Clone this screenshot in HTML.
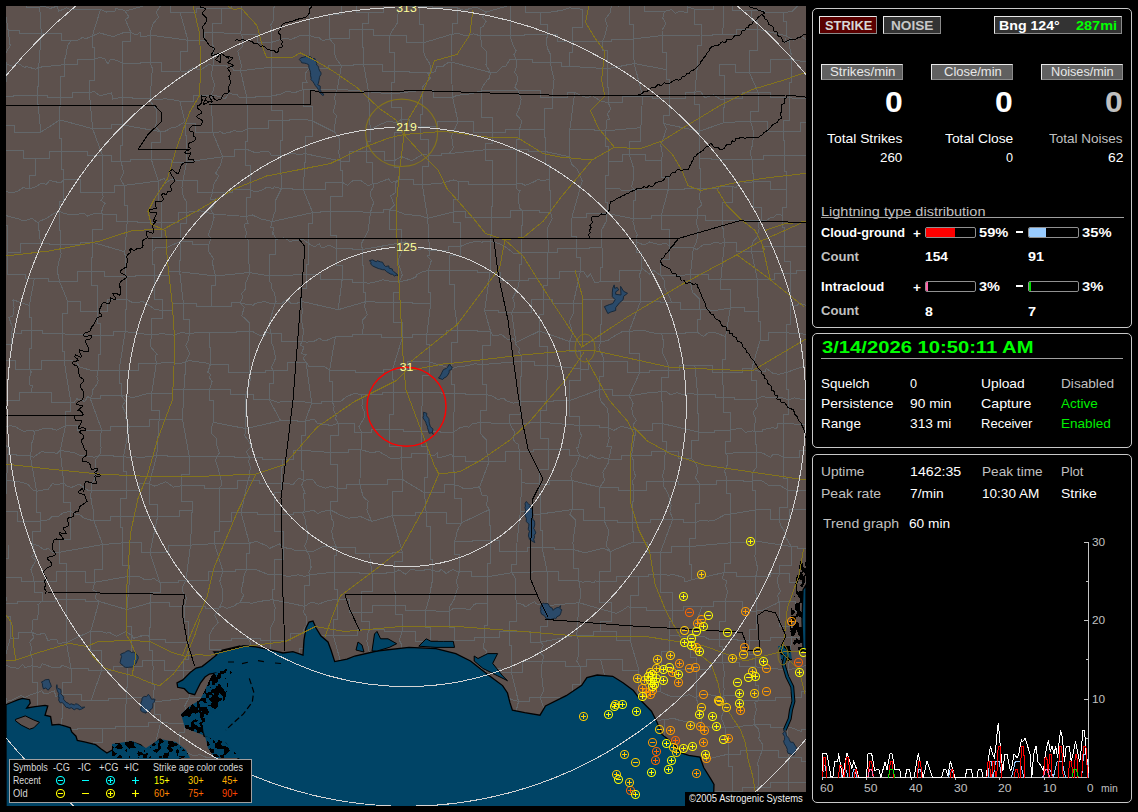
<!DOCTYPE html>
<html><head><meta charset="utf-8"><style>
html,body{margin:0;padding:0;background:#000;width:1138px;height:812px;overflow:hidden;position:relative;font-family:"Liberation Sans", sans-serif;}
.t{position:absolute;white-space:nowrap;font-family:"Liberation Sans", sans-serif;}
svg{position:absolute;}
</style></head><body>
<svg width="1138" height="812" viewBox="0 0 1138 812" style="left:0;top:0">
<defs><clipPath id="mc"><rect x="6" y="6" width="800" height="800"/></clipPath></defs>
<g clip-path="url(#mc)">
<rect x="6" y="6" width="800" height="800" fill="#5d514d"/>
<path d="M3.5,1.1 L26.7,1.1 L26.7,7.0 L39.7,7.0 M3.5,1.1 L8.1,30.0 M8.1,30.0 L19.2,30.0 L19.2,33.4 L41.3,33.4 M8.1,30.0 L9.4,39.9 L10.2,45.9 L4.3,55.0 L6.5,64.1 M6.5,64.1 L13.4,66.4 L17.0,62.7 L24.5,67.4 L26.4,66.7 L35.7,69.1 L38.7,67.3 M6.5,64.1 L6.5,81.3 L-0.2,81.3 L-0.2,96.1 M-0.2,96.1 L13.7,96.1 L13.7,95.4 L37.1,95.4 M-0.2,96.1 L-0.2,111.3 L-0.5,111.3 L-0.5,125.1 M-0.5,125.1 L14.4,125.1 L14.4,132.2 L40.8,132.2 M-0.5,125.1 L1.8,129.3 L-0.5,132.6 L-1.3,137.4 L-1.4,145.9 L-0.0,150.3 M-0.0,150.3 L23.1,150.3 L23.1,158.3 L35.6,158.3 M-0.0,150.3 L4.9,190.6 M4.9,190.6 L9.5,192.9 L16.5,191.8 L22.7,188.0 L22.1,187.4 L29.8,188.8 M4.9,190.6 L4.9,197.5 L0.7,197.5 L0.7,212.1 M0.7,212.1 L8.1,216.4 L18.0,218.6 L24.0,221.1 L31.8,218.3 L38.1,222.9 M0.7,212.1 L0.7,225.6 L7.8,225.6 L7.8,252.3 M7.8,252.3 L20.0,252.3 L20.0,243.0 L40.5,243.0 M7.8,252.3 L7.8,261.0 L7.1,261.0 L7.1,274.6 M7.1,274.6 L25.6,274.6 L25.6,278.4 L34.4,278.4 M12.7,299.7 L29.3,305.5 M12.7,299.7 L14.1,307.6 L12.9,315.9 L9.0,317.6 L12.9,329.0 L11.0,333.1 M11.0,333.1 L21.9,333.1 L21.9,330.6 L31.4,330.6 M11.0,333.1 L11.0,344.9 L1.0,344.9 L1.0,360.6 M1.0,360.6 L15.2,360.6 L15.2,369.8 L29.8,369.8 M1.0,360.6 L1.0,374.9 L3.3,374.9 L3.3,400.4 M3.3,400.4 L19.5,400.4 L19.5,392.5 L30.8,392.5 M3.3,400.4 L3.3,418.4 L1.5,418.4 L1.5,427.1 M1.5,427.1 L10.5,425.8 L14.4,426.3 L23.9,431.6 L28.7,430.1 L34.5,431.2 M1.5,427.1 L0.5,431.8 L3.1,439.4 L3.5,443.1 L9.0,448.4 L7.9,454.2 M7.9,454.2 L16.8,454.2 L16.8,455.3 L30.1,455.3 M7.9,454.2 L6.7,479.9 M6.7,479.9 L12.6,481.1 L21.1,482.2 L27.6,484.1 L33.1,490.1 L36.7,491.4 M6.7,479.9 L6.7,493.1 L-0.2,493.1 L-0.2,511.9 M-0.2,511.9 L17.9,511.9 L17.9,521.1 L40.5,521.1 M8.5,545.0 L8.5,558.4 L3.4,558.4 L3.4,577.2 M3.4,577.2 L21.5,577.2 L21.5,581.4 L34.0,581.4 M3.4,577.2 L3.5,583.7 L4.4,589.9 L6.6,599.4 L5.3,603.2 M5.3,603.2 L17.1,603.2 L17.1,601.1 L42.4,601.1 M5.3,603.2 L5.3,616.4 L10.1,616.4 L10.1,638.8 M10.1,638.8 L18.5,638.8 L18.5,632.2 L31.5,632.2 M10.1,638.8 L2.4,667.0 M2.4,667.0 L7.4,665.5 L10.6,667.3 L18.6,668.3 L22.8,664.4 L24.7,667.4 L32.3,665.8 M2.4,667.0 L6.4,701.3 M6.4,701.3 L11.2,700.4 L21.4,695.4 L24.3,697.7 L28.9,695.4 L37.2,692.7 M6.4,701.3 L9.2,723.0 M9.2,723.0 L12.7,750.7 M12.7,750.7 L17.1,751.6 L21.4,750.9 L26.9,756.3 L32.1,754.6 L34.2,756.9 M12.7,750.7 L12.7,774.0 L4.9,774.0 L4.9,789.6 M4.9,789.6 L11.1,789.5 L17.5,789.5 L20.7,791.9 L28.2,787.1 L33.7,787.3 L42.3,788.7 M4.9,789.6 L4.9,798.5 L1.1,798.5 L1.1,815.8 M1.1,815.8 L11.9,815.8 L11.9,817.6 L36.2,817.6 M1.1,815.8 L-0.5,848.4 M-0.5,848.4 L38.5,839.8 M39.7,7.0 L43.1,6.1 L50.1,8.5 L57.2,6.1 L58.7,11.3 L66.5,7.8 L71.6,9.9 M39.7,7.0 L41.3,33.4 M41.3,33.4 L61.6,33.4 L61.6,40.2 L71.2,40.2 M41.3,33.4 L38.7,67.3 M38.7,67.3 L64.5,64.6 M38.7,67.3 L38.7,86.6 L37.1,86.6 L37.1,95.4 M37.1,95.4 L47.9,95.4 L47.9,97.9 L60.4,97.9 M37.1,95.4 L40.8,132.2 M40.8,132.2 L59.9,119.9 M35.6,158.3 L49.4,158.3 L49.4,151.3 L61.9,151.3 M35.6,158.3 L35.6,175.8 L29.8,175.8 L29.8,188.8 M29.8,188.8 L36.3,186.5 L41.3,183.2 L46.4,184.3 L49.6,180.6 L60.9,182.9 L63.8,179.7 M38.1,222.9 L40.5,220.8 L47.1,218.1 L52.4,214.3 L59.0,211.1 M38.1,222.9 L40.5,243.0 M40.5,243.0 L49.9,243.0 L49.9,244.1 L60.4,244.1 M34.4,278.4 L48.4,278.4 L48.4,281.2 L59.4,281.2 M34.4,278.4 L29.3,305.5 M29.3,305.5 L29.3,317.7 L31.4,317.7 L31.4,330.6 M31.4,330.6 L42.3,330.6 L42.3,333.9 L62.5,333.9 M31.4,330.6 L31.4,348.7 L29.8,348.7 L29.8,369.8 M29.8,369.8 L41.3,369.8 L41.3,360.7 L64.1,360.7 M29.8,369.8 L31.2,371.9 L29.5,377.6 L29.5,383.5 L29.3,384.8 L32.6,385.9 L30.8,392.5 M30.8,392.5 L51.6,392.5 L51.6,402.9 L70.9,402.9 M34.5,431.2 L44.4,428.3 L50.3,428.4 L56.5,430.1 L65.5,425.8 M34.5,431.2 L33.7,437.9 L31.4,444.2 L31.3,451.3 L30.1,455.3 M30.1,455.3 L33.5,457.2 L41.6,451.6 L44.2,452.0 L51.2,452.7 L57.3,453.2 L60.2,450.4 M30.1,455.3 L36.7,491.4 M36.7,491.4 L40.7,490.4 L48.3,489.1 L52.4,483.8 L57.8,484.7 L63.8,482.7 M36.7,491.4 L36.7,512.1 L40.5,512.1 L40.5,521.1 M40.5,521.1 L48.7,519.8 L51.8,516.9 L58.3,516.5 L63.3,512.6 L70.6,511.3 M40.5,521.1 L40.5,531.3 L32.9,531.3 L32.9,544.8 M32.9,544.8 L37.5,545.1 L43.7,549.6 L48.4,548.6 L52.4,552.7 L59.3,552.3 M32.9,544.8 L35.1,553.7 L31.5,556.6 L35.9,560.2 L30.9,569.6 L33.8,577.8 L34.0,581.4 M34.0,581.4 L56.7,581.4 L56.7,571.1 L66.4,571.1 M34.0,581.4 L34.0,592.7 L42.4,592.7 L42.4,601.1 M42.4,601.1 L55.4,601.1 L55.4,599.4 L66.6,599.4 M42.4,601.1 L38.0,604.7 L38.2,611.5 L37.8,619.3 L33.0,620.0 L32.8,626.5 L31.5,632.2 M31.5,632.2 L36.3,634.2 L45.0,633.8 L47.8,640.3 L56.7,639.3 L58.2,643.3 L66.4,642.7 M31.5,632.2 L33.9,637.4 L29.7,642.2 L31.9,649.0 L30.1,652.7 L32.9,660.8 L32.3,665.8 M32.3,665.8 L40.1,667.4 L42.3,663.8 L52.9,667.6 L60.6,667.1 L62.2,665.3 L71.1,668.7 M32.3,665.8 L32.3,682.1 L37.2,682.1 L37.2,692.7 M37.2,692.7 L41.6,690.8 L43.9,693.8 L47.8,693.5 L54.2,690.8 L55.9,696.6 L62.7,694.1 M37.2,692.7 L37.2,707.9 L29.1,707.9 L29.1,724.9 M29.1,724.9 L61.3,729.8 M29.1,724.9 L34.2,756.9 M34.2,756.9 L47.4,756.9 L47.4,759.9 L66.5,759.9 M34.2,756.9 L42.3,788.7 M42.3,788.7 L46.8,786.7 L52.3,782.7 L60.6,784.3 L63.6,782.1 M36.2,817.6 L70.4,822.8 M36.2,817.6 L36.2,832.5 L38.5,832.5 L38.5,839.8 M38.5,839.8 L59.9,839.8 L59.9,850.3 L70.9,850.3 M71.6,9.9 L87.2,9.9 L87.2,9.4 L100.5,9.4 M71.2,40.2 L77.5,40.2 L82.2,37.7 L86.3,38.5 L92.2,36.2 M71.2,40.2 L67.6,45.4 L66.0,55.2 L64.9,58.9 L64.5,64.6 M64.5,64.6 L77.9,64.6 L77.9,59.4 L94.0,59.4 M64.5,64.6 L64.5,76.2 L60.4,76.2 L60.4,97.9 M60.4,97.9 L72.0,97.9 L72.0,92.9 L89.4,92.9 M60.4,97.9 L60.4,106.6 L59.9,106.6 L59.9,119.9 M59.9,119.9 L92.6,128.7 M59.9,119.9 L59.9,138.2 L61.9,138.2 L61.9,151.3 M61.9,151.3 L87.6,151.3 L87.6,155.3 L102.4,155.3 M61.9,151.3 L61.9,169.3 L63.8,169.3 L63.8,179.7 M63.8,179.7 L80.7,179.7 L80.7,192.8 L102.1,192.8 M63.8,179.7 L63.8,201.2 L59.0,201.2 L59.0,211.1 M59.0,211.1 L64.5,213.8 L74.5,214.8 L83.7,213.2 L87.6,216.0 L95.4,213.0 L102.4,214.1 M59.0,211.1 L59.0,230.9 L60.4,230.9 L60.4,244.1 M60.4,244.1 L80.7,244.1 L80.7,242.2 L92.1,242.2 M60.4,244.1 L61.1,253.8 L58.8,262.0 L57.1,270.0 L59.4,281.2 M59.4,281.2 L77.7,281.2 L77.7,271.9 L91.8,271.9 M59.4,281.2 L67.6,301.1 M67.6,301.1 L80.2,301.1 L80.2,311.6 L97.7,311.6 M67.6,301.1 L67.6,313.9 L62.5,313.9 L62.5,333.9 M62.5,333.9 L100.8,335.7 M62.5,333.9 L62.5,351.7 L64.1,351.7 L64.1,360.7 M64.1,360.7 L75.2,361.1 L80.3,367.3 L90.8,370.2 L98.1,370.2 M64.1,360.7 L70.9,402.9 M70.9,402.9 L73.9,402.7 L76.7,398.7 L84.9,401.5 L87.6,396.4 L90.2,398.2 M70.9,402.9 L70.9,411.6 L65.5,411.6 L65.5,425.8 M65.5,425.8 L77.0,425.8 L77.0,430.0 L101.7,430.0 M65.5,425.8 L60.2,450.4 M60.2,450.4 L66.7,451.4 L75.9,453.2 L80.3,455.7 L84.1,455.5 L93.9,457.2 L99.5,455.7 M60.2,450.4 L63.8,482.7 M63.8,482.7 L66.1,485.7 L71.3,487.6 L79.1,483.9 L83.4,487.0 L88.4,490.8 L91.5,490.0 M63.8,482.7 L63.8,502.1 L70.6,502.1 L70.6,511.3 M70.6,511.3 L74.5,513.9 L80.3,515.0 L82.2,516.8 L84.2,518.3 L91.9,520.4 L93.7,520.2 M70.6,511.3 L70.6,539.2 L59.3,539.2 L59.3,552.3 M59.3,552.3 L102.6,544.5 M59.3,552.3 L59.3,563.8 L66.4,563.8 L66.4,571.1 M66.4,571.1 L85.7,571.1 L85.7,582.3 L94.6,582.3 M66.4,571.1 L66.4,580.6 L66.6,580.6 L66.6,599.4 M66.6,599.4 L85.3,599.4 L85.3,601.4 L99.1,601.4 M66.6,599.4 L66.6,624.6 L66.4,624.6 L66.4,642.7 M66.4,642.7 L90.8,631.1 M66.4,642.7 L71.1,668.7 M71.1,668.7 L88.9,668.7 L88.9,670.3 L101.7,670.3 M71.1,668.7 L71.1,682.8 L62.7,682.8 L62.7,694.1 M62.7,694.1 L81.9,694.1 L81.9,700.6 L91.0,700.6 M62.7,694.1 L62.7,718.8 L61.3,718.8 L61.3,729.8 M61.3,729.8 L77.2,729.8 L77.2,728.2 L102.7,728.2 M61.3,729.8 L61.3,744.7 L66.5,744.7 L66.5,759.9 M66.5,759.9 L70.1,760.5 L77.1,756.3 L81.9,757.8 L87.6,755.3 L93.9,756.7 M66.5,759.9 L66.5,775.4 L63.6,775.4 L63.6,782.1 M63.6,782.1 L79.6,782.1 L79.6,779.2 L90.8,779.2 M70.4,822.8 L86.3,822.8 L86.3,818.1 L102.6,818.1 M70.4,822.8 L70.4,837.0 L70.9,837.0 L70.9,850.3 M70.9,850.3 L73.9,851.3 L80.8,852.1 L84.6,848.6 L89.4,848.6 L91.5,849.6 L96.4,852.1 M100.5,9.4 L106.6,12.2 L106.7,11.7 L114.7,11.7 L115.8,8.7 L122.9,9.8 L125.1,11.2 M100.5,9.4 L92.2,36.2 M92.2,36.2 L99.1,32.8 L113.2,36.6 L124.0,32.4 L130.6,32.0 M92.2,36.2 L92.2,47.1 L94.0,47.1 L94.0,59.4 M94.0,59.4 L99.2,57.5 L104.6,58.6 L107.9,64.1 L110.5,59.1 L117.4,60.6 L122.5,63.1 M94.0,59.4 L94.0,80.7 L89.4,80.7 L89.4,92.9 M89.4,92.9 L93.8,91.2 L99.9,95.9 L111.5,92.9 L112.8,99.1 L122.4,97.2 M89.4,92.9 L92.6,128.7 M92.6,128.7 L111.3,128.7 L111.3,124.9 L122.6,124.9 M92.6,128.7 L102.4,155.3 M102.4,155.3 L111.7,155.3 L111.7,161.7 L120.8,161.7 M102.4,155.3 L102.4,175.9 L102.1,175.9 L102.1,192.8 M102.1,192.8 L114.0,192.8 L114.0,185.4 L124.0,185.4 M102.1,192.8 L103.2,197.0 L101.0,200.4 L105.0,203.4 L103.2,205.8 L101.4,212.9 L102.4,214.1 M102.4,214.1 L116.5,214.1 L116.5,221.7 L127.2,221.7 M102.4,214.1 L102.4,229.9 L92.1,229.9 L92.1,242.2 M92.1,242.2 L124.9,251.8 M92.1,242.2 L92.1,257.8 L91.8,257.8 L91.8,271.9 M91.8,271.9 L104.5,271.9 L104.5,276.4 L126.0,276.4 M91.8,271.9 L91.8,285.6 L97.7,285.6 L97.7,311.6 M97.7,311.6 L107.4,311.6 L107.4,299.3 L126.3,299.3 M97.7,311.6 L97.7,323.6 L100.8,323.6 L100.8,335.7 M100.8,335.7 L113.7,335.7 L113.7,331.6 L125.2,331.6 M100.8,335.7 L100.8,354.2 L98.1,354.2 L98.1,370.2 M98.1,370.2 L105.0,370.2 L105.0,370.2 L119.1,370.2 M98.1,370.2 L96.9,376.9 L98.2,380.3 L96.9,384.3 L92.6,390.0 L91.8,396.4 L90.2,398.2 M90.2,398.2 L100.7,398.2 L100.7,395.6 L121.4,395.6 M90.2,398.2 L101.7,430.0 M101.7,430.0 L110.4,430.0 L110.4,426.8 L129.2,426.8 M101.7,430.0 L100.1,436.3 L100.4,442.6 L101.1,447.6 L100.3,453.0 L99.5,455.7 M99.5,455.7 L113.9,455.7 L113.9,456.3 L123.6,456.3 M99.5,455.7 L95.2,460.0 L95.3,467.2 L95.6,472.0 L94.1,480.5 L92.0,483.5 L91.5,490.0 M91.5,490.0 L126.8,490.0 M91.5,490.0 L90.6,495.7 L92.3,507.2 L93.6,510.4 L93.7,520.2 M93.7,520.2 L110.3,520.2 L110.3,516.8 L120.5,516.8 M93.7,520.2 L102.6,544.5 M102.6,544.5 L122.5,542.9 M102.6,544.5 L102.6,569.1 L94.6,569.1 L94.6,582.3 M94.6,582.3 L129.8,576.1 M94.6,582.3 L92.9,590.0 L96.8,591.7 L95.2,598.6 L99.1,601.4 M99.1,601.4 L126.9,609.6 M99.1,601.4 L90.8,631.1 M90.8,631.1 L99.7,631.2 L106.7,633.1 L108.7,632.1 L116.4,636.2 L125.5,631.8 L131.8,635.2 M90.8,631.1 L90.8,650.2 L101.7,650.2 L101.7,670.3 M101.7,670.3 L113.1,670.3 L113.1,666.1 L127.6,666.1 M101.7,670.3 L91.0,700.6 M91.0,700.6 L108.0,700.6 L108.0,698.7 L126.2,698.7 M102.7,728.2 L115.6,728.2 L115.6,726.5 L125.3,726.5 M102.7,728.2 L102.7,742.4 L93.9,742.4 L93.9,756.7 M93.9,756.7 L125.7,762.2 M93.9,756.7 L90.6,760.8 L94.5,766.4 L94.0,768.7 L92.7,770.9 L90.0,777.2 L90.8,779.2 M90.8,779.2 L94.6,784.0 L102.5,782.4 L111.9,783.7 L118.4,788.5 L121.5,790.5 L128.8,791.3 M90.8,779.2 L93.2,789.3 L97.4,797.7 L95.8,800.8 L102.6,811.3 L102.6,818.1 M102.6,818.1 L120.6,818.1 L120.6,812.6 L132.2,812.6 M102.6,818.1 L96.4,852.1 M96.4,852.1 L126.8,852.2 M125.1,11.2 L160.8,0.9 M125.1,11.2 L129.0,16.9 L125.3,19.7 L129.7,29.7 L130.6,32.0 M130.6,32.0 L135.9,35.1 L140.7,32.2 L140.7,36.3 L147.0,36.1 L150.7,35.2 M130.6,32.0 L130.6,41.5 L122.5,41.5 L122.5,63.1 M122.5,63.1 L140.6,63.1 L140.6,62.4 L150.0,62.4 M122.5,63.1 L122.5,74.7 L122.4,74.7 L122.4,97.2 M122.4,97.2 L132.1,97.2 L132.1,98.4 L150.0,98.4 M122.4,97.2 L122.4,114.5 L122.6,114.5 L122.6,124.9 M122.6,124.9 L160.0,131.6 M122.6,124.9 L122.6,145.4 L120.8,145.4 L120.8,161.7 M120.8,161.7 L130.3,161.7 L130.3,159.0 L151.2,159.0 M120.8,161.7 L122.5,167.1 L123.5,172.6 L120.5,179.0 L124.0,185.4 M124.0,185.4 L158.2,181.0 M124.0,185.4 L124.0,205.0 L127.2,205.0 L127.2,221.7 M127.2,221.7 L137.6,221.7 L137.6,222.5 L161.4,222.5 M127.2,221.7 L124.9,251.8 M124.9,251.8 L126.0,276.4 M126.0,276.4 L135.7,276.4 L135.7,275.8 L154.6,275.8 M126.0,276.4 L126.0,290.3 L126.3,290.3 L126.3,299.3 M126.3,299.3 L132.7,302.6 L143.1,301.7 L151.1,306.5 L153.9,309.1 L162.9,310.7 M126.3,299.3 L126.3,309.4 L125.2,309.4 L125.2,331.6 M125.2,331.6 L151.3,335.0 M125.2,331.6 L119.1,370.2 M119.1,370.2 L138.1,370.2 L138.1,363.7 L156.2,363.7 M119.1,370.2 L119.1,383.5 L121.4,383.5 L121.4,395.6 M121.4,395.6 L125.4,396.0 L132.9,397.6 L142.2,395.1 L143.4,394.2 L151.7,393.5 M121.4,395.6 L125.6,401.1 L122.4,406.2 L127.5,416.9 L125.6,417.7 L129.2,426.8 M129.2,426.8 L149.9,426.8 L149.9,419.3 L159.1,419.3 M129.2,426.8 L123.6,456.3 M123.6,456.3 L128.5,457.8 L134.0,456.8 L140.6,457.4 L152.6,456.4 L156.8,455.2 M123.6,456.3 L123.6,471.4 L126.8,471.4 L126.8,490.0 M126.8,490.0 L139.4,490.0 L139.4,483.6 L149.3,483.6 M126.8,490.0 L126.8,498.3 L120.5,498.3 L120.5,516.8 M120.5,516.8 L136.9,516.8 L136.9,516.2 L157.7,516.2 M120.5,516.8 L120.5,527.6 L122.5,527.6 L122.5,542.9 M122.5,542.9 L141.5,542.9 L141.5,552.8 L149.9,552.8 M122.5,542.9 L122.5,565.3 L129.8,565.3 L129.8,576.1 M129.8,576.1 L139.3,576.4 L143.9,579.3 L154.8,578.9 L160.0,582.6 M129.8,576.1 L126.9,609.6 M126.9,609.6 L150.5,602.7 M126.9,609.6 L126.9,626.3 L131.8,626.3 L131.8,635.2 M131.8,635.2 L133.4,638.3 L141.9,635.9 L139.6,635.7 L148.8,636.0 L149.6,639.9 M131.8,635.2 L131.8,653.6 L127.6,653.6 L127.6,666.1 M127.6,666.1 L142.0,666.1 L142.0,660.8 L152.8,660.8 M127.6,666.1 L127.6,687.8 L126.2,687.8 L126.2,698.7 M126.2,698.7 L133.9,697.7 L141.3,697.3 L145.5,701.6 L154.9,701.8 M126.2,698.7 L125.3,726.5 M125.3,726.5 L148.4,726.5 L148.4,722.6 L160.5,722.6 M125.3,726.5 L125.3,750.9 L125.7,750.9 L125.7,762.2 M125.7,762.2 L125.7,773.5 L128.8,773.5 L128.8,791.3 M128.8,791.3 L157.0,788.8 M128.8,791.3 L128.5,794.8 L132.4,797.5 L128.8,804.8 L133.4,806.9 L130.3,807.1 L132.2,812.6 M132.2,812.6 L137.9,812.6 L137.9,809.8 L150.3,809.8 M132.2,812.6 L132.2,833.3 L126.8,833.3 L126.8,852.2 M126.8,852.2 L145.1,852.2 L145.1,845.0 L158.6,845.0 M160.8,0.9 L170.8,0.9 L170.8,12.1 L180.0,12.1 M160.8,0.9 L160.4,6.0 L156.3,11.9 L158.6,17.4 L153.4,23.2 L150.2,32.5 L150.7,35.2 M150.7,35.2 L187.9,40.2 M150.7,35.2 L150.7,50.0 L150.0,50.0 L150.0,62.4 M150.0,62.4 L161.5,62.4 L161.5,71.0 L180.2,71.0 M150.0,62.4 L152.5,68.7 L151.2,79.3 L150.9,89.7 L150.0,98.4 M150.0,98.4 L157.3,99.9 L164.8,98.8 L172.7,99.7 L179.9,101.1 M150.0,98.4 L151.1,102.4 L156.9,110.2 L157.0,120.2 L155.4,126.7 L160.0,131.6 M160.0,131.6 L163.6,132.0 L172.3,127.5 L175.7,127.3 L183.3,122.7 L185.4,123.7 M160.0,131.6 L160.0,142.0 L151.2,142.0 L151.2,159.0 M151.2,159.0 L171.4,159.0 L171.4,162.0 L186.7,162.0 M151.2,159.0 L158.2,181.0 M158.2,181.0 L164.5,178.2 L165.7,182.9 L172.4,178.6 L172.5,179.4 L176.3,180.0 L182.8,180.8 M158.2,181.0 L158.2,201.0 L161.4,201.0 L161.4,222.5 M161.4,222.5 L178.8,222.5 L178.8,212.3 L186.4,212.3 M161.4,222.5 L161.4,237.2 L152.1,237.2 L152.1,252.3 M152.1,252.3 L156.2,247.3 L166.2,247.8 L174.2,244.2 L180.5,241.3 M152.1,252.3 L152.1,264.6 L154.6,264.6 L154.6,275.8 M154.6,275.8 L168.1,275.8 L168.1,271.8 L179.7,271.8 M154.6,275.8 L154.6,299.0 L162.9,299.0 L162.9,310.7 M162.9,310.7 L172.6,310.7 L172.6,303.3 L183.4,303.3 M162.9,310.7 L162.9,318.8 L151.3,318.8 L151.3,335.0 M151.3,335.0 L159.6,333.9 L163.9,333.9 L173.5,335.1 L180.7,332.9 L189.6,333.1 M151.3,335.0 L150.7,342.9 L151.0,347.2 L157.1,354.4 L155.7,355.4 L156.2,363.7 M156.2,363.7 L165.2,362.5 L171.3,362.6 L181.0,363.6 L186.0,361.5 M156.2,363.7 L151.7,393.5 M151.7,393.5 L172.2,393.5 L172.2,389.3 L183.9,389.3 M151.7,393.5 L151.7,410.4 L159.1,410.4 L159.1,419.3 M159.1,419.3 L170.9,419.3 L170.9,419.2 L182.5,419.2 M159.1,419.3 L156.8,455.2 M156.8,455.2 L167.0,455.2 L167.0,456.7 L189.3,456.7 M156.8,455.2 L149.3,483.6 M149.3,483.6 L154.9,486.2 L165.9,481.7 L173.5,487.2 L181.7,485.6 M149.3,483.6 L149.3,504.1 L157.7,504.1 L157.7,516.2 M157.7,516.2 L179.9,516.2 L179.9,510.5 L192.1,510.5 M157.7,516.2 L149.9,552.8 M149.9,552.8 L168.7,552.8 L168.7,545.1 L190.5,545.1 M149.9,552.8 L160.0,582.6 M160.0,582.6 L178.0,582.6 L178.0,580.7 L185.9,580.7 M160.0,582.6 L160.0,592.8 L150.5,592.8 L150.5,602.7 M150.5,602.7 L169.7,602.7 L169.7,606.1 L184.5,606.1 M150.5,602.7 L150.5,627.1 L149.6,627.1 L149.6,639.9 M149.6,639.9 L165.2,639.9 L165.2,642.8 L188.6,642.8 M149.6,639.9 L149.6,650.7 L152.8,650.7 L152.8,660.8 M152.8,660.8 L164.7,660.8 L164.7,670.7 L183.8,670.7 M152.8,660.8 L153.1,668.1 L152.7,676.3 L152.1,683.8 L154.5,685.4 L153.4,695.1 L154.9,701.8 M154.9,701.8 L188.9,697.9 M154.9,701.8 L154.9,714.7 L160.5,714.7 L160.5,722.6 M160.5,722.6 L184.7,723.9 M160.5,722.6 L151.1,761.9 M151.1,761.9 L155.0,757.9 L160.6,759.6 L166.0,753.1 L176.3,754.9 L179.8,750.8 M151.1,761.9 L151.1,777.7 L157.0,777.7 L157.0,788.8 M157.0,788.8 L165.9,788.8 L165.9,789.4 L180.0,789.4 M157.0,788.8 L150.3,809.8 M150.3,809.8 L162.0,809.8 L162.0,811.3 L182.6,811.3 M150.3,809.8 L158.6,845.0 M158.6,845.0 L166.8,845.0 L166.8,850.8 L180.2,850.8 M180.0,12.1 L196.1,12.1 L196.1,8.4 L221.2,8.4 M180.0,12.1 L187.9,40.2 M187.9,40.2 L204.1,40.2 L204.1,32.4 L212.9,32.4 M187.9,40.2 L187.9,51.4 L180.2,51.4 L180.2,71.0 M180.2,71.0 L187.4,71.3 L192.5,68.0 L195.2,68.5 L200.4,70.0 L208.6,64.7 L213.1,65.4 M179.9,101.1 L193.0,101.1 L193.0,95.2 L211.2,95.2 M179.9,101.1 L185.4,123.7 M185.4,123.7 L195.6,123.7 L195.6,132.5 L212.7,132.5 M185.4,123.7 L185.4,135.8 L186.7,135.8 L186.7,162.0 M186.7,162.0 L222.6,156.7 M186.7,162.0 L182.8,180.8 M182.8,180.8 L197.5,180.8 L197.5,192.5 L212.4,192.5 M182.8,180.8 L181.9,187.4 L183.4,197.1 L187.0,202.7 L186.4,212.3 M186.4,212.3 L193.6,211.6 L200.3,210.8 L203.6,211.7 L213.3,214.0 M186.4,212.3 L186.4,223.0 L180.5,223.0 L180.5,241.3 M180.5,241.3 L192.8,241.3 L192.8,244.3 L209.0,244.3 M180.5,241.3 L180.5,260.6 L179.7,260.6 L179.7,271.8 M179.7,271.8 L215.6,276.0 M179.7,271.8 L183.4,303.3 M183.4,303.3 L196.4,303.3 L196.4,306.1 L211.8,306.1 M183.4,303.3 L183.4,319.1 L189.6,319.1 L189.6,333.1 M189.6,333.1 L209.1,332.7 M189.6,333.1 L188.0,341.1 L185.8,345.3 L189.6,353.4 L186.0,361.5 M186.0,361.5 L189.7,360.7 L193.3,361.2 L198.5,362.0 L205.7,362.9 L210.3,364.6 M186.0,361.5 L183.9,389.3 M183.9,389.3 L201.3,389.3 L201.3,389.3 L209.6,389.3 M183.9,389.3 L182.5,419.2 M182.5,419.2 L189.3,456.7 M189.3,456.7 L198.7,456.7 L198.7,456.4 L217.2,456.4 M189.3,456.7 L189.3,474.6 L181.7,474.6 L181.7,485.6 M181.7,485.6 L204.3,485.6 L204.3,488.2 L219.5,488.2 M181.7,485.6 L181.7,501.5 L192.1,501.5 L192.1,510.5 M192.1,510.5 L190.5,545.1 M190.5,545.1 L214.5,543.6 M190.5,545.1 L185.9,580.7 M185.9,580.7 L208.4,580.7 L208.4,571.1 L222.8,571.1 M185.9,580.7 L183.0,586.1 L182.8,591.7 L186.5,597.8 L184.5,606.1 M184.5,606.1 L205.4,606.1 L205.4,608.0 L219.1,608.0 M184.5,606.1 L184.5,621.7 L188.6,621.7 L188.6,642.8 M188.6,642.8 L188.6,659.9 L183.8,659.9 L183.8,670.7 M183.8,670.7 L197.6,670.7 L197.6,667.8 L221.5,667.8 M183.8,670.7 L183.3,675.8 L185.3,687.1 L190.6,692.8 L188.9,697.9 M188.9,697.9 L207.5,697.9 L207.5,700.4 L219.3,700.4 M188.9,697.9 L185.6,704.4 L184.8,705.8 L186.2,711.8 L188.9,715.7 L187.2,719.5 L184.7,723.9 M184.7,723.9 L195.3,723.9 L195.3,726.3 L211.0,726.3 M184.7,723.9 L184.7,732.5 L179.8,732.5 L179.8,750.8 M179.8,750.8 L186.4,752.1 L193.8,755.8 L200.1,754.5 L206.7,757.6 L212.7,756.7 L216.1,760.7 M180.0,789.4 L205.6,789.4 L205.6,790.6 L220.3,790.6 M180.0,789.4 L180.0,800.0 L182.6,800.0 L182.6,811.3 M182.6,811.3 L205.5,811.3 L205.5,821.5 L217.2,821.5 M182.6,811.3 L180.2,850.8 M180.2,850.8 L187.7,853.1 L194.9,849.5 L196.9,850.7 L207.8,848.4 L212.7,851.1 L218.6,848.7 M221.2,8.4 L231.6,8.4 L231.6,-0.6 L242.2,-0.6 M221.2,8.4 L221.2,23.4 L212.9,23.4 L212.9,32.4 M212.9,32.4 L240.9,34.0 M212.9,32.4 L212.9,45.1 L213.1,45.1 L213.1,65.4 M213.1,65.4 L214.9,65.3 L225.2,65.3 L229.1,67.5 L231.6,67.4 L234.2,70.6 L240.5,70.7 M213.1,65.4 L211.4,74.1 L211.5,75.7 L214.3,84.0 L213.9,88.6 L211.2,95.2 M211.2,95.2 L218.9,96.3 L225.2,98.9 L228.4,93.6 L237.1,94.6 L239.4,97.8 L246.8,97.8 M211.2,95.2 L212.7,132.5 M212.7,132.5 L220.7,131.9 L223.6,133.7 L232.6,131.5 L233.5,130.6 L241.6,131.9 L247.8,128.5 M212.7,132.5 L222.6,156.7 M222.6,156.7 L234.4,156.7 L234.4,149.0 L245.9,149.0 M222.6,156.7 L220.5,165.0 L215.6,173.3 L218.8,175.9 L213.7,184.2 L212.4,192.5 M212.4,192.5 L232.9,192.5 L232.9,189.5 L250.2,189.5 M212.4,192.5 L210.4,199.5 L215.1,199.0 L213.5,205.9 L210.4,209.1 L213.3,214.0 M213.3,214.0 L246.0,216.5 M213.3,214.0 L214.1,217.2 L211.9,225.6 L208.2,234.9 L210.7,238.2 L209.0,244.3 M209.0,244.3 L208.3,251.1 L213.6,258.8 L212.1,261.2 L214.4,272.0 L215.6,276.0 M215.6,276.0 L249.3,272.5 M215.6,276.0 L215.6,285.7 L211.8,285.7 L211.8,306.1 M211.8,306.1 L231.2,306.1 L231.2,302.7 L240.0,302.7 M209.1,332.7 L236.3,332.7 L236.3,331.9 L249.2,331.9 M209.1,332.7 L209.1,347.9 L210.3,347.9 L210.3,364.6 M210.3,364.6 L228.1,364.6 L228.1,372.7 L249.4,372.7 M210.3,364.6 L207.8,372.1 L210.7,374.5 L209.3,377.4 L212.1,381.6 L209.6,389.3 M209.6,389.3 L230.1,389.3 L230.1,394.4 L245.9,394.4 M209.6,389.3 L209.6,400.2 L213.3,400.2 L213.3,422.3 M213.3,422.3 L245.7,428.6 M213.3,422.3 L211.6,427.6 L211.6,433.8 L216.4,438.2 L216.5,444.2 L219.4,453.0 L217.2,456.4 M217.2,456.4 L234.8,456.4 L234.8,457.6 L249.7,457.6 M217.2,456.4 L215.3,460.5 L218.8,469.8 L219.2,473.5 L220.4,477.0 L221.8,484.4 L219.5,488.2 M219.5,488.2 L237.2,488.2 L237.2,480.1 L248.0,480.1 M219.5,488.2 L219.5,509.7 L219.0,509.7 L219.0,521.3 M219.0,521.3 L231.5,521.3 L231.5,512.6 L241.1,512.6 M219.0,521.3 L219.0,531.0 L214.5,531.0 L214.5,543.6 M214.5,543.6 L232.0,543.6 L232.0,543.3 L249.4,543.3 M214.5,543.6 L222.8,571.1 M222.8,571.1 L235.6,571.1 L235.6,569.2 L246.9,569.2 M222.8,571.1 L219.8,581.3 L222.5,589.6 L222.4,601.2 L219.1,608.0 M219.1,608.0 L221.9,605.9 L226.9,608.5 L228.8,607.8 L234.2,606.1 L237.0,603.7 L239.8,602.8 M219.1,608.0 L214.8,615.6 L218.2,622.9 L212.6,628.8 L209.0,636.2 L209.6,640.7 M209.6,640.7 L231.0,640.7 L231.0,638.7 L248.4,638.7 M209.6,640.7 L209.6,649.5 L221.5,649.5 L221.5,667.8 M221.5,667.8 L248.5,663.1 M221.5,667.8 L221.5,688.3 L219.3,688.3 L219.3,700.4 M219.3,700.4 L234.1,700.4 L234.1,695.5 L246.2,695.5 M219.3,700.4 L219.3,714.1 L211.0,714.1 L211.0,726.3 M211.0,726.3 L218.3,727.8 L228.7,724.8 L235.2,720.1 L245.5,720.7 M211.0,726.3 L211.0,741.8 L216.1,741.8 L216.1,760.7 M216.1,760.7 L216.1,771.0 L220.3,771.0 L220.3,790.6 M220.3,790.6 L225.1,793.1 L236.2,793.0 L242.5,790.5 L249.1,789.2 L252.7,792.1 M220.3,790.6 L220.3,805.5 L217.2,805.5 L217.2,821.5 M217.2,821.5 L239.2,815.4 M217.2,821.5 L217.2,831.7 L218.6,831.7 L218.6,848.7 M218.6,848.7 L230.6,848.7 L230.6,852.6 L250.5,852.6 M242.2,-0.6 L257.9,-0.6 L257.9,2.8 L275.3,2.8 M242.2,-0.6 L240.9,34.0 M240.9,34.0 L257.1,34.0 L257.1,42.2 L271.9,42.2 M240.9,34.0 L242.5,37.3 L242.2,46.9 L237.8,51.5 L240.1,60.5 L241.4,66.1 L240.5,70.7 M240.5,70.7 L271.9,67.1 M240.5,70.7 L246.8,97.8 M246.8,97.8 L255.1,97.8 L255.1,96.3 L271.0,96.3 M246.8,97.8 L247.8,128.5 M247.8,128.5 L268.0,128.5 L268.0,120.9 L282.3,120.9 M247.8,128.5 L247.8,141.7 L245.9,141.7 L245.9,149.0 M245.9,149.0 L255.7,152.9 L261.5,151.7 L268.6,151.1 L271.2,155.1 L280.5,156.1 M245.9,149.0 L245.9,165.2 L250.2,165.2 L250.2,189.5 M250.2,189.5 L254.0,191.3 L260.7,190.9 L267.1,187.1 L273.4,188.7 L274.0,186.6 L281.4,188.8 M250.2,189.5 L250.2,197.9 L246.0,197.9 L246.0,216.5 M246.0,216.5 L252.4,215.0 L261.5,219.2 L263.1,219.2 L272.2,221.6 M246.0,216.5 L248.1,223.6 L244.0,224.1 L246.5,232.8 L245.4,237.5 L248.2,239.9 M248.2,239.9 L249.3,272.5 M249.3,272.5 L269.1,275.9 M249.3,272.5 L249.1,274.9 L246.0,282.0 L245.7,288.9 L241.6,293.6 L242.7,297.5 L240.0,302.7 M240.0,302.7 L245.2,304.0 L253.6,305.2 L254.7,303.4 L265.0,301.4 L270.9,304.0 L275.3,303.2 M240.0,302.7 L244.2,307.2 L241.9,315.7 L249.5,322.9 L249.2,331.9 M249.2,331.9 L253.3,331.7 L253.7,332.3 L260.0,335.6 L265.3,335.5 L264.9,331.4 L271.0,333.8 M249.2,331.9 L249.4,372.7 M249.4,372.7 L265.8,372.7 L265.8,370.8 L273.4,370.8 M249.4,372.7 L250.6,378.4 L249.6,383.5 L247.5,389.5 L245.9,394.4 M245.9,394.4 L253.3,394.4 L253.3,399.5 L269.0,399.5 M245.9,394.4 L245.9,410.1 L245.7,410.1 L245.7,428.6 M245.7,428.6 L280.7,420.7 M245.7,428.6 L244.8,435.6 L248.7,441.2 L251.0,446.7 L246.4,451.9 L249.7,457.6 M249.7,457.6 L262.5,457.6 L262.5,459.0 L282.0,459.0 M249.7,457.6 L248.5,462.1 L250.4,466.7 L249.1,477.3 L248.0,480.1 M248.0,480.1 L259.1,480.1 L259.1,483.1 L281.6,483.1 M248.0,480.1 L241.1,512.6 M241.1,512.6 L257.0,512.6 L257.0,514.5 L274.2,514.5 M241.1,512.6 L249.4,543.3 M249.4,543.3 L256.5,541.4 L257.7,541.9 L267.6,546.3 L269.6,548.4 L279.2,543.9 L283.0,547.2 M249.4,543.3 L249.4,553.7 L246.9,553.7 L246.9,569.2 M246.9,569.2 L249.5,569.6 L255.8,569.5 L265.9,573.6 L268.5,574.6 L274.0,575.0 M246.9,569.2 L244.2,574.4 L243.6,579.7 L241.1,591.6 L243.8,595.0 L239.8,602.8 M239.8,602.8 L248.2,602.3 L250.7,603.5 L258.5,601.7 L265.5,600.5 L272.9,599.7 M248.4,638.7 L260.7,638.7 L260.7,640.7 L270.4,640.7 M248.4,638.7 L251.0,643.7 L250.1,649.2 L249.3,651.6 L250.0,660.5 L248.5,663.1 M248.5,663.1 L257.0,663.1 L257.0,672.1 L273.0,672.1 M246.2,695.5 L272.5,692.7 M246.2,695.5 L247.6,699.0 L244.5,702.7 L247.0,708.9 L244.2,718.4 L245.5,720.7 M245.5,720.7 L276.2,721.7 M245.5,720.7 L251.5,751.8 M251.5,751.8 L258.9,751.8 L258.9,762.4 L274.2,762.4 M251.5,751.8 L251.5,769.7 L252.7,769.7 L252.7,792.1 M252.7,792.1 L267.0,792.1 L267.0,790.4 L281.4,790.4 M239.2,815.4 L262.7,815.4 L262.7,821.8 L277.8,821.8 M239.2,815.4 L239.2,831.1 L250.5,831.1 L250.5,852.6 M250.5,852.6 L282.2,846.7 M275.3,2.8 L309.1,-0.3 M275.3,2.8 L273.6,8.9 L273.3,20.3 L270.9,24.7 L271.7,33.4 L271.9,42.2 M271.9,42.2 L283.7,38.5 L291.6,39.3 L300.9,35.1 L309.3,35.3 M271.9,42.2 L271.9,59.5 L271.9,59.5 L271.9,67.1 M271.9,67.1 L309.5,68.0 M271.9,67.1 L271.9,76.7 L271.0,76.7 L271.0,96.3 M271.0,96.3 L281.6,93.8 L287.2,91.1 L294.2,92.8 L303.0,89.7 M271.0,96.3 L271.0,110.2 L282.3,110.2 L282.3,120.9 M282.3,120.9 L288.5,120.1 L298.7,119.2 L302.7,119.1 L312.0,120.8 M282.3,120.9 L282.3,140.5 L280.5,140.5 L280.5,156.1 M280.5,156.1 L284.4,154.8 L292.3,153.7 L299.2,154.3 L305.6,153.8 M280.5,156.1 L281.4,188.8 M281.4,188.8 L292.2,188.8 L292.2,189.3 L303.2,189.3 M281.4,188.8 L279.2,193.1 L275.2,201.1 L275.7,211.1 L274.4,212.5 L272.2,221.6 M272.2,221.6 L312.7,212.6 M272.2,221.6 L270.6,227.8 L273.8,227.1 L272.4,234.4 L273.4,233.3 L275.8,239.3 M275.8,239.3 L284.0,237.9 L290.6,241.7 L292.8,240.3 L303.4,239.8 L308.2,243.2 M275.8,239.3 L275.8,254.1 L269.1,254.1 L269.1,275.9 M269.1,275.9 L306.8,274.5 M269.1,275.9 L269.9,281.9 L271.4,283.4 L272.2,290.2 L274.1,292.0 L276.1,301.3 L275.3,303.2 M275.3,303.2 L281.5,303.7 L286.9,299.5 L290.7,303.4 L295.8,303.8 L301.3,301.3 M275.3,303.2 L273.1,309.8 L271.3,315.9 L269.2,324.2 L271.0,333.8 M271.0,333.8 L281.1,333.8 L281.1,341.7 L301.9,341.7 M271.0,333.8 L271.3,342.9 L272.5,344.4 L274.2,350.5 L275.6,358.2 L271.4,367.4 L273.4,370.8 M273.4,370.8 L287.7,370.8 L287.7,362.1 L306.0,362.1 M273.4,370.8 L273.4,383.7 L269.0,383.7 L269.0,399.5 M269.0,399.5 L277.6,402.2 L291.0,401.1 L301.3,401.4 L311.7,403.0 M269.0,399.5 L280.7,420.7 M280.7,420.7 L297.1,420.7 L297.1,421.0 L305.3,421.0 M282.0,459.0 L293.8,459.0 L293.8,450.3 L301.7,450.3 M282.0,459.0 L282.0,467.0 L281.6,467.0 L281.6,483.1 M281.6,483.1 L288.4,483.5 L292.6,484.7 L293.5,484.0 L298.8,478.1 L303.8,480.3 M281.6,483.1 L281.6,492.7 L274.2,492.7 L274.2,514.5 M274.2,514.5 L293.5,514.5 L293.5,512.6 L302.3,512.6 M274.2,514.5 L274.2,531.3 L283.0,531.3 L283.0,547.2 M283.0,547.2 L288.2,548.4 L290.7,548.6 L295.2,550.4 L298.2,550.2 L303.3,550.3 L307.0,551.4 M283.0,547.2 L283.0,559.8 L274.0,559.8 L274.0,575.0 M274.0,575.0 L278.4,574.2 L286.0,576.0 L289.2,576.3 L298.4,574.7 L304.6,576.6 L309.5,574.8 M274.0,575.0 L274.0,589.1 L272.9,589.1 L272.9,599.7 M272.9,599.7 L304.8,606.3 M272.9,599.7 L275.1,607.5 L274.5,620.4 L270.4,628.2 L270.4,640.7 M270.4,640.7 L290.2,640.7 L290.2,633.7 L304.3,633.7 M270.4,640.7 L270.4,654.7 L273.0,654.7 L273.0,672.1 M273.0,672.1 L270.1,675.1 L272.2,681.9 L270.1,688.1 L272.5,692.7 M272.5,692.7 L272.5,709.6 L276.2,709.6 L276.2,721.7 M276.2,721.7 L290.9,721.7 L290.9,727.8 L306.0,727.8 M276.2,721.7 L274.2,762.4 M274.2,762.4 L299.5,762.4 L299.5,752.0 L311.1,752.0 M274.2,762.4 L273.6,765.5 L277.2,773.3 L277.0,778.5 L279.9,779.0 L277.6,785.4 L281.4,790.4 M281.4,790.4 L284.9,785.5 L292.3,787.8 L296.1,781.9 L302.8,782.5 M281.4,790.4 L281.4,808.5 L277.8,808.5 L277.8,821.8 M277.8,821.8 L288.7,821.8 L288.7,815.2 L304.6,815.2 M277.8,821.8 L276.1,825.5 L277.5,832.4 L280.9,837.9 L282.2,846.7 M282.2,846.7 L300.3,846.7 L300.3,850.9 L312.4,850.9 M309.1,-0.3 L330.6,-0.3 L330.6,-0.7 L341.2,-0.7 M309.1,-0.3 L309.1,11.3 L309.3,11.3 L309.3,35.3 M309.3,35.3 L316.1,37.6 L318.4,37.1 L322.5,40.6 L329.5,38.9 M309.3,35.3 L309.3,47.1 L309.5,47.1 L309.5,68.0 M309.5,68.0 L328.3,68.0 L328.3,65.6 L341.5,65.6 M309.5,68.0 L305.8,72.9 L305.1,77.9 L307.4,82.8 L302.7,82.9 L303.0,89.7 M303.0,89.7 L337.2,89.0 M303.0,89.7 L303.0,106.3 L312.0,106.3 L312.0,120.8 M312.0,120.8 L334.5,132.0 M312.0,120.8 L312.0,136.3 L305.6,136.3 L305.6,153.8 M305.6,153.8 L340.6,161.0 M305.6,153.8 L303.2,189.3 M303.2,189.3 L325.1,189.3 L325.1,182.5 L342.6,182.5 M303.2,189.3 L312.7,212.6 M312.7,212.6 L320.2,212.6 L320.2,211.2 L330.5,211.2 M312.7,212.6 L312.7,223.7 L308.2,223.7 L308.2,243.2 M308.2,243.2 L314.2,246.9 L319.3,243.8 L321.1,247.2 L324.3,247.4 L329.2,245.0 L336.3,248.5 M308.2,243.2 L308.2,264.3 L306.8,264.3 L306.8,274.5 M306.8,274.5 L320.2,274.5 L320.2,279.1 L342.2,279.1 M306.8,274.5 L306.8,288.1 L301.3,288.1 L301.3,301.3 M301.3,301.3 L338.1,309.7 M301.3,301.3 L302.4,312.1 L301.3,318.9 L303.6,331.7 L301.9,341.7 M301.9,341.7 L307.0,342.1 L313.3,341.7 L320.0,338.1 L321.5,340.0 L327.3,340.1 L335.4,336.7 M301.9,341.7 L300.4,344.9 L304.0,347.3 L301.3,353.4 L306.2,354.9 L302.8,358.0 L306.0,362.1 M306.0,362.1 L309.0,366.5 L318.8,366.2 L324.9,366.9 L329.6,370.0 M306.0,362.1 L311.7,403.0 M311.7,403.0 L321.0,403.0 L321.0,401.9 L332.3,401.9 M311.7,403.0 L305.3,421.0 M305.3,421.0 L314.7,419.1 L317.0,423.3 L327.3,424.8 L331.3,425.5 L338.0,423.3 M305.3,421.0 L305.3,435.2 L301.7,435.2 L301.7,450.3 M301.7,450.3 L330.8,452.5 M301.7,450.3 L301.7,470.8 L303.8,470.8 L303.8,480.3 M303.8,480.3 L312.4,479.1 L317.5,485.6 L325.4,488.2 L331.8,486.0 L337.9,488.8 M303.8,480.3 L301.7,485.2 L305.2,493.2 L303.5,493.5 L304.4,502.5 L305.0,509.9 L302.3,512.6 M302.3,512.6 L310.7,510.9 L314.3,510.9 L318.0,513.7 L322.0,511.6 L330.6,510.0 M302.3,512.6 L304.7,517.6 L306.4,527.4 L307.6,533.4 L307.0,540.4 L304.7,545.9 L307.0,551.4 M307.0,551.4 L312.8,551.6 L322.7,546.6 L331.4,546.3 L336.3,547.2 M307.0,551.4 L309.6,555.6 L310.3,561.0 L310.3,566.0 L311.3,566.8 L308.8,572.4 L309.5,574.8 M309.5,574.8 L334.4,572.1 M309.5,574.8 L309.5,585.7 L304.8,585.7 L304.8,606.3 M304.8,606.3 L311.3,602.0 L318.5,604.2 L327.5,600.7 L337.4,599.1 M304.8,606.3 L303.6,612.6 L307.0,617.1 L306.9,624.2 L303.2,630.5 L304.3,633.7 M304.3,633.7 L319.8,633.7 L319.8,635.4 L333.2,635.4 M304.3,633.7 L304.3,648.1 L299.9,648.1 L299.9,662.9 M299.9,662.9 L305.3,662.0 L314.3,667.2 L322.1,667.6 L329.2,666.7 L335.1,667.6 L342.4,668.0 M299.9,662.9 L299.9,682.4 L312.5,682.4 L312.5,690.8 M312.5,690.8 L327.1,690.8 L327.1,695.7 L341.4,695.7 M312.5,690.8 L312.5,713.6 L306.0,713.6 L306.0,727.8 M306.0,727.8 L317.8,727.8 L317.8,722.5 L332.3,722.5 M311.1,752.0 L328.5,752.0 L328.5,758.9 L342.4,758.9 M311.1,752.0 L311.1,765.1 L302.8,765.1 L302.8,782.5 M302.8,782.5 L303.4,789.0 L304.5,793.4 L306.6,805.1 L304.6,810.5 L304.6,815.2 M304.6,815.2 L312.1,813.5 L315.5,813.6 L317.6,816.9 L327.9,819.5 L332.0,819.2 L336.0,818.4 M304.6,815.2 L304.6,828.1 L312.4,828.1 L312.4,850.9 M312.4,850.9 L323.1,850.9 L323.1,842.6 L334.9,842.6 M341.2,-0.7 L356.8,-0.7 L356.8,12.0 L368.3,12.0 M341.2,-0.7 L341.2,14.6 L329.5,14.6 L329.5,38.9 M329.5,38.9 L349.4,38.9 L349.4,29.5 L362.2,29.5 M329.5,38.9 L334.0,44.0 L334.0,52.4 L336.6,59.6 L341.5,65.6 M341.5,65.6 L353.4,65.6 L353.4,64.9 L363.7,64.9 M341.5,65.6 L337.2,89.0 M337.2,89.0 L368.6,91.8 M337.2,89.0 L334.1,98.8 L336.0,100.8 L333.3,112.3 L336.5,115.5 L334.7,125.6 L334.5,132.0 M334.5,132.0 L339.0,137.6 L339.7,145.6 L338.7,152.6 L340.6,161.0 M340.6,161.0 L349.7,161.0 L349.7,151.9 L366.1,151.9 M340.6,161.0 L340.6,170.0 L342.6,170.0 L342.6,182.5 M342.6,182.5 L347.5,185.3 L352.4,181.0 L358.1,180.8 L360.6,180.5 L368.8,186.0 L372.6,183.4 M342.6,182.5 L342.6,196.0 L330.5,196.0 L330.5,211.2 M330.5,211.2 L370.5,212.2 M330.5,211.2 L330.5,235.3 L336.3,235.3 L336.3,248.5 M336.3,248.5 L352.8,248.5 L352.8,249.6 L362.1,249.6 M336.3,248.5 L336.3,265.4 L342.2,265.4 L342.2,279.1 M342.2,279.1 L352.1,279.1 L352.1,282.3 L363.1,282.3 M342.2,279.1 L338.1,309.7 M338.1,309.7 L365.9,301.6 M335.4,336.7 L352.5,336.7 L352.5,334.8 L362.1,334.8 M335.4,336.7 L329.6,370.0 M329.6,370.0 L355.8,370.0 L355.8,372.3 L368.3,372.3 M329.6,370.0 L329.6,381.9 L332.3,381.9 L332.3,401.9 M332.3,401.9 L340.2,401.9 L346.3,396.8 L354.0,393.5 L361.0,394.5 M332.3,401.9 L334.2,406.0 L333.6,409.8 L336.4,416.4 L335.4,418.2 L338.0,423.3 M338.0,423.3 L354.0,423.3 L354.0,432.6 L362.0,432.6 M338.0,423.3 L338.0,435.9 L330.8,435.9 L330.8,452.5 M330.8,452.5 L348.2,452.5 L348.2,449.7 L361.0,449.7 M330.8,452.5 L330.8,464.3 L337.9,464.3 L337.9,488.8 M337.9,488.8 L346.5,488.8 L346.5,484.5 L359.8,484.5 M337.9,488.8 L337.9,501.4 L330.6,501.4 L330.6,510.0 M330.6,510.0 L341.1,515.4 L348.6,518.2 L360.9,516.7 L371.6,521.4 M330.6,510.0 L331.3,518.2 L334.1,522.9 L331.8,531.1 L332.7,537.7 L336.3,547.2 M336.3,547.2 L355.4,547.2 L355.4,553.0 L369.3,553.0 M336.3,547.2 L336.3,555.7 L334.4,555.7 L334.4,572.1 M334.4,572.1 L359.9,572.1 L359.9,573.6 L372.0,573.6 M334.4,572.1 L334.4,589.5 L337.4,589.5 L337.4,599.1 M337.4,599.1 L349.0,599.1 L349.0,612.1 L361.6,612.1 M337.4,599.1 L337.4,619.8 L333.2,619.8 L333.2,635.4 M333.2,635.4 L357.0,635.4 L357.0,629.4 L369.4,629.4 M333.2,635.4 L342.4,668.0 M342.4,668.0 L356.6,668.0 L356.6,664.3 L368.3,664.3 M342.4,668.0 L344.0,673.1 L341.8,679.5 L342.5,680.9 L341.1,689.1 L343.7,693.5 L341.4,695.7 M341.4,695.7 L349.8,695.7 L349.8,693.6 L364.2,693.6 M341.4,695.7 L332.3,722.5 M332.3,722.5 L337.2,718.9 L343.8,720.8 L347.8,721.2 L353.0,719.6 L359.3,722.3 L361.4,719.0 M332.3,722.5 L342.4,758.9 M342.4,758.9 L350.8,758.9 L350.8,753.9 L362.9,753.9 M342.4,758.9 L342.9,765.2 L340.5,764.6 L339.4,767.7 L337.0,770.4 L337.0,775.8 L333.3,779.3 M333.3,779.3 L343.0,781.6 L350.1,779.6 L360.1,779.9 L372.4,780.7 M333.3,779.3 L333.3,802.1 L336.0,802.1 L336.0,818.4 M336.0,818.4 L372.5,811.9 M336.0,818.4 L336.0,834.2 L334.9,834.2 L334.9,842.6 M334.9,842.6 L353.9,842.6 L353.9,850.5 L364.0,850.5 M368.3,12.0 L383.8,12.0 L383.8,5.1 L400.5,5.1 M368.3,12.0 L368.3,23.1 L362.2,23.1 L362.2,29.5 M362.2,29.5 L373.3,29.5 L373.3,35.6 L389.7,35.6 M362.2,29.5 L362.2,47.3 L363.7,47.3 L363.7,64.9 M363.7,64.9 L382.3,64.9 L382.3,71.9 L394.2,71.9 M363.7,64.9 L368.6,91.8 M368.6,91.8 L391.7,94.1 M368.6,91.8 L370.2,129.3 M370.2,129.3 L379.5,124.7 L386.9,121.7 L396.6,122.2 L401.6,119.4 M370.2,129.3 L370.2,141.8 L366.1,141.8 L366.1,151.9 M366.1,151.9 L384.0,151.9 L384.0,160.4 L394.8,160.4 M366.1,151.9 L366.1,162.4 L372.6,162.4 L372.6,183.4 M372.6,183.4 L377.7,183.0 L388.4,178.9 L391.7,182.6 L399.7,179.6 M372.6,183.4 L374.1,185.9 L370.0,193.0 L370.5,195.8 L373.8,202.5 L372.5,205.9 L370.5,212.2 M370.5,212.2 L383.1,212.2 L383.1,209.9 L389.5,209.9 M370.5,212.2 L369.2,221.8 L368.4,230.6 L361.8,242.8 L362.1,249.6 M362.1,249.6 L401.9,242.6 M362.1,249.6 L362.1,265.5 L363.1,265.5 L363.1,282.3 M363.1,282.3 L368.4,283.3 L378.0,281.5 L382.9,279.7 L392.0,281.7 L399.5,281.6 M363.1,282.3 L363.1,292.4 L365.9,292.4 L365.9,301.6 M365.9,301.6 L393.7,302.8 M365.9,301.6 L364.5,305.9 L367.2,314.9 L362.3,320.5 L363.4,326.3 L362.1,334.8 M362.1,334.8 L381.6,334.8 L381.6,337.6 L402.4,337.6 M368.3,372.3 L383.2,372.3 L383.2,369.0 L392.7,369.0 M361.0,394.5 L382.8,394.5 L382.8,392.9 L393.4,392.9 M361.0,394.5 L362.2,400.0 L362.0,406.0 L364.3,412.0 L364.5,417.3 L358.9,426.6 L362.0,432.6 M362.0,432.6 L371.4,432.6 L371.4,429.6 L389.1,429.6 M362.0,432.6 L361.0,449.7 M361.0,449.7 L372.3,453.0 L378.4,451.1 L391.2,458.7 L401.8,457.9 M361.0,449.7 L359.8,484.5 M359.8,484.5 L387.8,484.5 L387.8,479.3 L402.2,479.3 M359.8,484.5 L363.2,496.7 L368.1,501.3 L366.9,509.9 L371.6,521.4 M371.6,521.4 L392.3,515.7 M369.3,553.0 L392.4,553.0 L392.4,552.4 L402.4,552.4 M369.3,553.0 L372.0,573.6 M372.0,573.6 L386.2,573.6 L386.2,572.5 L394.4,572.5 M372.0,573.6 L372.0,591.7 L361.6,591.7 L361.6,612.1 M361.6,612.1 L372.0,612.1 L372.0,605.9 L395.0,605.9 M361.6,612.1 L361.6,621.0 L369.4,621.0 L369.4,629.4 M369.4,629.4 L384.0,629.4 L384.0,631.6 L402.0,631.6 M369.4,629.4 L367.7,634.3 L366.9,641.3 L369.3,652.2 L366.5,657.3 L368.3,664.3 M368.3,664.3 L400.2,669.3 M368.3,664.3 L368.3,673.3 L364.2,673.3 L364.2,693.6 M364.2,693.6 L378.6,693.6 L378.6,699.8 L400.5,699.8 M364.2,693.6 L364.2,709.6 L361.4,709.6 L361.4,719.0 M361.4,719.0 L379.1,719.0 L379.1,723.6 L397.5,723.6 M361.4,719.0 L361.4,740.2 L362.9,740.2 L362.9,753.9 M362.9,753.9 L393.5,754.1 M362.9,753.9 L362.9,767.4 L372.4,767.4 L372.4,780.7 M372.4,780.7 L400.0,780.1 M372.4,780.7 L372.4,791.1 L372.5,791.1 L372.5,811.9 M372.5,811.9 L383.3,811.9 L383.3,819.5 L391.8,819.5 M372.5,811.9 L372.5,831.4 L364.0,831.4 L364.0,850.5 M400.5,5.1 L408.5,5.1 L408.5,6.7 L419.5,6.7 M400.5,5.1 L398.8,12.7 L397.4,15.2 L398.0,21.8 L394.7,27.3 L393.2,29.2 L389.7,35.6 M389.7,35.6 L406.9,35.6 L406.9,42.7 L423.6,42.7 M389.7,35.6 L389.7,52.4 L394.2,52.4 L394.2,71.9 M394.2,71.9 L409.2,71.9 L409.2,72.8 L431.4,72.8 M394.2,71.9 L394.2,82.7 L391.7,82.7 L391.7,94.1 M391.7,94.1 L422.7,90.2 M391.7,94.1 L391.7,107.1 L401.6,107.1 L401.6,119.4 M401.6,119.4 L409.1,119.4 L409.1,126.0 L420.3,126.0 M401.6,119.4 L401.6,132.3 L394.8,132.3 L394.8,160.4 M394.8,160.4 L401.2,156.5 L412.1,160.8 L422.9,154.1 L428.9,155.3 M394.8,160.4 L394.8,167.6 L399.7,167.6 L399.7,179.6 M399.7,179.6 L413.8,179.6 L413.8,184.8 L422.3,184.8 M399.7,179.6 L395.4,183.0 L395.3,192.7 L390.7,195.9 L394.4,205.1 L389.5,209.9 M389.5,209.9 L396.7,210.9 L405.9,214.7 L419.5,215.4 L427.7,218.4 M389.5,209.9 L389.5,229.0 L401.9,229.0 L401.9,242.6 M401.9,242.6 L405.5,242.0 L413.2,245.5 L416.8,250.0 L424.9,247.8 L429.5,250.9 M401.9,242.6 L402.3,249.4 L397.9,261.2 L402.3,274.8 L399.5,281.6 M399.5,281.6 L406.5,280.3 L411.9,278.8 L416.6,276.5 L416.9,274.4 L423.4,271.5 L428.3,270.7 M399.5,281.6 L399.5,292.9 L393.7,292.9 L393.7,302.8 M393.7,302.8 L412.3,302.8 L412.3,303.1 L430.8,303.1 M393.7,302.8 L393.7,322.5 L402.4,322.5 L402.4,337.6 M402.4,337.6 L412.5,337.6 L412.5,334.2 L426.9,334.2 M402.4,337.6 L392.7,369.0 M392.7,369.0 L407.3,369.0 L407.3,361.8 L429.3,361.8 M392.7,369.0 L392.7,379.8 L393.4,379.8 L393.4,392.9 M393.4,392.9 L410.4,392.9 L410.4,392.4 L422.5,392.4 M393.4,392.9 L393.4,414.6 L389.1,414.6 L389.1,429.6 M389.1,429.6 L403.3,429.6 L403.3,431.4 L421.1,431.4 M389.1,429.6 L389.1,446.6 L401.8,446.6 L401.8,457.9 M401.8,457.9 L411.8,457.9 L411.8,453.6 L427.1,453.6 M401.8,457.9 L402.2,479.3 M402.2,479.3 L424.5,492.9 M402.2,479.3 L402.2,491.1 L392.3,491.1 L392.3,515.7 M392.3,515.7 L415.4,515.7 L415.4,512.2 L426.1,512.2 M392.3,515.7 L402.4,552.4 M402.4,552.4 L402.4,561.1 L394.4,561.1 L394.4,572.5 M394.4,572.5 L398.9,569.8 L405.4,574.2 L410.9,569.3 L419.1,570.6 L429.2,569.5 L432.9,570.4 M394.4,572.5 L394.4,591.1 L395.0,591.1 L395.0,605.9 M395.0,605.9 L405.0,605.9 L405.0,610.5 L425.6,610.5 M395.0,605.9 L395.0,614.0 L402.0,614.0 L402.0,631.6 M402.0,631.6 L415.5,631.6 L415.5,641.8 L430.8,641.8 M402.0,631.6 L399.4,640.3 L401.0,643.5 L401.7,649.0 L397.9,656.1 L399.8,660.1 L400.2,669.3 M400.2,669.3 L401.9,665.3 L409.3,665.1 L412.3,666.0 L414.1,661.9 L419.6,663.1 M400.2,669.3 L398.7,677.5 L400.8,683.5 L397.7,691.2 L400.5,699.8 M400.5,699.8 L420.7,691.7 M400.5,699.8 L400.5,709.0 L397.5,709.0 L397.5,723.6 M397.5,723.6 L413.1,723.6 L413.1,727.2 L432.6,727.2 M397.5,723.6 L397.5,744.8 L393.5,744.8 L393.5,754.1 M393.5,754.1 L402.1,752.5 L413.6,754.3 L422.7,753.0 L432.0,754.2 M393.5,754.1 L400.0,780.1 M400.0,780.1 L417.6,780.1 L417.6,785.3 L431.1,785.3 M400.0,780.1 L391.8,819.5 M391.8,819.5 L422.6,819.9 M391.8,819.5 L393.7,822.3 L390.7,831.2 L391.9,837.8 L392.5,839.9 M392.5,839.9 L407.8,839.9 L407.8,840.5 L432.2,840.5 M419.5,6.7 L432.2,6.7 L432.2,7.7 L457.3,7.7 M419.5,6.7 L419.5,24.8 L423.6,24.8 L423.6,42.7 M423.6,42.7 L452.0,34.2 M423.6,42.7 L423.1,50.4 L425.1,56.5 L429.7,63.6 L431.4,72.8 M431.4,72.8 L435.3,71.4 L436.6,66.7 L443.9,66.6 L442.1,66.5 L447.9,62.7 L451.0,61.9 M431.4,72.8 L427.6,73.4 L430.3,78.1 L423.2,86.2 L422.6,86.9 L422.7,90.2 M422.7,90.2 L433.7,90.2 L433.7,97.4 L452.6,97.4 M422.7,90.2 L422.7,114.0 L420.3,114.0 L420.3,126.0 M420.3,126.0 L437.4,126.0 L437.4,121.8 L458.1,121.8 M420.3,126.0 L420.3,139.5 L428.9,139.5 L428.9,155.3 M428.9,155.3 L441.5,155.3 L441.5,153.6 L449.2,153.6 M428.9,155.3 L428.9,166.2 L422.3,166.2 L422.3,184.8 M422.3,184.8 L426.1,185.0 L432.4,183.8 L439.3,183.5 L444.2,182.6 L453.2,179.9 L458.5,181.6 M422.3,184.8 L427.7,218.4 M427.7,218.4 L453.4,211.8 M427.7,218.4 L429.5,250.9 M429.5,250.9 L448.9,250.9 L448.9,246.7 L460.1,246.7 M429.5,250.9 L429.2,255.1 L427.0,256.1 L431.4,260.2 L429.3,267.3 L428.3,270.7 M428.3,270.7 L436.1,270.7 L436.1,270.4 L449.9,270.4 M428.3,270.7 L428.3,292.2 L430.8,292.2 L430.8,303.1 M430.8,303.1 L426.9,334.2 M426.9,334.2 L446.5,334.2 L446.5,330.3 L457.9,330.3 M426.9,334.2 L426.9,344.5 L429.3,344.5 L429.3,361.8 M429.3,361.8 L451.3,368.7 M429.3,361.8 L429.3,375.6 L422.5,375.6 L422.5,392.4 M422.5,392.4 L441.4,392.4 L441.4,393.0 L454.7,393.0 M422.5,392.4 L421.1,431.4 M421.1,431.4 L440.2,431.4 L440.2,432.3 L453.3,432.3 M421.1,431.4 L421.1,446.6 L427.1,446.6 L427.1,453.6 M427.1,453.6 L434.0,456.0 L437.2,453.1 L437.8,457.8 L444.9,456.5 L451.2,454.2 L453.4,456.9 M427.1,453.6 L427.1,477.7 L424.5,477.7 L424.5,492.9 M424.5,492.9 L444.6,492.9 L444.6,484.8 L454.0,484.8 M424.5,492.9 L426.1,512.2 M426.1,512.2 L446.3,512.2 L446.3,523.0 L461.1,523.0 M426.1,512.2 L426.1,526.1 L430.3,526.1 L430.3,548.1 M430.3,548.1 L430.3,559.3 L432.9,559.3 L432.9,570.4 M432.9,570.4 L439.0,571.9 L441.1,568.9 L446.0,573.6 L453.0,569.3 L456.4,571.2 L459.2,571.9 M432.9,570.4 L432.8,578.6 L430.6,589.6 L429.3,598.0 L425.6,610.5 M425.6,610.5 L449.1,611.6 M425.6,610.5 L425.6,627.1 L430.8,627.1 L430.8,641.8 M430.8,641.8 L438.0,641.8 L438.0,640.5 L454.9,640.5 M430.8,641.8 L430.8,655.3 L419.6,655.3 L419.6,663.1 M419.6,663.1 L454.7,671.4 M419.6,663.1 L419.6,680.5 L420.7,680.5 L420.7,691.7 M420.7,691.7 L426.1,691.4 L434.3,692.8 L437.7,693.6 L441.8,689.4 L452.0,690.2 L455.5,691.3 M420.7,691.7 L420.7,706.3 L432.6,706.3 L432.6,727.2 M432.6,727.2 L449.2,726.7 M432.6,727.2 L432.6,741.6 L432.0,741.6 L432.0,754.2 M432.0,754.2 L458.0,761.7 M432.0,754.2 L432.0,775.7 L431.1,775.7 L431.1,785.3 M431.1,785.3 L443.7,785.3 L443.7,787.7 L450.2,787.7 M431.1,785.3 L431.1,801.7 L422.6,801.7 L422.6,819.9 M422.6,819.9 L429.3,817.6 L433.6,819.5 L437.6,817.9 L441.1,818.2 L450.1,814.6 L454.2,816.1 M422.6,819.9 L432.2,840.5 M432.2,840.5 L435.1,839.3 L440.2,843.7 L444.9,840.4 L451.0,843.0 M457.3,7.7 L463.8,10.5 L473.2,7.5 L477.4,7.9 L486.3,12.0 M457.3,7.7 L457.3,23.0 L452.0,23.0 L452.0,34.2 M452.0,34.2 L458.3,33.5 L465.6,35.9 L473.6,33.8 L480.5,35.9 M452.0,34.2 L451.0,61.9 M451.0,61.9 L490.3,72.5 M451.0,61.9 L452.6,97.4 M452.6,97.4 L456.5,95.5 L466.6,94.2 L471.1,93.8 L475.7,92.5 L481.8,90.8 M452.6,97.4 L458.1,121.8 M458.1,121.8 L473.4,121.8 L473.4,132.7 L492.2,132.7 M458.1,121.8 L454.4,129.7 L451.6,135.9 L453.3,147.9 L449.2,153.6 M449.2,153.6 L485.8,149.7 M458.5,181.6 L468.6,181.6 L468.6,184.4 L492.0,184.4 M458.5,181.6 L458.5,199.4 L453.4,199.4 L453.4,211.8 M453.4,211.8 L465.9,211.8 L465.9,217.7 L491.7,217.7 M453.4,211.8 L453.4,222.9 L460.1,222.9 L460.1,246.7 M460.1,246.7 L467.1,243.5 L471.7,242.3 L478.0,241.1 L481.8,242.3 L483.6,241.5 L490.5,241.2 M460.1,246.7 L460.1,255.0 L449.9,255.0 L449.9,270.4 M449.9,270.4 L477.4,270.4 L477.4,272.1 L490.0,272.1 M449.9,270.4 L449.9,284.6 L454.5,284.6 L454.5,306.7 M454.5,306.7 L457.9,330.3 M457.9,330.3 L477.6,330.3 L477.6,331.6 L490.6,331.6 M457.9,330.3 L457.9,342.5 L451.3,342.5 L451.3,368.7 M451.3,368.7 L456.9,367.0 L467.3,365.8 L475.0,363.7 L482.1,364.6 M451.3,368.7 L451.3,384.1 L454.7,384.1 L454.7,393.0 M454.7,393.0 L465.2,393.0 L465.2,394.4 L486.3,394.4 M454.7,393.0 L453.3,432.3 M453.3,432.3 L460.1,427.7 L466.8,426.0 L468.6,427.7 L472.4,423.7 L480.7,422.5 M453.3,432.3 L453.3,439.9 L453.4,439.9 L453.4,456.9 M453.4,456.9 L465.3,456.9 L465.3,461.6 L489.1,461.6 M453.4,456.9 L453.4,471.1 L454.0,471.1 L454.0,484.8 M454.0,484.8 L458.8,485.8 L463.1,488.4 L469.7,488.9 L474.7,487.4 L479.6,486.9 M454.0,484.8 L454.0,498.0 L461.1,498.0 L461.1,523.0 M461.1,523.0 L489.6,509.5 M461.1,523.0 L460.8,525.5 L458.7,527.6 L456.6,533.2 L455.8,538.8 L454.1,541.8 M454.1,541.8 L472.7,541.8 L472.7,540.6 L490.7,540.6 M454.1,541.8 L454.1,554.6 L459.2,554.6 L459.2,571.9 M459.2,571.9 L471.1,571.9 L471.1,576.7 L487.4,576.7 M459.2,571.9 L456.2,581.4 L458.2,588.0 L456.8,590.3 L454.3,599.0 L449.0,608.0 L449.1,611.6 M449.1,611.6 L452.6,608.8 L463.2,608.0 L469.6,610.0 L474.3,604.1 L482.2,603.5 L487.8,603.3 M449.1,611.6 L449.1,627.7 L454.9,627.7 L454.9,640.5 M454.9,640.5 L474.7,640.5 L474.7,637.2 L484.9,637.2 M454.7,671.4 L485.0,668.2 M454.7,671.4 L455.5,691.3 M455.5,691.3 L460.8,692.5 L467.5,690.9 L476.0,696.4 L481.0,697.3 L485.3,695.1 M455.5,691.3 L455.0,697.6 L452.7,707.0 L449.9,719.5 L449.2,726.7 M449.2,726.7 L462.2,726.7 L462.2,727.7 L479.3,727.7 M449.2,726.7 L453.5,736.5 L451.6,742.2 L456.2,751.3 L458.0,761.7 M458.0,761.7 L468.1,761.7 L468.1,752.3 L485.9,752.3 M458.0,761.7 L458.0,778.3 L450.2,778.3 L450.2,787.7 M450.2,787.7 L455.6,786.4 L468.5,791.3 L472.2,788.8 L481.4,790.3 L489.7,789.9 M450.2,787.7 L450.2,806.9 L454.2,806.9 L454.2,816.1 M454.2,816.1 L471.0,816.1 L471.0,811.5 L485.4,811.5 M454.2,816.1 L454.2,831.3 L451.0,831.3 L451.0,843.0 M451.0,843.0 L464.4,843.0 L464.4,840.5 L485.6,840.5 M486.3,12.0 L510.8,5.0 M486.3,12.0 L482.5,17.2 L486.2,21.1 L483.7,25.8 L480.4,28.1 L480.1,31.3 L480.5,35.9 M480.5,35.9 L510.3,35.2 M480.5,35.9 L481.2,41.6 L481.9,46.8 L486.5,51.5 L487.0,60.4 L485.9,64.9 L490.3,72.5 M490.3,72.5 L496.4,72.6 L502.3,67.0 L505.6,66.3 L509.9,59.8 L516.1,59.6 M490.3,72.5 L489.6,78.2 L487.3,79.9 L482.1,87.2 L481.8,90.8 M481.8,90.8 L503.1,90.8 L503.1,90.2 L517.9,90.2 M481.8,90.8 L481.8,117.4 L492.2,117.4 L492.2,132.7 M492.2,132.7 L505.2,132.7 L505.2,129.9 L519.3,129.9 M492.2,132.7 L492.2,143.8 L485.8,143.8 L485.8,149.7 M485.8,149.7 L495.9,149.7 L495.9,149.8 L516.2,149.8 M485.8,149.7 L485.8,160.8 L492.0,160.8 L492.0,184.4 M492.0,184.4 L505.3,184.4 L505.3,184.3 L516.1,184.3 M492.0,184.4 L492.0,206.1 L491.7,206.1 L491.7,217.7 M491.7,217.7 L510.5,217.7 L510.5,210.9 L522.3,210.9 M491.7,217.7 L491.7,234.1 L490.5,234.1 L490.5,241.2 M490.5,241.2 L498.8,243.5 L502.7,245.2 L506.4,247.5 L513.8,253.4 L521.0,252.9 M490.5,241.2 L490.5,262.3 L490.0,262.3 L490.0,272.1 M490.0,272.1 L500.0,272.1 L500.0,280.4 L519.2,280.4 M490.0,272.1 L484.7,310.8 M484.7,310.8 L498.2,310.8 L498.2,312.7 L511.7,312.7 M484.7,310.8 L490.6,331.6 M490.6,331.6 L492.9,336.0 L501.7,334.6 L508.3,340.0 L513.2,338.7 L515.9,342.4 M490.6,331.6 L490.6,345.4 L482.1,345.4 L482.1,364.6 M482.1,364.6 L521.8,361.3 M482.1,364.6 L482.1,384.6 L486.3,384.6 L486.3,394.4 M486.3,394.4 L493.7,396.6 L497.1,399.2 L504.0,398.7 L506.7,400.9 L513.2,403.2 L520.0,402.0 M486.3,394.4 L486.3,410.3 L480.7,410.3 L480.7,422.5 M480.7,422.5 L509.9,423.9 M480.7,422.5 L480.0,433.1 L486.7,440.4 L486.3,450.1 L489.1,461.6 M489.1,461.6 L505.7,461.6 L505.7,451.2 L519.6,451.2 M489.1,461.6 L479.6,486.9 M479.6,486.9 L481.7,494.9 L487.3,496.1 L486.8,505.9 L489.6,509.5 M489.6,509.5 L489.6,525.4 L490.7,525.4 L490.7,540.6 M490.7,540.6 L499.6,540.6 L499.6,551.9 L516.0,551.9 M490.7,540.6 L490.7,563.5 L487.4,563.5 L487.4,576.7 M487.4,576.7 L511.9,572.7 M487.4,576.7 L487.4,588.7 L487.8,588.7 L487.8,603.3 M487.8,603.3 L487.8,625.3 L484.9,625.3 L484.9,637.2 M484.9,637.2 L499.7,637.2 L499.7,631.5 L509.5,631.5 M484.9,637.2 L483.2,647.6 L486.8,651.1 L481.9,662.7 L485.0,668.2 M485.0,668.2 L500.9,668.2 L500.9,672.1 L511.3,672.1 M485.0,668.2 L485.3,695.1 M485.3,695.1 L494.8,694.2 L496.7,698.9 L504.6,696.8 L512.9,699.9 L518.5,701.5 M485.3,695.1 L479.3,727.7 M479.3,727.7 L511.4,730.0 M479.3,727.7 L479.3,741.9 L485.9,741.9 L485.9,752.3 M485.9,752.3 L493.7,754.9 L497.1,752.0 L503.1,757.0 L510.6,756.4 M485.9,752.3 L486.5,759.3 L487.2,769.2 L487.0,783.1 L489.7,789.9 M489.7,789.9 L492.8,787.2 L502.0,789.8 L506.1,786.1 L509.5,784.3 L517.9,784.0 M489.7,789.9 L488.1,793.2 L487.4,799.2 L489.8,798.1 L486.4,803.1 L483.8,807.5 L485.4,811.5 M485.4,811.5 L508.7,811.5 L508.7,816.8 L521.2,816.8 M485.4,811.5 L485.4,827.4 L485.6,827.4 L485.6,840.5 M485.6,840.5 L495.9,840.5 L495.9,851.4 L517.1,851.4 M510.8,5.0 L525.6,5.0 L525.6,12.9 L540.5,12.9 M510.8,5.0 L510.8,22.5 L510.3,22.5 L510.3,35.2 M510.3,35.2 L524.4,35.2 L524.4,34.5 L547.8,34.5 M510.3,35.2 L510.7,37.8 L513.4,46.4 L516.3,50.8 L513.8,54.8 L516.1,59.6 M516.1,59.6 L532.7,59.6 L532.7,62.7 L550.2,62.7 M516.1,59.6 L516.3,67.5 L514.6,72.3 L517.9,77.1 L516.8,82.9 L514.8,87.1 L517.9,90.2 M517.9,90.2 L540.0,90.2 L540.0,97.1 L552.9,97.1 M517.9,90.2 L521.2,99.5 L519.6,107.1 L516.3,114.8 L522.0,120.8 L519.3,129.9 M519.3,129.9 L533.3,129.9 L533.3,129.7 L544.0,129.7 M519.3,129.9 L519.3,139.3 L516.2,139.3 L516.2,149.8 M516.2,149.8 L528.5,149.8 L528.5,151.5 L545.2,151.5 M516.2,149.8 L516.1,184.3 M516.1,184.3 L520.7,183.0 L525.2,185.4 L533.3,182.2 L537.8,179.7 L542.7,180.4 L549.4,179.7 M516.1,184.3 L517.2,189.7 L520.0,190.5 L518.0,195.1 L518.5,202.0 L520.1,208.9 L522.3,210.9 M522.3,210.9 L539.0,210.9 L539.0,212.6 L550.5,212.6 M522.3,210.9 L522.3,225.1 L521.0,225.1 L521.0,252.9 M521.0,252.9 L537.1,252.9 L537.1,252.8 L547.9,252.8 M521.0,252.9 L521.0,264.8 L519.2,264.8 L519.2,280.4 M519.2,280.4 L528.5,280.4 L528.5,278.3 L547.2,278.3 M519.2,280.4 L518.5,285.6 L515.9,291.7 L512.8,297.9 L515.1,306.0 L511.7,312.7 M511.7,312.7 L531.4,312.7 L531.4,299.0 L543.4,299.0 M511.7,312.7 L515.9,342.4 M515.9,342.4 L539.5,331.1 M515.9,342.4 L515.5,344.0 L519.7,349.0 L518.2,352.6 L518.8,352.1 L522.0,357.7 L521.8,361.3 M521.8,361.3 L534.7,361.3 L534.7,365.1 L547.6,365.1 M521.8,361.3 L521.8,376.9 L520.0,376.9 L520.0,402.0 M520.0,402.0 L546.2,401.5 M520.0,402.0 L520.0,414.7 L509.9,414.7 L509.9,423.9 M509.9,423.9 L529.9,423.9 L529.9,422.2 L540.8,422.2 M509.9,423.9 L511.8,427.8 L514.8,431.9 L513.0,439.3 L516.7,443.7 L517.9,443.9 L519.6,451.2 M519.6,451.2 L533.5,451.2 L533.5,449.3 L548.1,449.3 M519.6,451.2 L519.6,469.1 L521.6,469.1 L521.6,482.8 M521.6,482.8 L539.0,484.0 M521.6,482.8 L520.4,511.0 M520.4,511.0 L530.7,511.0 L530.7,514.0 L540.5,514.0 M520.4,511.0 L516.0,551.9 M516.0,551.9 L527.4,551.9 L527.4,547.2 L542.1,547.2 M516.0,551.9 L516.0,564.2 L511.9,564.2 L511.9,572.7 M511.9,572.7 L532.9,572.7 L532.9,571.9 L547.2,571.9 M511.9,572.7 L515.7,579.2 L515.6,587.6 L515.9,595.5 L516.1,603.5 M516.1,603.5 L522.5,604.2 L525.2,606.9 L534.6,601.6 L536.2,603.8 L540.7,604.9 L547.7,605.6 M516.1,603.5 L516.1,621.3 L509.5,621.3 L509.5,631.5 M509.5,631.5 L530.2,631.5 L530.2,642.1 L540.9,642.1 M509.5,631.5 L509.5,645.6 L511.3,645.6 L511.3,672.1 M511.3,672.1 L522.8,672.1 L522.8,661.1 L542.4,661.1 M511.3,672.1 L518.5,701.5 M518.5,701.5 L529.7,701.5 L529.7,697.9 L540.3,697.9 M518.5,701.5 L511.4,730.0 M511.4,730.0 L519.7,729.8 L526.3,727.8 L537.6,730.6 L540.8,732.5 L551.2,730.0 M511.4,730.0 L511.4,745.3 L510.6,745.3 L510.6,756.4 M510.6,756.4 L532.2,756.4 L532.2,752.7 L544.6,752.7 M510.6,756.4 L510.6,772.1 L517.9,772.1 L517.9,784.0 M517.9,784.0 L539.2,788.0 M517.9,784.0 L516.0,791.3 L517.1,799.5 L520.3,808.7 L521.2,816.8 M521.2,816.8 L523.1,817.0 L531.9,813.6 L532.4,816.9 L538.1,817.5 L541.6,813.8 L546.9,813.9 M517.1,851.4 L521.5,850.4 L532.1,846.6 L537.8,849.3 L543.4,847.0 L548.0,845.2 M540.5,12.9 L549.0,12.3 L562.1,10.3 L569.2,7.8 L582.1,9.3 M540.5,12.9 L540.5,24.8 L547.8,24.8 L547.8,34.5 M547.8,34.5 L557.9,34.5 L557.9,41.6 L572.5,41.6 M547.8,34.5 L546.5,39.6 L547.2,47.7 L550.1,53.8 L550.2,62.7 M550.2,62.7 L561.2,62.7 L561.2,66.4 L569.6,66.4 M550.2,62.7 L551.5,68.4 L554.1,79.5 L552.8,90.4 L552.9,97.1 M552.9,97.1 L567.5,97.1 L567.5,92.3 L574.7,92.3 M552.9,97.1 L552.9,108.7 L544.0,108.7 L544.0,129.7 M544.0,129.7 L544.0,137.5 L545.2,137.5 L545.2,151.5 M545.2,151.5 L569.2,156.7 M545.2,151.5 L545.2,164.6 L549.4,164.6 L549.4,179.7 M549.4,179.7 L549.4,190.3 L550.5,190.3 L550.5,212.6 M550.5,212.6 L552.3,218.7 L547.5,227.6 L547.3,234.3 L548.2,241.6 L548.4,248.7 L547.9,252.8 M547.9,252.8 L557.7,252.8 L557.7,248.0 L576.1,248.0 M547.9,252.8 L547.9,261.4 L547.2,261.4 L547.2,278.3 M547.2,278.3 L559.6,278.3 L559.6,271.4 L580.4,271.4 M547.2,278.3 L547.2,285.3 L543.4,285.3 L543.4,299.0 M543.4,299.0 L552.9,299.0 L552.9,303.2 L573.3,303.2 M543.4,299.0 L543.4,314.8 L539.5,314.8 L539.5,331.1 M539.5,331.1 L569.7,341.5 M539.5,331.1 L539.5,346.8 L547.6,346.8 L547.6,365.1 M547.6,365.1 L580.0,369.0 M547.6,365.1 L546.2,401.5 M546.2,401.5 L553.4,401.5 L553.4,400.8 L569.1,400.8 M546.2,401.5 L546.2,410.5 L540.8,410.5 L540.8,422.2 M540.8,422.2 L579.4,425.5 M540.8,422.2 L540.8,438.4 L548.1,438.4 L548.1,449.3 M548.1,449.3 L569.3,449.3 L569.3,455.3 L579.4,455.3 M548.1,449.3 L548.1,469.2 L539.0,469.2 L539.0,484.0 M539.0,484.0 L549.1,484.0 L549.1,480.5 L572.2,480.5 M539.0,484.0 L539.0,493.6 L540.5,493.6 L540.5,514.0 M540.5,514.0 L572.3,509.5 M540.5,514.0 L540.5,530.8 L542.1,530.8 L542.1,547.2 M542.1,547.2 L554.9,547.2 L554.9,549.5 L573.7,549.5 M542.1,547.2 L547.2,571.9 M547.2,571.9 L558.1,571.9 L558.1,580.8 L578.7,580.8 M547.2,571.9 L547.2,583.6 L547.7,583.6 L547.7,605.6 M547.7,605.6 L579.0,602.7 M547.7,605.6 L547.7,626.9 L540.9,626.9 L540.9,642.1 M540.9,642.1 L576.8,635.1 M540.9,642.1 L543.3,645.3 L540.2,652.8 L543.8,656.2 L542.4,661.1 M542.4,661.1 L565.7,661.1 L565.7,666.3 L580.0,666.3 M542.4,661.1 L541.0,672.2 L542.6,681.2 L543.3,691.5 L540.3,697.9 M540.3,697.9 L559.4,697.9 L559.4,698.0 L572.7,698.0 M540.3,697.9 L551.2,730.0 M551.2,730.0 L554.2,729.8 L558.7,726.8 L566.9,727.3 L575.1,725.2 L576.9,721.7 L582.5,722.0 M551.2,730.0 L551.2,742.3 L544.6,742.3 L544.6,752.7 M544.6,752.7 L581.3,749.2 M544.6,752.7 L546.4,757.6 L543.4,762.1 L541.4,771.1 L541.8,775.3 L537.3,779.9 L539.2,788.0 M539.2,788.0 L553.3,788.0 L553.3,782.3 L572.6,782.3 M539.2,788.0 L539.1,794.8 L542.8,796.3 L544.4,799.7 L545.5,803.6 L546.2,810.1 L546.9,813.9 M546.9,813.9 L551.3,814.7 L559.3,816.1 L563.0,817.4 L570.2,821.9 L573.5,823.4 L579.4,822.2 M546.9,813.9 L546.1,817.4 L550.1,826.3 L545.2,832.0 L550.6,836.7 L547.9,840.6 L548.0,845.2 M548.0,845.2 L579.4,843.6 M582.1,9.3 L582.1,27.7 L572.5,27.7 L572.5,41.6 M572.5,41.6 L592.9,41.6 L592.9,41.7 L602.3,41.7 M572.5,41.6 L572.5,52.0 L569.6,52.0 L569.6,66.4 M569.6,66.4 L607.8,68.7 M574.7,92.3 L582.0,95.8 L587.1,98.1 L592.4,95.2 L594.4,97.2 L601.3,101.1 L608.3,102.7 M574.7,92.3 L569.8,129.9 M569.8,129.9 L594.6,129.9 L594.6,130.8 L605.6,130.8 M569.8,129.9 L569.8,138.4 L569.2,138.4 L569.2,156.7 M569.2,156.7 L571.8,164.5 L577.4,169.2 L580.2,176.4 L582.2,181.0 M582.2,181.0 L571.8,217.5 M571.8,217.5 L586.2,217.5 L586.2,213.3 L607.0,213.3 M571.8,217.5 L571.8,236.1 L576.1,236.1 L576.1,248.0 M576.1,248.0 L589.8,248.0 L589.8,247.7 L602.0,247.7 M576.1,248.0 L576.1,257.5 L580.4,257.5 L580.4,271.4 M580.4,271.4 L583.8,271.9 L587.4,277.3 L590.6,273.8 L592.7,278.4 L594.6,282.7 L600.1,281.8 M580.4,271.4 L573.3,303.2 M573.3,303.2 L582.6,303.2 L582.6,299.4 L601.0,299.4 M573.3,303.2 L573.0,314.5 L569.3,321.1 L572.7,333.0 L569.7,341.5 M569.7,341.5 L600.5,342.0 M569.7,341.5 L569.7,351.4 L580.0,351.4 L580.0,369.0 M580.0,369.0 L588.4,369.0 L588.4,361.0 L603.8,361.0 M580.0,369.0 L580.0,380.2 L569.1,380.2 L569.1,400.8 M569.1,400.8 L599.4,389.6 M569.1,400.8 L569.1,416.1 L579.4,416.1 L579.4,425.5 M579.4,425.5 L599.1,425.5 L599.1,427.9 L608.7,427.9 M579.4,425.5 L579.7,431.3 L581.6,435.9 L580.1,438.3 L578.4,447.6 L576.5,448.0 L579.4,455.3 M579.4,455.3 L587.0,458.4 L590.0,454.8 L598.6,458.9 L602.1,457.6 L608.8,459.3 M579.4,455.3 L578.9,457.6 L575.3,466.6 L572.7,469.3 L570.9,476.7 L572.2,480.5 M572.2,480.5 L599.9,487.3 M572.2,480.5 L572.3,509.5 M572.3,509.5 L583.6,509.5 L583.6,520.4 L604.1,520.4 M572.3,509.5 L570.0,514.4 L575.5,520.1 L574.8,529.7 L573.5,536.4 L572.9,543.2 L573.7,549.5 M573.7,549.5 L584.0,552.7 L591.7,551.2 L603.3,548.0 L610.5,551.5 M573.7,549.5 L573.7,568.0 L578.7,568.0 L578.7,580.8 M578.7,580.8 L583.2,582.5 L585.1,581.1 L593.9,582.5 L595.1,581.0 L599.9,581.1 M578.7,580.8 L579.9,585.1 L580.2,591.7 L580.7,596.4 L579.0,602.7 M579.0,602.7 L611.8,612.2 M579.0,602.7 L576.8,635.1 M576.8,635.1 L593.0,635.1 L593.0,631.9 L600.5,631.9 M576.8,635.1 L578.5,640.6 L578.1,642.6 L578.3,652.7 L578.3,656.3 L576.7,661.1 L580.0,666.3 M580.0,666.3 L586.9,666.3 L586.9,659.5 L600.6,659.5 M580.0,666.3 L580.0,684.1 L572.7,684.1 L572.7,698.0 M572.7,698.0 L592.4,698.0 L592.4,700.4 L610.9,700.4 M572.7,698.0 L573.2,702.6 L575.1,708.9 L580.3,711.4 L581.2,711.5 L578.6,717.1 L582.5,722.0 M582.5,722.0 L600.1,722.0 L600.1,730.6 L607.9,730.6 M582.5,722.0 L580.7,727.9 L581.3,734.3 L578.7,741.9 L581.3,749.2 M581.3,749.2 L587.2,748.8 L593.3,751.9 L598.5,751.3 L602.3,751.0 L607.8,753.0 M581.3,749.2 L581.3,767.3 L572.6,767.3 L572.6,782.3 M572.6,782.3 L581.7,783.7 L586.5,779.4 L592.1,782.3 L600.4,780.4 M579.4,822.2 L592.7,822.2 L592.7,811.9 L609.6,811.9 M579.4,822.2 L579.4,843.6 M579.4,843.6 L583.2,845.2 L591.0,842.0 L595.6,841.5 L600.7,846.8 L603.5,844.9 M611.3,3.6 L617.8,6.0 L616.1,2.4 L625.1,3.2 L628.4,1.3 L629.3,2.6 M611.3,3.6 L610.7,12.1 L605.2,19.2 L607.2,25.8 L604.6,36.5 L602.3,41.7 M602.3,41.7 L611.8,41.7 L611.8,39.0 L633.0,39.0 M602.3,41.7 L602.3,50.3 L607.8,50.3 L607.8,68.7 M607.8,68.7 L634.2,63.5 M607.8,68.7 L607.8,87.0 L608.3,87.0 L608.3,102.7 M608.3,102.7 L622.1,102.7 L622.1,96.1 L642.5,96.1 M608.3,102.7 L610.8,109.2 L607.2,113.8 L609.8,119.3 L606.7,120.1 L606.1,129.0 L605.6,130.8 M605.6,130.8 L640.9,127.7 M605.6,130.8 L605.6,146.6 L608.8,146.6 L608.8,161.0 M608.8,161.0 L622.1,161.0 L622.1,154.8 L629.4,154.8 M608.8,161.0 L608.8,175.9 L605.1,175.9 L605.1,189.1 M605.1,189.1 L610.2,188.7 L619.2,188.2 L621.3,190.6 L631.1,190.0 L635.1,189.8 M605.1,189.1 L605.1,202.1 L607.0,202.1 L607.0,213.3 M607.0,213.3 L633.9,218.9 M607.0,213.3 L606.3,221.1 L601.6,230.1 L601.6,239.6 L602.0,247.7 M602.0,247.7 L602.0,267.4 L600.1,267.4 L600.1,281.8 M600.1,281.8 L619.6,281.8 L619.6,270.3 L641.1,270.3 M601.0,299.4 L620.4,299.4 L620.4,301.4 L640.5,301.4 M601.0,299.4 L601.0,324.1 L600.5,324.1 L600.5,342.0 M600.5,342.0 L607.8,340.5 L612.3,337.3 L621.9,331.8 L629.0,331.8 M600.5,342.0 L598.8,347.8 L601.6,354.4 L602.3,354.1 L603.8,361.0 M603.8,361.0 L627.9,361.0 L627.9,372.7 L639.7,372.7 M603.8,361.0 L603.8,376.4 L599.4,376.4 L599.4,389.6 M599.4,389.6 L612.7,389.6 L612.7,395.9 L629.1,395.9 M599.4,389.6 L600.2,400.3 L607.0,408.1 L609.0,417.9 L608.7,427.9 M608.7,427.9 L613.9,430.4 L621.3,426.4 L626.8,427.7 L635.9,430.2 M608.7,427.9 L608.5,432.5 L609.2,438.5 L606.9,446.5 L611.4,446.6 L610.3,453.1 L608.8,459.3 M608.8,459.3 L621.5,459.3 L621.5,455.9 L631.6,455.9 M608.8,459.3 L608.2,463.3 L602.8,472.2 L604.4,480.3 L599.9,487.3 M599.9,487.3 L618.4,487.3 L618.4,490.6 L633.9,490.6 M599.9,487.3 L599.9,507.6 L604.1,507.6 L604.1,520.4 M604.1,520.4 L617.5,520.4 L617.5,522.2 L632.6,522.2 M604.1,520.4 L608.2,529.6 L608.5,533.8 L606.1,545.7 L610.5,551.5 M610.5,551.5 L633.0,542.0 M610.5,551.5 L610.5,571.3 L599.9,571.3 L599.9,581.1 M599.9,581.1 L616.9,581.1 L616.9,576.0 L638.8,576.0 M599.9,581.1 L599.9,602.6 L611.8,602.6 L611.8,612.2 M611.8,612.2 L616.6,613.3 L622.9,609.9 L627.9,606.5 L630.5,607.9 M611.8,612.2 L611.8,621.2 L600.5,621.2 L600.5,631.9 M600.5,631.9 L616.8,631.9 L616.8,640.0 L630.1,640.0 M600.6,659.5 L622.5,659.5 L622.5,670.0 L638.8,670.0 M600.6,659.5 L610.9,700.4 M610.9,700.4 L637.8,694.0 M607.9,730.6 L621.6,730.6 L621.6,724.5 L634.6,724.5 M607.9,730.6 L607.8,753.0 M607.8,753.0 L621.1,753.0 L621.1,750.2 L641.5,750.2 M607.8,753.0 L609.3,755.9 L604.5,761.7 L606.4,769.4 L603.1,775.0 L600.4,780.4 M600.4,780.4 L619.5,780.4 L619.5,779.4 L641.4,779.4 M600.4,780.4 L609.6,811.9 M609.6,811.9 L623.8,811.9 L623.8,812.7 L631.9,812.7 M609.6,811.9 L603.5,844.9 M603.5,844.9 L641.6,846.0 M629.3,2.6 L644.2,2.6 L644.2,11.4 L664.3,11.4 M629.3,2.6 L629.3,24.0 L633.0,24.0 L633.0,39.0 M633.0,39.0 L662.3,35.5 M633.0,39.0 L634.2,63.5 M634.2,63.5 L666.4,69.6 M634.2,63.5 L642.5,96.1 M642.5,96.1 L652.2,96.1 L652.2,98.0 L669.5,98.0 M642.5,96.1 L640.9,127.7 M640.9,127.7 L640.9,141.3 L629.4,141.3 L629.4,154.8 M629.4,154.8 L645.8,154.8 L645.8,160.8 L661.2,160.8 M629.4,154.8 L631.4,161.1 L633.1,166.8 L633.2,173.7 L633.5,179.5 L631.6,186.9 L635.1,189.8 M635.1,189.8 L668.3,189.4 M635.1,189.8 L635.1,200.4 L633.9,200.4 L633.9,218.9 M633.9,218.9 L651.1,218.9 L651.1,215.1 L661.4,215.1 M633.9,218.9 L632.8,221.7 L634.2,225.7 L634.1,227.6 L637.7,235.7 L636.0,235.2 L636.5,242.0 M636.5,242.0 L644.1,245.0 L649.8,241.9 L659.2,244.8 L666.1,243.1 L669.8,247.1 M636.5,242.0 L636.5,252.6 L641.1,252.6 L641.1,270.3 M641.1,270.3 L641.8,268.2 L649.7,274.2 L653.3,270.3 L655.8,271.8 L656.6,272.8 L660.8,275.5 M641.1,270.3 L639.6,274.7 L640.3,280.4 L640.2,287.5 L640.1,294.7 L640.5,301.4 M640.5,301.4 L660.4,301.4 L660.4,302.3 L671.4,302.3 M640.5,301.4 L629.0,331.8 M629.0,331.8 L636.0,330.3 L640.1,330.3 L643.8,330.4 L648.3,331.9 L658.6,333.9 L661.7,333.2 M629.0,331.8 L629.0,353.8 L639.7,353.8 L639.7,372.7 M639.7,372.7 L649.5,372.7 L649.5,370.8 L668.8,370.8 M639.7,372.7 L629.1,395.9 M629.1,395.9 L639.7,394.2 L647.9,392.8 L654.5,392.7 L661.2,391.2 M629.1,395.9 L633.1,403.2 L631.6,408.6 L633.3,415.8 L636.4,420.3 L633.0,424.9 L635.9,430.2 M635.9,430.2 L652.2,430.2 L652.2,423.6 L662.5,423.6 M635.9,430.2 L631.6,455.9 M631.6,455.9 L651.8,455.9 L651.8,451.3 L666.3,451.3 M631.6,455.9 L633.8,461.5 L633.5,469.8 L635.6,476.4 L632.5,480.9 L633.9,490.6 M633.9,490.6 L646.4,490.6 L646.4,481.6 L663.6,481.6 M633.9,490.6 L633.9,501.0 L632.6,501.0 L632.6,522.2 M632.6,522.2 L650.2,522.2 L650.2,519.2 L672.7,519.2 M632.6,522.2 L632.6,531.2 L633.0,531.2 L633.0,542.0 M633.0,542.0 L647.4,542.0 L647.4,552.5 L660.4,552.5 M638.8,576.0 L648.0,576.0 L648.0,574.4 L660.4,574.4 M638.8,576.0 L638.8,595.7 L630.5,595.7 L630.5,607.9 M630.5,607.9 L646.7,607.9 L646.7,610.1 L672.8,610.1 M630.5,607.9 L630.5,622.5 L630.1,622.5 L630.1,640.0 M630.1,640.0 L638.8,670.0 M638.8,670.0 L637.8,694.0 M637.8,694.0 L644.9,694.0 L644.9,691.9 L660.5,691.9 M634.6,724.5 L664.4,719.5 M634.6,724.5 L641.5,750.2 M641.5,750.2 L664.6,760.1 M641.5,750.2 L639.7,756.1 L639.9,761.8 L639.5,769.2 L641.7,776.2 L641.4,779.4 M641.4,779.4 L646.9,781.8 L650.9,779.4 L659.4,780.9 L663.2,783.0 L668.7,786.0 M641.4,779.4 L638.1,783.9 L637.6,790.0 L633.7,801.6 L634.2,808.2 L631.9,812.7 M631.9,812.7 L649.4,812.7 L649.4,815.5 L667.9,815.5 M631.9,812.7 L631.9,835.0 L641.6,835.0 L641.6,846.0 M641.6,846.0 L652.1,846.0 L652.1,847.5 L661.0,847.5 M664.3,11.4 L671.5,9.5 L675.2,13.2 L680.4,11.1 L687.0,12.8 L687.4,6.8 L694.7,9.4 M664.3,11.4 L662.8,18.2 L666.1,23.5 L666.0,23.2 L662.0,30.3 L662.3,35.5 M662.3,35.5 L701.7,35.0 M662.3,35.5 L662.3,52.6 L666.4,52.6 L666.4,69.6 M666.4,69.6 L666.4,79.3 L669.5,79.3 L669.5,98.0 M669.5,98.0 L685.1,98.0 L685.1,92.2 L694.9,92.2 M669.5,98.0 L669.5,115.8 L663.9,115.8 L663.9,123.6 M663.9,123.6 L699.1,131.3 M663.9,123.6 L666.3,129.0 L664.2,136.1 L660.7,144.9 L662.6,155.0 L661.2,160.8 M661.2,160.8 L661.2,177.4 L668.3,177.4 L668.3,189.4 M668.3,189.4 L684.7,189.4 L684.7,188.5 L700.9,188.5 M668.3,189.4 L661.4,215.1 M661.4,215.1 L677.2,215.1 L677.2,215.4 L698.0,215.4 M661.4,215.1 L661.4,229.0 L669.8,229.0 L669.8,247.1 M669.8,247.1 L693.4,247.8 M669.8,247.1 L669.8,259.4 L660.8,259.4 L660.8,275.5 M660.8,275.5 L690.4,274.9 M660.8,275.5 L664.0,279.9 L664.4,286.7 L669.4,296.4 L671.4,302.3 M671.4,302.3 L680.1,302.3 L680.1,309.0 L700.0,309.0 M661.7,333.2 L685.0,333.2 L685.0,332.5 L697.8,332.5 M661.7,333.2 L663.8,343.3 L662.3,352.7 L667.7,363.0 L668.8,370.8 M668.8,370.8 L679.0,370.8 L679.0,365.4 L694.9,365.4 M668.8,370.8 L668.8,377.8 L661.2,377.8 L661.2,391.2 M661.2,391.2 L666.6,391.6 L670.5,394.8 L676.9,392.7 L682.9,394.6 L691.4,393.4 L697.7,394.7 M661.2,391.2 L661.2,401.6 L662.5,401.6 L662.5,423.6 M662.5,423.6 L698.5,432.0 M662.5,423.6 L662.5,441.5 L666.3,441.5 L666.3,451.3 M666.3,451.3 L678.9,451.3 L678.9,458.2 L691.6,458.2 M666.3,451.3 L664.4,457.4 L665.0,466.6 L662.6,475.6 L663.6,481.6 M663.6,481.6 L678.2,481.6 L678.2,484.4 L699.9,484.4 M663.6,481.6 L663.9,486.6 L668.0,493.8 L671.2,505.3 L669.9,511.3 L672.7,519.2 M672.7,519.2 L683.0,519.2 L683.0,522.6 L695.9,522.6 M672.7,519.2 L660.4,552.5 M660.4,552.5 L671.7,552.5 L671.7,546.6 L689.5,546.6 M660.4,552.5 L660.4,564.7 L660.4,564.7 L660.4,574.4 M660.4,574.4 L666.8,574.8 L667.8,575.3 L673.0,574.5 L683.7,577.4 L685.0,581.8 L691.3,579.9 M660.4,574.4 L660.4,592.9 L672.8,592.9 L672.8,610.1 M672.8,610.1 L683.5,610.1 L683.5,606.3 L702.2,606.3 M672.8,610.1 L672.8,621.4 L669.3,621.4 L669.3,635.1 M669.3,635.1 L690.4,637.0 M669.3,635.1 L669.3,651.8 L661.7,651.8 L661.7,667.9 M661.7,667.9 L677.0,667.9 L677.0,669.0 L696.6,669.0 M661.7,667.9 L661.7,682.6 L660.5,682.6 L660.5,691.9 M660.5,691.9 L669.2,695.7 L671.0,696.7 L677.8,696.0 L682.4,696.4 L689.4,694.7 L696.2,697.9 M664.4,719.5 L673.9,718.5 L679.4,720.3 L685.1,721.5 L693.2,722.2 L700.6,726.3 M664.4,719.5 L664.6,760.1 M664.6,760.1 L673.8,761.1 L678.9,760.3 L690.1,760.6 L694.7,762.3 M664.6,760.1 L666.7,762.3 L666.2,767.3 L665.4,771.4 L667.7,779.9 L666.9,781.9 L668.7,786.0 M668.7,786.0 L679.1,786.0 L679.1,788.6 L691.9,788.6 M668.7,786.0 L671.4,790.5 L670.0,796.6 L665.7,803.6 L670.2,811.3 L667.9,815.5 M667.9,815.5 L694.5,819.7 M667.9,815.5 L667.9,833.6 L661.0,833.6 L661.0,847.5 M661.0,847.5 L678.2,847.5 L678.2,852.8 L690.7,852.8 M694.7,9.4 L713.4,9.4 L713.4,-0.2 L724.0,-0.2 M694.7,9.4 L694.7,24.4 L701.7,24.4 L701.7,35.0 M701.7,35.0 L712.7,35.0 L712.7,34.6 L722.8,34.6 M701.7,35.0 L701.7,45.9 L697.0,45.9 L697.0,69.5 M697.0,69.5 L694.9,92.2 M694.9,92.2 L700.5,91.2 L704.8,97.7 L713.8,94.9 L720.8,99.5 L724.9,98.8 M694.9,92.2 L694.9,104.1 L699.1,104.1 L699.1,131.3 M699.1,131.3 L723.9,122.7 M699.1,131.3 L699.8,158.8 M699.8,158.8 L711.1,158.8 L711.1,159.4 L722.1,159.4 M699.8,158.8 L699.8,168.6 L700.9,168.6 L700.9,188.5 M700.9,188.5 L718.7,188.5 L718.7,186.4 L732.2,186.4 M700.9,188.5 L699.2,197.8 L701.9,204.8 L697.4,208.7 L698.0,215.4 M698.0,215.4 L705.9,215.4 L705.9,220.2 L722.1,220.2 M698.0,215.4 L696.0,222.1 L698.3,228.9 L696.6,241.8 L693.4,247.8 M693.4,247.8 L696.8,249.7 L702.6,245.1 L710.7,244.1 L714.4,242.2 L721.0,243.3 L724.5,242.0 M693.4,247.8 L690.4,274.9 M690.4,274.9 L708.3,274.9 L708.3,279.9 L720.8,279.9 M690.4,274.9 L690.9,284.2 L692.5,292.3 L699.0,298.4 L700.0,309.0 M700.0,309.0 L710.2,310.0 L715.4,310.4 L724.6,308.9 L730.3,307.9 M700.0,309.0 L700.0,319.2 L697.8,319.2 L697.8,332.5 M697.8,332.5 L703.5,336.6 L709.0,332.1 L717.6,333.2 L725.6,336.9 M694.9,365.4 L712.4,365.4 L712.4,372.5 L722.2,372.5 M694.9,365.4 L697.7,394.7 M697.7,394.7 L715.6,394.7 L715.6,397.9 L723.9,397.9 M697.7,394.7 L697.7,413.1 L698.5,413.1 L698.5,432.0 M698.5,432.0 L714.5,432.0 L714.5,430.4 L730.5,430.4 M698.5,432.0 L698.5,440.5 L691.6,440.5 L691.6,458.2 M691.6,458.2 L696.5,465.0 L697.9,471.3 L695.5,477.7 L699.9,484.4 M699.9,484.4 L716.5,484.4 L716.5,480.8 L726.7,480.8 M699.9,484.4 L699.9,503.8 L695.9,503.8 L695.9,522.6 M695.9,522.6 L701.0,520.0 L708.9,521.1 L714.8,520.1 L726.2,514.0 L730.7,514.0 M695.9,522.6 L695.9,538.4 L689.5,538.4 L689.5,546.6 M689.5,546.6 L730.9,542.7 M689.5,546.6 L689.5,564.4 L691.3,564.4 L691.3,579.9 M691.3,579.9 L724.3,572.5 M702.2,606.3 L713.4,606.3 L713.4,601.6 L725.0,601.6 M702.2,606.3 L690.4,637.0 M690.4,637.0 L700.0,636.0 L703.2,636.2 L709.7,639.7 L719.0,639.1 M690.4,637.0 L690.4,657.0 L696.6,657.0 L696.6,669.0 M696.6,669.0 L710.9,669.0 L710.9,662.4 L722.9,662.4 M696.6,669.0 L696.6,678.8 L696.2,678.8 L696.2,697.9 M696.2,697.9 L699.3,694.9 L706.4,694.4 L714.8,695.5 L720.8,699.1 L723.2,695.7 M696.2,697.9 L698.4,705.1 L701.1,714.9 L701.7,721.9 L700.6,726.3 M700.6,726.3 L709.2,726.3 L709.2,727.9 L725.0,727.9 M694.7,762.3 L728.2,754.1 M694.7,762.3 L694.7,774.6 L691.9,774.6 L691.9,788.6 M691.9,788.6 L708.4,788.6 L708.4,791.0 L732.0,791.0 M691.9,788.6 L692.9,795.4 L694.8,799.9 L690.5,801.6 L695.6,807.2 L695.7,811.8 L694.5,819.7 M694.5,819.7 L696.9,817.9 L701.8,821.8 L705.5,820.9 L708.6,817.8 L716.8,820.4 L719.8,820.6 M694.5,819.7 L694.5,842.1 L690.7,842.1 L690.7,852.8 M690.7,852.8 L731.7,850.0 M724.0,-0.2 L732.5,-0.2 L732.5,10.6 L751.0,10.6 M724.0,-0.2 L722.8,34.6 M722.8,34.6 L736.0,34.6 L736.0,29.2 L757.9,29.2 M719.2,64.9 L735.4,64.9 L735.4,72.3 L749.2,72.3 M719.2,64.9 L719.2,75.5 L724.9,75.5 L724.9,98.8 M724.9,98.8 L742.4,98.8 L742.4,92.5 L758.2,92.5 M724.9,98.8 L724.9,107.5 L723.9,107.5 L723.9,122.7 M723.9,122.7 L750.4,121.0 M722.1,159.4 L731.3,159.4 L731.3,159.9 L752.3,159.9 M732.2,186.4 L735.9,187.7 L740.5,181.5 L750.2,183.0 L753.9,181.1 M732.2,186.4 L732.2,202.7 L722.1,202.7 L722.1,220.2 M722.1,220.2 L735.3,220.2 L735.3,220.1 L761.7,220.1 M722.1,220.2 L724.5,242.0 M724.5,242.0 L736.5,242.0 L736.5,251.5 L751.4,251.5 M724.5,242.0 L720.8,279.9 M720.8,279.9 L739.1,279.9 L739.1,279.9 L757.5,279.9 M720.8,279.9 L720.8,289.9 L730.3,289.9 L730.3,307.9 M730.3,307.9 L744.2,307.9 L744.2,311.5 L758.4,311.5 M730.3,307.9 L725.6,336.9 M725.6,336.9 L725.6,359.5 L722.2,359.5 L722.2,372.5 M722.2,372.5 L742.6,372.5 L742.6,368.7 L751.8,368.7 M722.2,372.5 L723.9,397.9 M723.9,397.9 L734.2,397.9 L734.2,399.4 L756.4,399.4 M723.9,397.9 L723.9,412.5 L730.5,412.5 L730.5,430.4 M730.5,430.4 L731.7,429.7 L740.1,428.4 L742.3,429.0 L745.0,432.3 L752.7,430.9 L755.1,431.4 M730.5,430.4 L730.5,441.6 L725.6,441.6 L725.6,453.1 M725.6,453.1 L756.8,452.7 M725.6,453.1 L727.9,455.8 L727.4,464.2 L726.0,469.1 L724.4,470.6 L726.6,477.5 L726.7,480.8 M726.7,480.8 L743.2,480.8 L743.2,481.0 L752.3,481.0 M726.7,480.8 L726.7,493.7 L730.7,493.7 L730.7,514.0 M730.7,514.0 L755.9,509.8 M730.7,514.0 L730.9,542.7 M730.9,542.7 L747.8,542.7 L747.8,541.0 L755.5,541.0 M730.9,542.7 L730.9,563.1 L724.3,563.1 L724.3,572.5 M724.3,572.5 L736.3,572.5 L736.3,576.0 L755.9,576.0 M724.3,572.5 L722.2,578.4 L727.0,581.2 L725.6,585.2 L727.7,592.3 L726.9,594.4 L725.0,601.6 M725.0,601.6 L742.0,601.6 L742.0,611.1 L756.6,611.1 M725.0,601.6 L725.0,621.1 L719.0,621.1 L719.0,639.1 M719.0,639.1 L737.4,639.1 L737.4,640.8 L749.1,640.8 M719.0,639.1 L719.0,646.9 L722.9,646.9 L722.9,662.4 M722.9,662.4 L739.6,662.4 L739.6,666.9 L755.6,666.9 M722.9,662.4 L723.3,669.4 L724.6,672.2 L723.8,678.3 L723.0,684.8 L724.2,688.2 L723.2,695.7 M723.2,695.7 L738.1,695.7 L738.1,700.8 L758.3,700.8 M723.2,695.7 L726.1,702.5 L725.8,706.4 L721.7,716.2 L722.0,719.6 L725.0,727.9 M725.0,727.9 L754.2,724.9 M725.0,727.9 L725.0,741.1 L728.2,741.1 L728.2,754.1 M728.2,754.1 L740.0,754.1 L740.0,750.1 L762.4,750.1 M728.2,754.1 L728.2,766.2 L732.0,766.2 L732.0,791.0 M732.0,791.0 L742.2,791.0 L742.2,787.9 L757.9,787.9 M732.0,791.0 L732.0,802.4 L719.8,802.4 L719.8,820.6 M719.8,820.6 L749.4,817.5 M719.8,820.6 L719.8,830.2 L731.7,830.2 L731.7,850.0 M731.7,850.0 L734.6,852.5 L742.5,851.6 L746.2,852.4 L752.6,853.0 L758.6,852.0 M751.0,10.6 L764.7,10.6 L764.7,12.7 L783.6,12.7 M751.0,10.6 L751.0,20.9 L757.9,20.9 L757.9,29.2 M757.9,29.2 L786.1,35.8 M757.9,29.2 L757.9,50.4 L749.2,50.4 L749.2,72.3 M749.2,72.3 L770.5,72.3 L770.5,59.5 L791.6,59.5 M749.2,72.3 L758.2,92.5 M758.2,92.5 L770.3,92.5 L770.3,97.8 L789.1,97.8 M758.2,92.5 L758.2,111.1 L750.4,111.1 L750.4,121.0 M750.4,121.0 L767.8,121.0 L767.8,131.1 L783.7,131.1 M750.4,121.0 L752.8,128.7 L753.8,133.8 L752.9,140.5 L752.0,146.6 L750.0,153.4 L752.3,159.9 M752.3,159.9 L763.2,159.9 L763.2,155.6 L784.1,155.6 M752.3,159.9 L752.3,173.1 L753.9,173.1 L753.9,181.1 M753.9,181.1 L770.6,181.1 L770.6,189.8 L786.4,189.8 M753.9,181.1 L753.9,207.5 L761.7,207.5 L761.7,220.1 M761.7,220.1 L766.2,220.5 L770.8,217.5 L773.8,217.1 L776.2,214.7 L782.0,215.1 M761.7,220.1 L758.6,222.8 L759.1,228.6 L756.6,238.3 L753.6,240.6 L752.2,243.6 L751.4,251.5 M751.4,251.5 L763.4,251.5 L763.4,246.8 L784.9,246.8 M751.4,251.5 L757.5,279.9 M757.5,279.9 L774.2,279.9 L774.2,273.1 L790.6,273.1 M757.5,279.9 L757.5,297.8 L758.4,297.8 L758.4,311.5 M758.4,311.5 L758.4,321.3 L760.0,321.3 L760.0,340.7 M760.0,340.7 L768.7,340.7 L768.7,332.8 L786.1,332.8 M760.0,340.7 L751.8,368.7 M751.8,368.7 L758.8,371.4 L765.6,371.4 L766.2,368.2 L773.1,373.5 L778.7,374.2 L786.1,372.6 M751.8,368.7 L751.8,380.1 L756.4,380.1 L756.4,399.4 M756.4,399.4 L761.5,396.8 L772.0,397.5 L782.6,397.7 L788.2,400.1 M756.4,399.4 L757.7,406.2 L753.2,412.4 L755.7,419.2 L754.2,428.0 L755.1,431.4 M755.1,431.4 L762.2,431.6 L762.4,429.8 L771.9,427.9 L776.9,428.2 L777.6,424.0 L783.6,423.4 M755.1,431.4 L755.1,444.3 L756.8,444.3 L756.8,452.7 M756.8,452.7 L761.8,452.8 L765.3,454.4 L770.5,457.3 L773.1,454.4 L776.9,454.1 L783.2,457.2 M756.8,452.7 L756.9,456.9 L756.6,467.0 L752.3,472.6 L752.3,481.0 M752.3,481.0 L761.2,480.3 L768.6,485.3 L780.1,485.6 L787.9,490.0 M752.3,481.0 L752.3,490.7 L755.9,490.7 L755.9,509.8 M755.9,509.8 L770.6,509.8 L770.6,519.1 L779.6,519.1 M755.9,509.8 L755.9,529.2 L755.5,529.2 L755.5,541.0 M755.5,541.0 L791.4,546.6 M755.5,541.0 L755.5,547.5 L754.9,556.3 L757.7,568.5 L755.9,576.0 M755.9,576.0 L770.6,576.0 L770.6,573.2 L779.7,573.2 M755.9,576.0 L755.9,593.3 L756.6,593.3 L756.6,611.1 M756.6,611.1 L763.3,610.0 L766.7,608.0 L767.4,607.7 L776.3,603.6 L779.1,601.7 M756.6,611.1 L756.6,629.0 L749.1,629.0 L749.1,640.8 M749.1,640.8 L770.8,640.8 L770.8,637.5 L791.9,637.5 M749.1,640.8 L749.1,654.0 L755.6,654.0 L755.6,666.9 M755.6,666.9 L788.2,670.0 M755.6,666.9 L755.6,685.0 L758.3,685.0 L758.3,700.8 M758.3,700.8 L775.2,700.8 L775.2,697.6 L791.7,697.6 M758.3,700.8 L754.7,702.0 L756.5,710.3 L755.7,711.5 L753.9,719.6 L754.7,719.3 L754.2,724.9 M754.2,724.9 L770.9,724.9 L770.9,727.8 L787.6,727.8 M754.2,724.9 L758.6,729.2 L759.8,736.8 L758.1,737.8 L762.6,744.5 L762.4,750.1 M762.4,750.1 L778.0,750.1 L778.0,757.3 L788.7,757.3 M762.4,750.1 L759.6,756.8 L757.7,763.4 L758.8,770.8 L758.7,778.1 L757.9,787.9 M757.9,787.9 L770.1,787.9 L770.1,782.0 L788.5,782.0 M757.9,787.9 L757.9,797.1 L749.4,797.1 L749.4,817.5 M749.4,817.5 L759.6,815.6 L764.4,813.7 L775.1,813.4 L778.9,813.3 L788.3,815.4 M749.4,817.5 L758.6,852.0 M758.6,852.0 L789.7,840.4 M783.6,12.7 L792.1,11.3 L799.1,4.2 L803.0,0.1 L811.5,-0.5 M783.6,12.7 L783.6,21.4 L786.1,21.4 L786.1,35.8 M786.1,35.8 L793.3,40.1 L801.0,36.6 L810.7,42.1 L819.8,41.8 M786.1,35.8 L785.8,42.1 L789.4,40.9 L789.2,45.4 L791.2,54.4 L789.9,56.7 L791.6,59.5 M791.6,59.5 L818.2,64.2 M791.6,59.5 L791.6,82.8 L789.1,82.8 L789.1,97.8 M789.1,97.8 L820.5,100.0 M789.1,97.8 L789.1,120.1 L783.7,120.1 L783.7,131.1 M783.7,131.1 L800.0,131.1 L800.0,122.6 L816.9,122.6 M783.7,131.1 L783.7,140.0 L784.1,140.0 L784.1,155.6 M784.1,155.6 L813.2,154.9 M784.1,155.6 L784.1,171.6 L786.4,171.6 L786.4,189.8 M786.4,189.8 L786.4,207.4 L782.0,207.4 L782.0,215.1 M782.0,215.1 L782.0,227.2 L784.9,227.2 L784.9,246.8 M784.9,246.8 L800.9,246.8 L800.9,246.9 L809.8,246.9 M784.9,246.8 L784.9,261.8 L790.6,261.8 L790.6,273.1 M790.6,273.1 L796.9,273.1 L796.9,270.7 L809.6,270.7 M790.6,273.1 L790.6,293.9 L790.6,293.9 L790.6,304.7 M790.6,304.7 L796.2,306.0 L799.6,303.1 L805.9,305.3 L812.8,307.2 L816.9,307.1 L820.3,307.1 M790.6,304.7 L790.6,324.3 L786.1,324.3 L786.1,332.8 M786.1,332.8 L821.9,335.3 M786.1,332.8 L786.1,356.0 L786.1,356.0 L786.1,372.6 M786.1,372.6 L809.2,364.4 M786.1,372.6 L786.1,389.3 L788.2,389.3 L788.2,400.1 M788.2,400.1 L794.2,397.9 L805.5,400.0 L812.4,400.3 L817.3,402.1 M788.2,400.1 L788.2,414.7 L783.6,414.7 L783.6,423.4 M783.6,423.4 L822.7,425.7 M783.6,423.4 L783.2,457.2 M783.2,457.2 L799.3,457.2 L799.3,450.4 L814.8,450.4 M783.2,457.2 L783.2,478.5 L787.9,478.5 L787.9,490.0 M787.9,490.0 L808.7,490.0 L808.7,482.0 L818.0,482.0 M787.9,490.0 L787.9,507.3 L779.6,507.3 L779.6,519.1 M779.6,519.1 L789.8,519.1 L789.8,509.2 L811.1,509.2 M779.6,519.1 L780.2,524.8 L785.6,533.0 L785.6,537.4 L791.4,546.6 M791.4,546.6 L797.4,546.6 L797.4,548.6 L809.1,548.6 M791.4,546.6 L791.4,565.2 L779.7,565.2 L779.7,573.2 M779.7,573.2 L789.9,573.2 L789.9,582.5 L810.7,582.5 M779.7,573.2 L777.2,579.1 L778.6,587.5 L780.6,590.9 L777.7,595.6 L779.1,601.7 M779.1,601.7 L795.5,601.7 L795.5,611.2 L810.2,611.2 M779.1,601.7 L779.1,626.6 L791.9,626.6 L791.9,637.5 M791.9,637.5 L803.3,637.5 L803.3,629.2 L810.8,629.2 M791.9,637.5 L788.2,670.0 M788.2,670.0 L819.1,662.4 M788.2,670.0 L791.7,697.6 M791.7,697.6 L801.9,697.6 L801.9,691.6 L819.3,691.6 M791.7,697.6 L787.6,727.8 M787.6,727.8 L790.7,727.4 L801.4,731.6 L801.6,730.0 L809.7,729.8 M787.6,727.8 L787.6,738.9 L788.7,738.9 L788.7,757.3 M788.7,757.3 L801.7,757.3 L801.7,761.0 L819.0,761.0 M788.7,757.3 L788.7,768.6 L788.5,768.6 L788.5,782.0 M788.5,782.0 L809.8,782.0 L809.8,780.2 L819.2,780.2 M788.5,782.0 L788.5,794.5 L788.3,794.5 L788.3,815.4 M788.3,815.4 L796.9,818.8 L800.9,815.2 L806.4,819.2 L814.5,818.1 L817.8,818.9 M788.3,815.4 L788.3,830.0 L789.7,830.0 L789.7,840.4 M789.7,840.4 L794.8,839.8 L802.4,843.3 L807.3,846.8 L813.0,848.3 L815.4,852.1 M811.5,-0.5 L831.7,-0.5 L831.7,12.5 L842.6,12.5 M811.5,-0.5 L811.5,21.1 L819.8,21.1 L819.8,41.8 M819.8,41.8 L823.9,41.0 L831.4,38.3 L839.9,35.0 L844.4,32.0 L849.0,29.2 M819.8,41.8 L819.8,49.1 L818.2,49.1 L818.2,64.2 M818.2,64.2 L823.7,67.1 L825.8,67.7 L829.3,67.1 L833.4,66.3 L839.2,68.1 M818.2,64.2 L818.2,86.4 L820.5,86.4 L820.5,100.0 M820.5,100.0 L823.6,97.1 L832.6,95.1 L841.4,93.1 L846.5,94.0 L850.4,90.1 M820.5,100.0 L820.5,111.3 L816.9,111.3 L816.9,122.6 M816.9,122.6 L827.2,122.6 L827.2,129.2 L843.4,129.2 M816.9,122.6 L816.9,138.2 L813.2,138.2 L813.2,154.9 M813.5,185.0 L824.5,185.0 L824.5,179.8 L845.8,179.8 M813.5,185.0 L813.5,198.6 L818.0,198.6 L818.0,222.1 M818.0,222.1 L827.8,222.1 L827.8,217.0 L844.1,217.0 M818.0,222.1 L817.7,230.0 L812.8,235.1 L810.8,243.6 L809.8,246.9 M809.8,246.9 L845.1,248.5 M809.8,246.9 L809.8,259.5 L809.6,259.5 L809.6,270.7 M809.6,270.7 L829.1,270.7 L829.1,280.2 L841.0,280.2 M809.6,270.7 L809.6,284.2 L820.3,284.2 L820.3,307.1 M820.3,307.1 L835.5,307.1 L835.5,308.0 L844.1,308.0 M820.3,307.1 L820.3,317.0 L821.9,317.0 L821.9,335.3 M821.9,335.3 L824.2,333.1 L831.9,336.3 L840.3,333.8 L842.4,337.6 L847.8,334.9 M821.9,335.3 L821.9,344.6 L809.2,344.6 L809.2,364.4 M817.3,402.1 L823.9,403.1 L834.3,403.1 L844.5,403.3 L852.2,400.0 M817.3,402.1 L822.7,425.7 M822.7,425.7 L822.7,434.1 L814.8,434.1 L814.8,450.4 M814.8,450.4 L831.6,450.4 L831.6,462.6 L839.8,462.6 M818.0,482.0 L821.6,480.8 L827.4,482.8 L833.8,485.0 L838.4,484.8 L841.4,488.9 L848.8,490.6 M818.0,482.0 L818.0,497.5 L811.1,497.5 L811.1,509.2 M811.1,509.2 L824.2,509.2 L824.2,517.5 L843.6,517.5 M811.1,509.2 L811.1,526.3 L809.1,526.3 L809.1,548.6 M809.1,548.6 L835.5,548.6 L835.5,550.6 L852.7,550.6 M809.1,548.6 L809.1,561.1 L810.7,561.1 L810.7,582.5 M810.7,582.5 L828.5,582.5 L828.5,573.3 L847.4,573.3 M810.7,582.5 L810.2,611.2 M810.2,611.2 L845.0,611.4 M810.8,629.2 L833.9,629.2 L833.9,638.6 L844.3,638.6 M810.8,629.2 L819.1,662.4 M819.1,662.4 L828.7,662.4 L828.7,671.5 L847.4,671.5 M819.1,662.4 L819.3,691.6 M819.3,691.6 L839.6,691.6 L839.6,693.0 L850.3,693.0 M819.3,691.6 L819.3,717.5 L809.7,717.5 L809.7,729.8 M809.7,729.8 L820.5,729.8 L820.5,722.7 L839.0,722.7 M819.0,761.0 L831.8,761.0 L831.8,757.2 L844.9,757.2 M819.0,761.0 L820.0,764.9 L819.3,770.7 L820.0,775.1 L820.3,778.8 L819.2,780.2 M819.2,780.2 L824.1,781.9 L834.6,785.9 L839.3,784.3 L842.5,790.0 L850.4,791.4 M819.2,780.2 L817.8,818.9 M817.8,818.9 L822.1,820.6 L824.4,820.6 L831.1,819.0 L832.5,820.0 L838.0,819.0 L839.6,820.7 M817.8,818.9 L817.8,837.5 L815.4,837.5 L815.4,852.1 M815.4,852.1 L818.8,849.8 L829.7,850.4 L833.7,853.5 L837.5,849.7 L846.8,850.2 L850.4,851.1 M842.6,12.5 L849.0,29.2 M839.2,68.1 L839.2,75.9 L850.4,75.9 L850.4,90.1 M850.4,90.1 L850.4,106.8 L843.4,106.8 L843.4,129.2 M843.4,129.2 L843.4,147.3 L841.3,147.3 L841.3,161.1 M841.3,161.1 L845.8,179.8 M845.8,179.8 L845.8,196.7 L844.1,196.7 L844.1,217.0 M844.1,217.0 L844.1,232.7 L845.1,232.7 L845.1,248.5 M845.1,248.5 L845.1,260.1 L841.0,260.1 L841.0,280.2 M841.0,280.2 L844.1,308.0 M847.8,334.9 L847.8,348.4 L844.4,348.4 L844.4,370.0 M844.4,370.0 L844.4,383.7 L852.2,383.7 L852.2,400.0 M852.2,400.0 L852.2,407.6 L846.9,407.6 L846.9,423.1 M846.9,423.1 L839.8,462.6 M839.8,462.6 L839.8,475.1 L848.8,475.1 L848.8,490.6 M848.8,490.6 L848.8,507.7 L843.6,507.7 L843.6,517.5 M843.6,517.5 L843.6,540.6 L852.7,540.6 L852.7,550.6 M852.7,550.6 L852.7,561.4 L847.4,561.4 L847.4,573.3 M847.4,573.3 L847.4,588.3 L845.0,588.3 L845.0,611.4 M845.0,611.4 L844.3,638.6 M844.3,638.6 L844.3,657.7 L847.4,657.7 L847.4,671.5 M850.3,693.0 L850.3,702.1 L839.0,702.1 L839.0,722.7 M839.0,722.7 L842.9,732.5 L843.5,737.4 L844.2,745.7 L844.9,757.2 M844.9,757.2 L844.9,762.8 L844.7,772.1 L847.0,778.3 L847.7,786.4 L850.4,791.4 M850.4,791.4 L850.7,798.3 L844.7,804.9 L843.6,816.2 L839.6,820.7 M839.6,820.7 L840.3,828.1 L845.9,832.0 L845.3,840.9 L846.1,847.8 L850.4,851.1" fill="none" stroke="#63676a" stroke-width="1" shape-rendering="crispEdges"/>
<path d="M6.0,704.6 L11.2,702.5 L18.3,699.7 L22.5,698.3 L29.5,699.7 L30.2,703.2 L26.7,708.0 L35.2,706.7 L45.0,705.3 L47.8,706.0 L45.0,715.2 L50.6,716.6 L52.0,725.0 L59.0,724.3 L66.0,726.4 L70.3,727.8 L71.7,732.0 L76.0,736.2 L77.3,740.5 L84.4,741.9 L95.6,744.7 L101.2,749.0 L106.9,753.0 L114.0,749.0 L122.3,744.7 L132.2,741.9 L140.6,744.7 L146.3,750.3 L154.7,743.3 L160.0,739.0 L172.0,752.0 L182.0,760.0 L240.0,760.0 L231.6,752.3 L225.7,743.4 L213.9,740.4 L204.0,736.0 L202.0,725.0 L203.5,716.8 L212.0,708.0 L222.7,699.0 L226.0,688.0 L228.6,677.0 L222.0,672.0 L209.4,674.0 L205.0,677.0 L200.6,682.8 L197.6,688.7 L194.7,694.7 L188.7,693.2 L184.3,688.7 L177.7,687.3 L177.0,682.8 L182.8,679.9 L190.2,672.5 L196.0,668.0 L202.0,666.6 L209.4,660.7 L216.8,654.8 L213.9,651.8 L219.8,651.8 L240.4,645.9 L221.4,650.5 L231.3,649.3 L243.6,645.6 L255.9,646.8 L268.2,649.3 L283.0,653.0 L292.9,651.7 L303.0,655.0 L304.0,640.0 L306.0,628.0 L309.0,622.0 L313.0,621.0 L316.0,628.0 L321.0,636.0 L328.0,642.0 L331.0,650.0 L334.7,661.6 L347.0,659.1 L354.8,656.0 L377.0,651.0 L409.0,647.4 L436.0,648.7 L455.8,653.6 L470.5,661.0 L482.9,670.8 L492.7,678.2 L502.6,685.6 L507.5,693.0 L510.0,702.9 L512.4,710.2 L524.7,712.7 L540.0,715.2 L545.5,706.0 L566.2,695.7 L581.7,685.3 L586.9,677.6 L597.2,675.0 L612.7,676.3 L623.0,682.7 L633.4,690.5 L641.2,700.8 L651.5,711.2 L656.7,721.5 L661.9,734.4 L674.8,744.8 L680.0,752.5 L688.7,755.3 L700.0,757.0 L703.7,767.5 L711.2,779.6 L714.0,784.3 L713.6,796.5 L713.6,810.0 L6.0,810.0Z" fill="#004466" stroke="#000" stroke-width="1.3"/>
<path d="M224.0,668.0 L232.0,672.0 L228.6,682.0 L225.0,700.0 L215.0,710.0 L205.0,718.0 L203.0,735.0 L185.0,728.0 L181.0,714.0 L190.0,706.0 L200.0,700.0 L205.0,690.0 L212.0,675.0Z M112.0,744.0 L132.0,741.0 L146.0,748.0 L160.0,739.0 L176.0,742.0 L186.0,750.0 L190.0,758.0 L112.0,758.0Z M205.0,736.0 L225.0,742.0 L240.0,758.0 L215.0,758.0 L208.0,748.0Z M778.0,646.0 L790.0,646.0 L792.0,660.0 L782.0,662.0Z" fill="#004466"/>
<path d="M225,669h1v1h-1z M226,669h1v1h-1z M224,670h1v1h-1z M225,670h1v1h-1z M226,670h1v1h-1z M220,671h1v1h-1z M221,671h1v1h-1z M222,671h1v1h-1z M223,671h1v1h-1z M224,671h1v1h-1z M225,671h1v1h-1z M230,671h1v1h-1z M220,672h1v1h-1z M221,672h1v1h-1z M222,672h1v1h-1z M223,672h1v1h-1z M224,672h1v1h-1z M225,672h1v1h-1z M230,672h1v1h-1z M231,672h1v1h-1z M218,673h1v1h-1z M219,673h1v1h-1z M220,673h1v1h-1z M221,673h1v1h-1z M222,673h1v1h-1z M223,673h1v1h-1z M230,673h1v1h-1z M213,674h1v1h-1z M214,674h1v1h-1z M218,674h1v1h-1z M219,674h1v1h-1z M220,674h1v1h-1z M212,675h1v1h-1z M213,675h1v1h-1z M214,675h1v1h-1z M215,675h1v1h-1z M217,675h1v1h-1z M218,675h1v1h-1z M219,675h1v1h-1z M220,675h1v1h-1z M211,676h1v1h-1z M212,676h1v1h-1z M213,676h1v1h-1z M214,676h1v1h-1z M215,676h1v1h-1z M217,676h1v1h-1z M218,676h1v1h-1z M219,676h1v1h-1z M220,676h1v1h-1z M211,677h1v1h-1z M212,677h1v1h-1z M213,677h1v1h-1z M214,677h1v1h-1z M215,677h1v1h-1z M216,677h1v1h-1z M217,677h1v1h-1z M218,677h1v1h-1z M219,677h1v1h-1z M220,677h1v1h-1z M210,678h1v1h-1z M211,678h1v1h-1z M212,678h1v1h-1z M213,678h1v1h-1z M214,678h1v1h-1z M215,678h1v1h-1z M216,678h1v1h-1z M217,678h1v1h-1z M218,678h1v1h-1z M219,678h1v1h-1z M225,678h1v1h-1z M210,679h1v1h-1z M211,679h1v1h-1z M212,679h1v1h-1z M213,679h1v1h-1z M214,679h1v1h-1z M215,679h1v1h-1z M216,679h1v1h-1z M217,679h1v1h-1z M209,680h1v1h-1z M210,680h1v1h-1z M211,680h1v1h-1z M212,680h1v1h-1z M213,680h1v1h-1z M214,680h1v1h-1z M215,680h1v1h-1z M216,680h1v1h-1z M217,680h1v1h-1z M209,681h1v1h-1z M212,681h1v1h-1z M213,681h1v1h-1z M214,681h1v1h-1z M215,681h1v1h-1z M216,681h1v1h-1z M217,681h1v1h-1z M208,682h1v1h-1z M209,682h1v1h-1z M212,682h1v1h-1z M213,682h1v1h-1z M214,682h1v1h-1z M215,682h1v1h-1z M216,682h1v1h-1z M208,683h1v1h-1z M209,683h1v1h-1z M212,683h1v1h-1z M213,683h1v1h-1z M214,683h1v1h-1z M227,683h1v1h-1z M208,684h1v1h-1z M209,684h1v1h-1z M212,684h1v1h-1z M213,684h1v1h-1z M214,684h1v1h-1z M218,684h1v1h-1z M219,684h1v1h-1z M227,684h1v1h-1z M207,685h1v1h-1z M208,685h1v1h-1z M218,685h1v1h-1z M219,685h1v1h-1z M220,685h1v1h-1z M227,685h1v1h-1z M216,686h1v1h-1z M217,686h1v1h-1z M218,686h1v1h-1z M219,686h1v1h-1z M220,686h1v1h-1z M227,686h1v1h-1z M210,687h1v1h-1z M216,687h1v1h-1z M217,687h1v1h-1z M218,687h1v1h-1z M219,687h1v1h-1z M220,687h1v1h-1z M221,687h1v1h-1z M215,688h1v1h-1z M216,688h1v1h-1z M217,688h1v1h-1z M218,688h1v1h-1z M219,688h1v1h-1z M220,688h1v1h-1z M221,688h1v1h-1z M222,688h1v1h-1z M205,689h1v1h-1z M212,689h1v1h-1z M213,689h1v1h-1z M214,689h1v1h-1z M215,689h1v1h-1z M216,689h1v1h-1z M217,689h1v1h-1z M218,689h1v1h-1z M219,689h1v1h-1z M220,689h1v1h-1z M221,689h1v1h-1z M222,689h1v1h-1z M223,689h1v1h-1z M205,690h1v1h-1z M211,690h1v1h-1z M212,690h1v1h-1z M213,690h1v1h-1z M214,690h1v1h-1z M215,690h1v1h-1z M216,690h1v1h-1z M217,690h1v1h-1z M218,690h1v1h-1z M219,690h1v1h-1z M220,690h1v1h-1z M221,690h1v1h-1z M222,690h1v1h-1z M223,690h1v1h-1z M204,691h1v1h-1z M205,691h1v1h-1z M211,691h1v1h-1z M212,691h1v1h-1z M213,691h1v1h-1z M214,691h1v1h-1z M215,691h1v1h-1z M216,691h1v1h-1z M217,691h1v1h-1z M218,691h1v1h-1z M219,691h1v1h-1z M220,691h1v1h-1z M221,691h1v1h-1z M222,691h1v1h-1z M223,691h1v1h-1z M224,691h1v1h-1z M226,691h1v1h-1z M204,692h1v1h-1z M205,692h1v1h-1z M208,692h1v1h-1z M209,692h1v1h-1z M210,692h1v1h-1z M211,692h1v1h-1z M212,692h1v1h-1z M213,692h1v1h-1z M214,692h1v1h-1z M215,692h1v1h-1z M216,692h1v1h-1z M217,692h1v1h-1z M218,692h1v1h-1z M219,692h1v1h-1z M220,692h1v1h-1z M221,692h1v1h-1z M222,692h1v1h-1z M223,692h1v1h-1z M224,692h1v1h-1z M225,692h1v1h-1z M203,693h1v1h-1z M205,693h1v1h-1z M206,693h1v1h-1z M207,693h1v1h-1z M208,693h1v1h-1z M209,693h1v1h-1z M210,693h1v1h-1z M211,693h1v1h-1z M214,693h1v1h-1z M215,693h1v1h-1z M216,693h1v1h-1z M217,693h1v1h-1z M218,693h1v1h-1z M220,693h1v1h-1z M221,693h1v1h-1z M222,693h1v1h-1z M223,693h1v1h-1z M224,693h1v1h-1z M225,693h1v1h-1z M206,694h1v1h-1z M207,694h1v1h-1z M208,694h1v1h-1z M209,694h1v1h-1z M210,694h1v1h-1z M211,694h1v1h-1z M212,694h1v1h-1z M214,694h1v1h-1z M215,694h1v1h-1z M216,694h1v1h-1z M217,694h1v1h-1z M218,694h1v1h-1z M221,694h1v1h-1z M222,694h1v1h-1z M223,694h1v1h-1z M224,694h1v1h-1z M225,694h1v1h-1z M206,695h1v1h-1z M207,695h1v1h-1z M208,695h1v1h-1z M212,695h1v1h-1z M213,695h1v1h-1z M214,695h1v1h-1z M215,695h1v1h-1z M216,695h1v1h-1z M217,695h1v1h-1z M222,695h1v1h-1z M223,695h1v1h-1z M224,695h1v1h-1z M225,695h1v1h-1z M206,696h1v1h-1z M207,696h1v1h-1z M208,696h1v1h-1z M212,696h1v1h-1z M213,696h1v1h-1z M214,696h1v1h-1z M215,696h1v1h-1z M216,696h1v1h-1z M217,696h1v1h-1z M223,696h1v1h-1z M224,696h1v1h-1z M225,696h1v1h-1z M206,697h1v1h-1z M207,697h1v1h-1z M208,697h1v1h-1z M211,697h1v1h-1z M212,697h1v1h-1z M213,697h1v1h-1z M214,697h1v1h-1z M215,697h1v1h-1z M216,697h1v1h-1z M217,697h1v1h-1z M218,697h1v1h-1z M223,697h1v1h-1z M224,697h1v1h-1z M201,698h1v1h-1z M202,698h1v1h-1z M203,698h1v1h-1z M204,698h1v1h-1z M205,698h1v1h-1z M209,698h1v1h-1z M210,698h1v1h-1z M211,698h1v1h-1z M212,698h1v1h-1z M213,698h1v1h-1z M214,698h1v1h-1z M215,698h1v1h-1z M216,698h1v1h-1z M217,698h1v1h-1z M218,698h1v1h-1z M219,698h1v1h-1z M220,698h1v1h-1z M221,698h1v1h-1z M223,698h1v1h-1z M224,698h1v1h-1z M200,699h1v1h-1z M201,699h1v1h-1z M202,699h1v1h-1z M203,699h1v1h-1z M204,699h1v1h-1z M205,699h1v1h-1z M209,699h1v1h-1z M210,699h1v1h-1z M211,699h1v1h-1z M212,699h1v1h-1z M213,699h1v1h-1z M214,699h1v1h-1z M215,699h1v1h-1z M216,699h1v1h-1z M217,699h1v1h-1z M218,699h1v1h-1z M219,699h1v1h-1z M220,699h1v1h-1z M221,699h1v1h-1z M223,699h1v1h-1z M224,699h1v1h-1z M199,700h1v1h-1z M200,700h1v1h-1z M201,700h1v1h-1z M202,700h1v1h-1z M203,700h1v1h-1z M204,700h1v1h-1z M205,700h1v1h-1z M210,700h1v1h-1z M211,700h1v1h-1z M212,700h1v1h-1z M213,700h1v1h-1z M214,700h1v1h-1z M215,700h1v1h-1z M216,700h1v1h-1z M217,700h1v1h-1z M218,700h1v1h-1z M219,700h1v1h-1z M220,700h1v1h-1z M223,700h1v1h-1z M197,701h1v1h-1z M198,701h1v1h-1z M199,701h1v1h-1z M203,701h1v1h-1z M204,701h1v1h-1z M205,701h1v1h-1z M211,701h1v1h-1z M212,701h1v1h-1z M213,701h1v1h-1z M214,701h1v1h-1z M215,701h1v1h-1z M216,701h1v1h-1z M217,701h1v1h-1z M218,701h1v1h-1z M197,702h1v1h-1z M198,702h1v1h-1z M204,702h1v1h-1z M205,702h1v1h-1z M206,702h1v1h-1z M212,702h1v1h-1z M213,702h1v1h-1z M214,702h1v1h-1z M215,702h1v1h-1z M216,702h1v1h-1z M217,702h1v1h-1z M197,703h1v1h-1z M198,703h1v1h-1z M211,703h1v1h-1z M212,703h1v1h-1z M213,703h1v1h-1z M214,703h1v1h-1z M215,703h1v1h-1z M216,703h1v1h-1z M217,703h1v1h-1z M192,704h1v1h-1z M197,704h1v1h-1z M198,704h1v1h-1z M199,704h1v1h-1z M211,704h1v1h-1z M212,704h1v1h-1z M213,704h1v1h-1z M214,704h1v1h-1z M215,704h1v1h-1z M216,704h1v1h-1z M217,704h1v1h-1z M191,705h1v1h-1z M192,705h1v1h-1z M193,705h1v1h-1z M197,705h1v1h-1z M198,705h1v1h-1z M199,705h1v1h-1z M208,705h1v1h-1z M209,705h1v1h-1z M210,705h1v1h-1z M211,705h1v1h-1z M212,705h1v1h-1z M213,705h1v1h-1z M214,705h1v1h-1z M215,705h1v1h-1z M216,705h1v1h-1z M217,705h1v1h-1z M191,706h1v1h-1z M192,706h1v1h-1z M193,706h1v1h-1z M194,706h1v1h-1z M197,706h1v1h-1z M198,706h1v1h-1z M199,706h1v1h-1z M211,706h1v1h-1z M212,706h1v1h-1z M213,706h1v1h-1z M214,706h1v1h-1z M215,706h1v1h-1z M216,706h1v1h-1z M217,706h1v1h-1z M188,707h1v1h-1z M190,707h1v1h-1z M191,707h1v1h-1z M192,707h1v1h-1z M193,707h1v1h-1z M194,707h1v1h-1z M195,707h1v1h-1z M196,707h1v1h-1z M197,707h1v1h-1z M198,707h1v1h-1z M199,707h1v1h-1z M200,707h1v1h-1z M201,707h1v1h-1z M202,707h1v1h-1z M203,707h1v1h-1z M204,707h1v1h-1z M205,707h1v1h-1z M206,707h1v1h-1z M212,707h1v1h-1z M213,707h1v1h-1z M214,707h1v1h-1z M215,707h1v1h-1z M216,707h1v1h-1z M187,708h1v1h-1z M188,708h1v1h-1z M190,708h1v1h-1z M191,708h1v1h-1z M192,708h1v1h-1z M193,708h1v1h-1z M194,708h1v1h-1z M195,708h1v1h-1z M196,708h1v1h-1z M197,708h1v1h-1z M199,708h1v1h-1z M200,708h1v1h-1z M201,708h1v1h-1z M202,708h1v1h-1z M203,708h1v1h-1z M204,708h1v1h-1z M205,708h1v1h-1z M206,708h1v1h-1z M214,708h1v1h-1z M215,708h1v1h-1z M186,709h1v1h-1z M187,709h1v1h-1z M188,709h1v1h-1z M189,709h1v1h-1z M190,709h1v1h-1z M191,709h1v1h-1z M192,709h1v1h-1z M193,709h1v1h-1z M194,709h1v1h-1z M195,709h1v1h-1z M196,709h1v1h-1z M197,709h1v1h-1z M199,709h1v1h-1z M200,709h1v1h-1z M201,709h1v1h-1z M202,709h1v1h-1z M203,709h1v1h-1z M204,709h1v1h-1z M205,709h1v1h-1z M206,709h1v1h-1z M207,709h1v1h-1z M185,710h1v1h-1z M186,710h1v1h-1z M187,710h1v1h-1z M188,710h1v1h-1z M189,710h1v1h-1z M190,710h1v1h-1z M191,710h1v1h-1z M192,710h1v1h-1z M193,710h1v1h-1z M194,710h1v1h-1z M195,710h1v1h-1z M196,710h1v1h-1z M197,710h1v1h-1z M198,710h1v1h-1z M199,710h1v1h-1z M200,710h1v1h-1z M201,710h1v1h-1z M202,710h1v1h-1z M203,710h1v1h-1z M204,710h1v1h-1z M205,710h1v1h-1z M206,710h1v1h-1z M207,710h1v1h-1z M184,711h1v1h-1z M185,711h1v1h-1z M186,711h1v1h-1z M187,711h1v1h-1z M188,711h1v1h-1z M189,711h1v1h-1z M190,711h1v1h-1z M191,711h1v1h-1z M192,711h1v1h-1z M193,711h1v1h-1z M194,711h1v1h-1z M195,711h1v1h-1z M196,711h1v1h-1z M197,711h1v1h-1z M198,711h1v1h-1z M199,711h1v1h-1z M200,711h1v1h-1z M202,711h1v1h-1z M203,711h1v1h-1z M204,711h1v1h-1z M205,711h1v1h-1z M206,711h1v1h-1z M207,711h1v1h-1z M208,711h1v1h-1z M183,712h1v1h-1z M184,712h1v1h-1z M185,712h1v1h-1z M186,712h1v1h-1z M187,712h1v1h-1z M188,712h1v1h-1z M189,712h1v1h-1z M190,712h1v1h-1z M191,712h1v1h-1z M192,712h1v1h-1z M193,712h1v1h-1z M194,712h1v1h-1z M195,712h1v1h-1z M196,712h1v1h-1z M197,712h1v1h-1z M199,712h1v1h-1z M200,712h1v1h-1z M201,712h1v1h-1z M202,712h1v1h-1z M203,712h1v1h-1z M204,712h1v1h-1z M205,712h1v1h-1z M206,712h1v1h-1z M207,712h1v1h-1z M208,712h1v1h-1z M182,713h1v1h-1z M183,713h1v1h-1z M184,713h1v1h-1z M185,713h1v1h-1z M186,713h1v1h-1z M187,713h1v1h-1z M188,713h1v1h-1z M189,713h1v1h-1z M190,713h1v1h-1z M191,713h1v1h-1z M195,713h1v1h-1z M200,713h1v1h-1z M201,713h1v1h-1z M202,713h1v1h-1z M203,713h1v1h-1z M204,713h1v1h-1z M205,713h1v1h-1z M206,713h1v1h-1z M207,713h1v1h-1z M181,714h1v1h-1z M182,714h1v1h-1z M183,714h1v1h-1z M184,714h1v1h-1z M185,714h1v1h-1z M186,714h1v1h-1z M187,714h1v1h-1z M188,714h1v1h-1z M189,714h1v1h-1z M190,714h1v1h-1z M200,714h1v1h-1z M201,714h1v1h-1z M202,714h1v1h-1z M203,714h1v1h-1z M206,714h1v1h-1z M207,714h1v1h-1z M181,715h1v1h-1z M182,715h1v1h-1z M183,715h1v1h-1z M184,715h1v1h-1z M185,715h1v1h-1z M186,715h1v1h-1z M187,715h1v1h-1z M188,715h1v1h-1z M189,715h1v1h-1z M190,715h1v1h-1z M200,715h1v1h-1z M201,715h1v1h-1z M202,715h1v1h-1z M203,715h1v1h-1z M182,716h1v1h-1z M183,716h1v1h-1z M188,716h1v1h-1z M189,716h1v1h-1z M200,716h1v1h-1z M201,716h1v1h-1z M202,716h1v1h-1z M203,716h1v1h-1z M200,717h1v1h-1z M201,717h1v1h-1z M202,717h1v1h-1z M201,718h1v1h-1z M202,718h1v1h-1z M203,718h1v1h-1z M204,718h1v1h-1z M195,719h1v1h-1z M201,719h1v1h-1z M202,719h1v1h-1z M203,719h1v1h-1z M204,719h1v1h-1z M193,720h1v1h-1z M194,720h1v1h-1z M195,720h1v1h-1z M196,720h1v1h-1z M197,720h1v1h-1z M202,720h1v1h-1z M203,720h1v1h-1z M204,720h1v1h-1z M192,721h1v1h-1z M193,721h1v1h-1z M194,721h1v1h-1z M195,721h1v1h-1z M196,721h1v1h-1z M202,721h1v1h-1z M203,721h1v1h-1z M204,721h1v1h-1z M191,722h1v1h-1z M192,722h1v1h-1z M193,722h1v1h-1z M200,722h1v1h-1z M201,722h1v1h-1z M202,722h1v1h-1z M191,723h1v1h-1z M192,723h1v1h-1z M193,723h1v1h-1z M199,723h1v1h-1z M200,723h1v1h-1z M201,723h1v1h-1z M191,724h1v1h-1z M192,724h1v1h-1z M193,724h1v1h-1z M194,724h1v1h-1z M200,724h1v1h-1z M201,724h1v1h-1z M185,725h1v1h-1z M186,725h1v1h-1z M187,725h1v1h-1z M188,725h1v1h-1z M191,725h1v1h-1z M192,725h1v1h-1z M193,725h1v1h-1z M194,725h1v1h-1z M195,725h1v1h-1z M196,725h1v1h-1z M200,725h1v1h-1z M201,725h1v1h-1z M202,725h1v1h-1z M185,726h1v1h-1z M186,726h1v1h-1z M187,726h1v1h-1z M188,726h1v1h-1z M191,726h1v1h-1z M192,726h1v1h-1z M193,726h1v1h-1z M194,726h1v1h-1z M195,726h1v1h-1z M196,726h1v1h-1z M197,726h1v1h-1z M201,726h1v1h-1z M202,726h1v1h-1z M185,727h1v1h-1z M186,727h1v1h-1z M187,727h1v1h-1z M188,727h1v1h-1z M189,727h1v1h-1z M190,727h1v1h-1z M191,727h1v1h-1z M192,727h1v1h-1z M193,727h1v1h-1z M194,727h1v1h-1z M195,727h1v1h-1z M196,727h1v1h-1z M197,727h1v1h-1z M198,727h1v1h-1z M199,727h1v1h-1z M200,727h1v1h-1z M201,727h1v1h-1z M202,727h1v1h-1z M186,728h1v1h-1z M187,728h1v1h-1z M188,728h1v1h-1z M189,728h1v1h-1z M190,728h1v1h-1z M191,728h1v1h-1z M192,728h1v1h-1z M193,728h1v1h-1z M194,728h1v1h-1z M195,728h1v1h-1z M196,728h1v1h-1z M197,728h1v1h-1z M198,728h1v1h-1z M199,728h1v1h-1z M200,728h1v1h-1z M201,728h1v1h-1z M202,728h1v1h-1z M189,729h1v1h-1z M190,729h1v1h-1z M191,729h1v1h-1z M192,729h1v1h-1z M193,729h1v1h-1z M196,729h1v1h-1z M197,729h1v1h-1z M198,729h1v1h-1z M199,729h1v1h-1z M200,729h1v1h-1z M201,729h1v1h-1z M202,729h1v1h-1z M191,730h1v1h-1z M192,730h1v1h-1z M193,730h1v1h-1z M197,730h1v1h-1z M198,730h1v1h-1z M199,730h1v1h-1z M200,730h1v1h-1z M201,730h1v1h-1z M202,730h1v1h-1z M197,731h1v1h-1z M198,731h1v1h-1z M199,731h1v1h-1z M200,731h1v1h-1z M201,731h1v1h-1z M202,731h1v1h-1z M197,732h1v1h-1z M198,732h1v1h-1z M199,732h1v1h-1z M202,732h1v1h-1z M159,739h1v1h-1z M160,739h1v1h-1z M161,739h1v1h-1z M159,740h1v1h-1z M160,740h1v1h-1z M161,740h1v1h-1z M162,740h1v1h-1z M129,741h1v1h-1z M130,741h1v1h-1z M131,741h1v1h-1z M159,741h1v1h-1z M160,741h1v1h-1z M161,741h1v1h-1z M162,741h1v1h-1z M163,741h1v1h-1z M168,741h1v1h-1z M169,741h1v1h-1z M170,741h1v1h-1z M171,741h1v1h-1z M172,741h1v1h-1z M125,742h1v1h-1z M126,742h1v1h-1z M127,742h1v1h-1z M128,742h1v1h-1z M129,742h1v1h-1z M130,742h1v1h-1z M131,742h1v1h-1z M132,742h1v1h-1z M133,742h1v1h-1z M159,742h1v1h-1z M160,742h1v1h-1z M161,742h1v1h-1z M162,742h1v1h-1z M168,742h1v1h-1z M169,742h1v1h-1z M170,742h1v1h-1z M171,742h1v1h-1z M172,742h1v1h-1z M173,742h1v1h-1z M115,743h1v1h-1z M116,743h1v1h-1z M117,743h1v1h-1z M118,743h1v1h-1z M119,743h1v1h-1z M125,743h1v1h-1z M126,743h1v1h-1z M127,743h1v1h-1z M128,743h1v1h-1z M129,743h1v1h-1z M130,743h1v1h-1z M131,743h1v1h-1z M132,743h1v1h-1z M133,743h1v1h-1z M153,743h1v1h-1z M154,743h1v1h-1z M158,743h1v1h-1z M159,743h1v1h-1z M160,743h1v1h-1z M168,743h1v1h-1z M169,743h1v1h-1z M170,743h1v1h-1z M171,743h1v1h-1z M172,743h1v1h-1z M173,743h1v1h-1z M174,743h1v1h-1z M175,743h1v1h-1z M176,743h1v1h-1z M118,744h1v1h-1z M119,744h1v1h-1z M120,744h1v1h-1z M125,744h1v1h-1z M126,744h1v1h-1z M127,744h1v1h-1z M128,744h1v1h-1z M129,744h1v1h-1z M130,744h1v1h-1z M131,744h1v1h-1z M132,744h1v1h-1z M133,744h1v1h-1z M152,744h1v1h-1z M153,744h1v1h-1z M154,744h1v1h-1z M155,744h1v1h-1z M158,744h1v1h-1z M159,744h1v1h-1z M169,744h1v1h-1z M170,744h1v1h-1z M171,744h1v1h-1z M172,744h1v1h-1z M173,744h1v1h-1z M174,744h1v1h-1z M175,744h1v1h-1z M176,744h1v1h-1z M177,744h1v1h-1z M117,745h1v1h-1z M118,745h1v1h-1z M119,745h1v1h-1z M120,745h1v1h-1z M121,745h1v1h-1z M126,745h1v1h-1z M127,745h1v1h-1z M128,745h1v1h-1z M129,745h1v1h-1z M130,745h1v1h-1z M131,745h1v1h-1z M132,745h1v1h-1z M133,745h1v1h-1z M152,745h1v1h-1z M153,745h1v1h-1z M154,745h1v1h-1z M158,745h1v1h-1z M159,745h1v1h-1z M168,745h1v1h-1z M169,745h1v1h-1z M170,745h1v1h-1z M171,745h1v1h-1z M172,745h1v1h-1z M173,745h1v1h-1z M174,745h1v1h-1z M175,745h1v1h-1z M176,745h1v1h-1z M112,746h1v1h-1z M116,746h1v1h-1z M117,746h1v1h-1z M118,746h1v1h-1z M119,746h1v1h-1z M120,746h1v1h-1z M121,746h1v1h-1z M127,746h1v1h-1z M128,746h1v1h-1z M129,746h1v1h-1z M130,746h1v1h-1z M131,746h1v1h-1z M132,746h1v1h-1z M133,746h1v1h-1z M134,746h1v1h-1z M158,746h1v1h-1z M159,746h1v1h-1z M160,746h1v1h-1z M168,746h1v1h-1z M169,746h1v1h-1z M170,746h1v1h-1z M171,746h1v1h-1z M172,746h1v1h-1z M173,746h1v1h-1z M112,747h1v1h-1z M113,747h1v1h-1z M115,747h1v1h-1z M116,747h1v1h-1z M117,747h1v1h-1z M118,747h1v1h-1z M119,747h1v1h-1z M120,747h1v1h-1z M121,747h1v1h-1z M122,747h1v1h-1z M128,747h1v1h-1z M129,747h1v1h-1z M130,747h1v1h-1z M131,747h1v1h-1z M132,747h1v1h-1z M133,747h1v1h-1z M134,747h1v1h-1z M135,747h1v1h-1z M150,747h1v1h-1z M158,747h1v1h-1z M159,747h1v1h-1z M160,747h1v1h-1z M167,747h1v1h-1z M168,747h1v1h-1z M169,747h1v1h-1z M170,747h1v1h-1z M180,747h1v1h-1z M112,748h1v1h-1z M117,748h1v1h-1z M118,748h1v1h-1z M119,748h1v1h-1z M120,748h1v1h-1z M121,748h1v1h-1z M129,748h1v1h-1z M158,748h1v1h-1z M159,748h1v1h-1z M160,748h1v1h-1z M167,748h1v1h-1z M168,748h1v1h-1z M169,748h1v1h-1z M170,748h1v1h-1z M171,748h1v1h-1z M112,749h1v1h-1z M126,749h1v1h-1z M155,749h1v1h-1z M156,749h1v1h-1z M157,749h1v1h-1z M158,749h1v1h-1z M159,749h1v1h-1z M168,749h1v1h-1z M169,749h1v1h-1z M170,749h1v1h-1z M171,749h1v1h-1z M172,749h1v1h-1z M177,749h1v1h-1z M183,749h1v1h-1z M112,750h1v1h-1z M125,750h1v1h-1z M126,750h1v1h-1z M144,750h1v1h-1z M153,750h1v1h-1z M154,750h1v1h-1z M155,750h1v1h-1z M156,750h1v1h-1z M157,750h1v1h-1z M158,750h1v1h-1z M169,750h1v1h-1z M170,750h1v1h-1z M171,750h1v1h-1z M172,750h1v1h-1z M176,750h1v1h-1z M177,750h1v1h-1z M178,750h1v1h-1z M182,750h1v1h-1z M183,750h1v1h-1z M184,750h1v1h-1z M112,751h1v1h-1z M113,751h1v1h-1z M126,751h1v1h-1z M138,751h1v1h-1z M144,751h1v1h-1z M154,751h1v1h-1z M155,751h1v1h-1z M156,751h1v1h-1z M157,751h1v1h-1z M169,751h1v1h-1z M170,751h1v1h-1z M171,751h1v1h-1z M176,751h1v1h-1z M177,751h1v1h-1z M178,751h1v1h-1z M112,752h1v1h-1z M113,752h1v1h-1z M114,752h1v1h-1z M138,752h1v1h-1z M139,752h1v1h-1z M140,752h1v1h-1z M141,752h1v1h-1z M156,752h1v1h-1z M168,752h1v1h-1z M176,752h1v1h-1z M177,752h1v1h-1z M178,752h1v1h-1z M112,753h1v1h-1z M113,753h1v1h-1z M114,753h1v1h-1z M115,753h1v1h-1z M116,753h1v1h-1z M137,753h1v1h-1z M138,753h1v1h-1z M139,753h1v1h-1z M140,753h1v1h-1z M141,753h1v1h-1z M142,753h1v1h-1z M146,753h1v1h-1z M147,753h1v1h-1z M164,753h1v1h-1z M165,753h1v1h-1z M166,753h1v1h-1z M167,753h1v1h-1z M168,753h1v1h-1z M177,753h1v1h-1z M187,753h1v1h-1z M112,754h1v1h-1z M113,754h1v1h-1z M114,754h1v1h-1z M115,754h1v1h-1z M138,754h1v1h-1z M139,754h1v1h-1z M140,754h1v1h-1z M141,754h1v1h-1z M142,754h1v1h-1z M143,754h1v1h-1z M144,754h1v1h-1z M145,754h1v1h-1z M146,754h1v1h-1z M147,754h1v1h-1z M164,754h1v1h-1z M165,754h1v1h-1z M166,754h1v1h-1z M167,754h1v1h-1z M168,754h1v1h-1z M177,754h1v1h-1z M112,755h1v1h-1z M113,755h1v1h-1z M114,755h1v1h-1z M119,755h1v1h-1z M120,755h1v1h-1z M138,755h1v1h-1z M139,755h1v1h-1z M143,755h1v1h-1z M144,755h1v1h-1z M145,755h1v1h-1z M146,755h1v1h-1z M163,755h1v1h-1z M164,755h1v1h-1z M165,755h1v1h-1z M166,755h1v1h-1z M167,755h1v1h-1z M168,755h1v1h-1z M177,755h1v1h-1z M118,756h1v1h-1z M119,756h1v1h-1z M120,756h1v1h-1z M121,756h1v1h-1z M129,756h1v1h-1z M143,756h1v1h-1z M144,756h1v1h-1z M145,756h1v1h-1z M146,756h1v1h-1z M150,756h1v1h-1z M159,756h1v1h-1z M160,756h1v1h-1z M161,756h1v1h-1z M163,756h1v1h-1z M164,756h1v1h-1z M165,756h1v1h-1z M166,756h1v1h-1z M167,756h1v1h-1z M179,756h1v1h-1z M180,756h1v1h-1z M181,756h1v1h-1z M182,756h1v1h-1z M183,756h1v1h-1z M184,756h1v1h-1z M117,757h1v1h-1z M118,757h1v1h-1z M119,757h1v1h-1z M120,757h1v1h-1z M121,757h1v1h-1z M129,757h1v1h-1z M138,757h1v1h-1z M143,757h1v1h-1z M144,757h1v1h-1z M145,757h1v1h-1z M146,757h1v1h-1z M149,757h1v1h-1z M150,757h1v1h-1z M159,757h1v1h-1z M160,757h1v1h-1z M161,757h1v1h-1z M163,757h1v1h-1z M164,757h1v1h-1z M165,757h1v1h-1z M166,757h1v1h-1z M167,757h1v1h-1z M181,757h1v1h-1z M182,757h1v1h-1z M183,757h1v1h-1z M210,738h1v1h-1z M213,740h1v1h-1z M218,740h1v1h-1z M219,740h1v1h-1z M207,741h1v1h-1z M213,741h1v1h-1z M214,741h1v1h-1z M218,741h1v1h-1z M219,741h1v1h-1z M220,741h1v1h-1z M221,741h1v1h-1z M207,742h1v1h-1z M208,742h1v1h-1z M213,742h1v1h-1z M214,742h1v1h-1z M217,742h1v1h-1z M218,742h1v1h-1z M219,742h1v1h-1z M220,742h1v1h-1z M221,742h1v1h-1z M207,743h1v1h-1z M208,743h1v1h-1z M215,743h1v1h-1z M216,743h1v1h-1z M217,743h1v1h-1z M218,743h1v1h-1z M219,743h1v1h-1z M220,743h1v1h-1z M207,744h1v1h-1z M208,744h1v1h-1z M209,744h1v1h-1z M215,744h1v1h-1z M216,744h1v1h-1z M217,744h1v1h-1z M218,744h1v1h-1z M219,744h1v1h-1z M220,744h1v1h-1z M207,745h1v1h-1z M208,745h1v1h-1z M215,745h1v1h-1z M216,745h1v1h-1z M217,745h1v1h-1z M218,745h1v1h-1z M219,745h1v1h-1z M220,745h1v1h-1z M221,745h1v1h-1z M215,746h1v1h-1z M216,746h1v1h-1z M217,746h1v1h-1z M218,746h1v1h-1z M219,746h1v1h-1z M220,746h1v1h-1z M221,746h1v1h-1z M222,746h1v1h-1z M223,746h1v1h-1z M224,746h1v1h-1z M225,746h1v1h-1z M215,747h1v1h-1z M216,747h1v1h-1z M217,747h1v1h-1z M218,747h1v1h-1z M219,747h1v1h-1z M220,747h1v1h-1z M221,747h1v1h-1z M222,747h1v1h-1z M223,747h1v1h-1z M224,747h1v1h-1z M225,747h1v1h-1z M226,747h1v1h-1z M227,747h1v1h-1z M210,748h1v1h-1z M217,748h1v1h-1z M218,748h1v1h-1z M219,748h1v1h-1z M220,748h1v1h-1z M221,748h1v1h-1z M222,748h1v1h-1z M223,748h1v1h-1z M224,748h1v1h-1z M225,748h1v1h-1z M226,748h1v1h-1z M227,748h1v1h-1z M228,748h1v1h-1z M209,749h1v1h-1z M210,749h1v1h-1z M211,749h1v1h-1z M212,749h1v1h-1z M213,749h1v1h-1z M224,749h1v1h-1z M225,749h1v1h-1z M226,749h1v1h-1z M227,749h1v1h-1z M228,749h1v1h-1z M210,750h1v1h-1z M211,750h1v1h-1z M212,750h1v1h-1z M213,750h1v1h-1z M224,750h1v1h-1z M225,750h1v1h-1z M226,750h1v1h-1z M227,750h1v1h-1z M228,750h1v1h-1z M229,750h1v1h-1z M210,751h1v1h-1z M211,751h1v1h-1z M212,751h1v1h-1z M213,751h1v1h-1z M224,751h1v1h-1z M225,751h1v1h-1z M226,751h1v1h-1z M227,751h1v1h-1z M228,751h1v1h-1z M211,752h1v1h-1z M212,752h1v1h-1z M213,752h1v1h-1z M224,752h1v1h-1z M225,752h1v1h-1z M226,752h1v1h-1z M227,752h1v1h-1z M234,752h1v1h-1z M224,753h1v1h-1z M225,753h1v1h-1z M226,753h1v1h-1z M234,753h1v1h-1z M235,753h1v1h-1z M213,754h1v1h-1z M214,754h1v1h-1z M215,754h1v1h-1z M216,754h1v1h-1z M223,754h1v1h-1z M224,754h1v1h-1z M225,754h1v1h-1z M213,755h1v1h-1z M214,755h1v1h-1z M215,755h1v1h-1z M216,755h1v1h-1z M217,755h1v1h-1z M220,755h1v1h-1z M221,755h1v1h-1z M222,755h1v1h-1z M223,755h1v1h-1z M214,756h1v1h-1z M215,756h1v1h-1z M216,756h1v1h-1z M217,756h1v1h-1z M218,756h1v1h-1z M220,756h1v1h-1z M221,756h1v1h-1z M222,756h1v1h-1z M223,756h1v1h-1z M215,757h1v1h-1z M221,757h1v1h-1z M222,757h1v1h-1z M223,757h1v1h-1z M784,646h1v1h-1z M785,646h1v1h-1z M786,646h1v1h-1z M787,646h1v1h-1z M788,646h1v1h-1z M789,646h1v1h-1z M784,647h1v1h-1z M785,647h1v1h-1z M786,647h1v1h-1z M787,647h1v1h-1z M788,647h1v1h-1z M789,647h1v1h-1z M785,648h1v1h-1z M786,648h1v1h-1z M787,648h1v1h-1z M788,648h1v1h-1z M789,648h1v1h-1z M786,649h1v1h-1z M787,649h1v1h-1z M788,649h1v1h-1z M789,649h1v1h-1z M779,650h1v1h-1z M780,650h1v1h-1z M787,650h1v1h-1z M788,650h1v1h-1z M789,650h1v1h-1z M790,650h1v1h-1z M779,651h1v1h-1z M780,651h1v1h-1z M781,651h1v1h-1z M788,651h1v1h-1z M789,651h1v1h-1z M790,651h1v1h-1z M780,652h1v1h-1z M781,652h1v1h-1z M789,652h1v1h-1z M780,653h1v1h-1z M781,653h1v1h-1z M781,654h1v1h-1z M782,654h1v1h-1z M783,654h1v1h-1z M785,656h1v1h-1z M786,656h1v1h-1z M787,656h1v1h-1z M785,657h1v1h-1z M786,657h1v1h-1z M787,657h1v1h-1z M788,657h1v1h-1z M785,658h1v1h-1z M786,658h1v1h-1z M787,658h1v1h-1z M788,658h1v1h-1z M789,658h1v1h-1z M781,659h1v1h-1z M784,659h1v1h-1z M785,659h1v1h-1z M786,659h1v1h-1z M787,659h1v1h-1z M788,659h1v1h-1z M789,659h1v1h-1z M790,659h1v1h-1z M791,659h1v1h-1z M782,660h1v1h-1z M783,660h1v1h-1z M784,660h1v1h-1z M785,660h1v1h-1z M786,660h1v1h-1z M787,660h1v1h-1z M788,660h1v1h-1z M782,661h1v1h-1z M783,661h1v1h-1z M800,561h1v1h-1z M801,561h1v1h-1z M800,562h1v1h-1z M801,562h1v1h-1z M805,562h1v1h-1z M800,563h1v1h-1z M801,563h1v1h-1z M802,563h1v1h-1z M805,563h1v1h-1z M800,564h1v1h-1z M801,564h1v1h-1z M802,564h1v1h-1z M805,564h1v1h-1z M799,565h1v1h-1z M800,565h1v1h-1z M801,565h1v1h-1z M802,565h1v1h-1z M805,565h1v1h-1z M799,566h1v1h-1z M800,566h1v1h-1z M801,566h1v1h-1z M802,566h1v1h-1z M799,567h1v1h-1z M800,567h1v1h-1z M801,567h1v1h-1z M802,567h1v1h-1z M803,567h1v1h-1z M799,568h1v1h-1z M800,568h1v1h-1z M801,568h1v1h-1z M802,568h1v1h-1z M803,568h1v1h-1z M804,568h1v1h-1z M805,568h1v1h-1z M800,569h1v1h-1z M801,569h1v1h-1z M802,569h1v1h-1z M803,569h1v1h-1z M804,569h1v1h-1z M805,569h1v1h-1z M802,570h1v1h-1z M803,570h1v1h-1z M804,570h1v1h-1z M805,570h1v1h-1z M802,571h1v1h-1z M803,571h1v1h-1z M804,571h1v1h-1z M805,571h1v1h-1z M800,572h1v1h-1z M801,572h1v1h-1z M802,572h1v1h-1z M804,572h1v1h-1z M805,572h1v1h-1z M800,573h1v1h-1z M801,573h1v1h-1z M805,573h1v1h-1z M799,574h1v1h-1z M800,574h1v1h-1z M801,574h1v1h-1z M802,574h1v1h-1z M805,574h1v1h-1z M797,575h1v1h-1z M798,575h1v1h-1z M799,575h1v1h-1z M800,575h1v1h-1z M801,575h1v1h-1z M802,575h1v1h-1z M804,575h1v1h-1z M805,575h1v1h-1z M797,576h1v1h-1z M798,576h1v1h-1z M799,576h1v1h-1z M800,576h1v1h-1z M801,576h1v1h-1z M802,576h1v1h-1z M803,576h1v1h-1z M804,576h1v1h-1z M796,577h1v1h-1z M797,577h1v1h-1z M798,577h1v1h-1z M799,577h1v1h-1z M800,577h1v1h-1z M801,577h1v1h-1z M802,577h1v1h-1z M803,577h1v1h-1z M804,577h1v1h-1z M796,578h1v1h-1z M797,578h1v1h-1z M798,578h1v1h-1z M799,578h1v1h-1z M800,578h1v1h-1z M801,578h1v1h-1z M802,578h1v1h-1z M803,578h1v1h-1z M804,578h1v1h-1z M796,579h1v1h-1z M797,579h1v1h-1z M798,579h1v1h-1z M800,579h1v1h-1z M801,579h1v1h-1z M802,579h1v1h-1z M803,579h1v1h-1z M804,579h1v1h-1z M796,580h1v1h-1z M797,580h1v1h-1z M802,580h1v1h-1z M803,580h1v1h-1z M804,580h1v1h-1z M796,581h1v1h-1z M797,581h1v1h-1z M802,581h1v1h-1z M803,581h1v1h-1z M804,581h1v1h-1z M796,582h1v1h-1z M797,582h1v1h-1z M802,582h1v1h-1z M803,582h1v1h-1z M804,582h1v1h-1z M795,583h1v1h-1z M796,583h1v1h-1z M802,583h1v1h-1z M803,583h1v1h-1z M795,584h1v1h-1z M796,584h1v1h-1z M801,584h1v1h-1z M802,584h1v1h-1z M803,584h1v1h-1z M795,585h1v1h-1z M796,585h1v1h-1z M800,585h1v1h-1z M801,585h1v1h-1z M802,585h1v1h-1z M795,586h1v1h-1z M796,586h1v1h-1z M801,586h1v1h-1z M802,586h1v1h-1z M796,587h1v1h-1z M796,588h1v1h-1z M804,588h1v1h-1z M805,588h1v1h-1z M796,589h1v1h-1z M804,589h1v1h-1z M805,589h1v1h-1z M796,590h1v1h-1z M804,590h1v1h-1z M805,590h1v1h-1z M796,591h1v1h-1z M797,591h1v1h-1z M799,591h1v1h-1z M800,591h1v1h-1z M801,591h1v1h-1z M802,591h1v1h-1z M804,591h1v1h-1z M805,591h1v1h-1z M796,592h1v1h-1z M797,592h1v1h-1z M798,592h1v1h-1z M799,592h1v1h-1z M800,592h1v1h-1z M801,592h1v1h-1z M802,592h1v1h-1z M804,592h1v1h-1z M805,592h1v1h-1z M796,593h1v1h-1z M797,593h1v1h-1z M798,593h1v1h-1z M799,593h1v1h-1z M800,593h1v1h-1z M801,593h1v1h-1z M802,593h1v1h-1z M804,593h1v1h-1z M805,593h1v1h-1z M797,594h1v1h-1z M798,594h1v1h-1z M799,594h1v1h-1z M800,594h1v1h-1z M801,594h1v1h-1z M802,594h1v1h-1z M804,594h1v1h-1z M805,594h1v1h-1z M798,595h1v1h-1z M799,595h1v1h-1z M800,595h1v1h-1z M801,595h1v1h-1z M802,595h1v1h-1z M804,595h1v1h-1z M805,595h1v1h-1z M794,596h1v1h-1z M798,596h1v1h-1z M799,596h1v1h-1z M800,596h1v1h-1z M801,596h1v1h-1z M802,596h1v1h-1z M805,596h1v1h-1z M799,597h1v1h-1z M800,597h1v1h-1z M801,597h1v1h-1z M802,597h1v1h-1z M803,597h1v1h-1z M804,597h1v1h-1z M800,598h1v1h-1z M801,598h1v1h-1z M802,598h1v1h-1z M803,598h1v1h-1z M804,598h1v1h-1z M800,599h1v1h-1z M801,599h1v1h-1z M802,599h1v1h-1z M803,599h1v1h-1z M804,599h1v1h-1z M800,600h1v1h-1z M801,600h1v1h-1z M802,600h1v1h-1z M803,600h1v1h-1z M804,600h1v1h-1z M800,601h1v1h-1z M801,601h1v1h-1z M802,601h1v1h-1z M803,601h1v1h-1z M804,601h1v1h-1z M799,602h1v1h-1z M800,602h1v1h-1z M801,602h1v1h-1z M802,602h1v1h-1z M803,602h1v1h-1z M796,603h1v1h-1z M797,603h1v1h-1z M798,603h1v1h-1z M799,603h1v1h-1z M803,603h1v1h-1z M795,604h1v1h-1z M796,604h1v1h-1z M797,604h1v1h-1z M798,604h1v1h-1z M799,604h1v1h-1z M795,605h1v1h-1z M796,605h1v1h-1z M797,605h1v1h-1z M798,605h1v1h-1z M799,605h1v1h-1z M795,606h1v1h-1z M796,606h1v1h-1z M797,606h1v1h-1z M798,606h1v1h-1z M799,606h1v1h-1z M795,607h1v1h-1z M796,607h1v1h-1z M797,607h1v1h-1z M798,607h1v1h-1z M799,607h1v1h-1z M791,608h1v1h-1z M795,608h1v1h-1z M796,608h1v1h-1z M797,608h1v1h-1z M798,608h1v1h-1z M799,608h1v1h-1z M791,609h1v1h-1z M795,609h1v1h-1z M796,609h1v1h-1z M797,609h1v1h-1z M798,609h1v1h-1z M799,609h1v1h-1z M791,610h1v1h-1z M792,610h1v1h-1z M793,610h1v1h-1z M796,610h1v1h-1z M797,610h1v1h-1z M798,610h1v1h-1z M799,610h1v1h-1z M803,610h1v1h-1z M804,610h1v1h-1z M805,610h1v1h-1z M791,611h1v1h-1z M792,611h1v1h-1z M793,611h1v1h-1z M794,611h1v1h-1z M797,611h1v1h-1z M798,611h1v1h-1z M799,611h1v1h-1z M800,611h1v1h-1z M802,611h1v1h-1z M803,611h1v1h-1z M804,611h1v1h-1z M805,611h1v1h-1z M791,612h1v1h-1z M792,612h1v1h-1z M793,612h1v1h-1z M794,612h1v1h-1z M797,612h1v1h-1z M798,612h1v1h-1z M799,612h1v1h-1z M800,612h1v1h-1z M801,612h1v1h-1z M802,612h1v1h-1z M803,612h1v1h-1z M804,612h1v1h-1z M805,612h1v1h-1z M791,613h1v1h-1z M792,613h1v1h-1z M793,613h1v1h-1z M797,613h1v1h-1z M798,613h1v1h-1z M799,613h1v1h-1z M800,613h1v1h-1z M801,613h1v1h-1z M802,613h1v1h-1z M803,613h1v1h-1z M804,613h1v1h-1z M805,613h1v1h-1z M791,614h1v1h-1z M792,614h1v1h-1z M796,614h1v1h-1z M797,614h1v1h-1z M798,614h1v1h-1z M799,614h1v1h-1z M800,614h1v1h-1z M801,614h1v1h-1z M802,614h1v1h-1z M803,614h1v1h-1z M804,614h1v1h-1z M796,615h1v1h-1z M797,615h1v1h-1z M798,615h1v1h-1z M799,615h1v1h-1z M800,615h1v1h-1z M801,615h1v1h-1z M802,615h1v1h-1z M803,615h1v1h-1z M791,616h1v1h-1z M792,616h1v1h-1z M793,616h1v1h-1z M794,616h1v1h-1z M795,616h1v1h-1z M796,616h1v1h-1z M797,616h1v1h-1z M799,616h1v1h-1z M800,616h1v1h-1z M801,616h1v1h-1z M802,616h1v1h-1z M803,616h1v1h-1z M804,616h1v1h-1z M791,617h1v1h-1z M792,617h1v1h-1z M793,617h1v1h-1z M794,617h1v1h-1z M795,617h1v1h-1z M801,617h1v1h-1z M802,617h1v1h-1z M803,617h1v1h-1z M804,617h1v1h-1z M791,618h1v1h-1z M792,618h1v1h-1z M793,618h1v1h-1z M794,618h1v1h-1z M795,618h1v1h-1z M802,618h1v1h-1z M803,618h1v1h-1z M804,618h1v1h-1z M805,618h1v1h-1z M791,619h1v1h-1z M792,619h1v1h-1z M793,619h1v1h-1z M794,619h1v1h-1z M795,619h1v1h-1z M802,619h1v1h-1z M803,619h1v1h-1z M804,619h1v1h-1z M805,619h1v1h-1z M791,620h1v1h-1z M792,620h1v1h-1z M793,620h1v1h-1z M794,620h1v1h-1z M803,620h1v1h-1z M804,620h1v1h-1z M805,620h1v1h-1z M791,621h1v1h-1z M792,621h1v1h-1z M805,621h1v1h-1z M789,622h1v1h-1z M790,622h1v1h-1z M796,622h1v1h-1z M797,622h1v1h-1z M805,622h1v1h-1z M789,623h1v1h-1z M790,623h1v1h-1z M796,623h1v1h-1z M797,623h1v1h-1z M798,623h1v1h-1z M805,623h1v1h-1z M789,624h1v1h-1z M790,624h1v1h-1z M795,624h1v1h-1z M796,624h1v1h-1z M797,624h1v1h-1z M798,624h1v1h-1z M805,624h1v1h-1z M790,625h1v1h-1z M794,625h1v1h-1z M795,625h1v1h-1z M796,625h1v1h-1z M797,625h1v1h-1z M798,625h1v1h-1z M805,625h1v1h-1z M790,626h1v1h-1z M793,626h1v1h-1z M794,626h1v1h-1z M795,626h1v1h-1z M796,626h1v1h-1z M797,626h1v1h-1z M798,626h1v1h-1z M805,626h1v1h-1z M790,627h1v1h-1z M793,627h1v1h-1z M794,627h1v1h-1z M795,627h1v1h-1z M796,627h1v1h-1z M797,627h1v1h-1z M798,627h1v1h-1z M799,627h1v1h-1z M800,627h1v1h-1z M801,627h1v1h-1z M805,627h1v1h-1z M790,628h1v1h-1z M791,628h1v1h-1z M792,628h1v1h-1z M793,628h1v1h-1z M794,628h1v1h-1z M795,628h1v1h-1z M796,628h1v1h-1z M797,628h1v1h-1z M798,628h1v1h-1z M799,628h1v1h-1z M800,628h1v1h-1z M801,628h1v1h-1z M790,629h1v1h-1z M791,629h1v1h-1z M792,629h1v1h-1z M793,629h1v1h-1z M794,629h1v1h-1z M795,629h1v1h-1z M796,629h1v1h-1z M797,629h1v1h-1z M798,629h1v1h-1z M799,629h1v1h-1z M800,629h1v1h-1z M801,629h1v1h-1z M791,630h1v1h-1z M792,630h1v1h-1z M793,630h1v1h-1z M794,630h1v1h-1z M795,630h1v1h-1z M797,630h1v1h-1z M798,630h1v1h-1z M799,630h1v1h-1z M800,630h1v1h-1z M801,630h1v1h-1z M790,631h1v1h-1z M791,631h1v1h-1z M792,631h1v1h-1z M793,631h1v1h-1z M794,631h1v1h-1z M795,631h1v1h-1z M797,631h1v1h-1z M798,631h1v1h-1z M799,631h1v1h-1z M800,631h1v1h-1z M801,631h1v1h-1z M791,632h1v1h-1z M792,632h1v1h-1z M793,632h1v1h-1z M794,632h1v1h-1z M795,632h1v1h-1z M798,632h1v1h-1z M799,632h1v1h-1z M800,632h1v1h-1z M801,632h1v1h-1z M802,632h1v1h-1z M791,633h1v1h-1z M792,633h1v1h-1z M793,633h1v1h-1z M794,633h1v1h-1z M798,633h1v1h-1z M799,633h1v1h-1z M800,633h1v1h-1z M801,633h1v1h-1z M802,633h1v1h-1z M791,634h1v1h-1z M792,634h1v1h-1z M793,634h1v1h-1z M794,634h1v1h-1z M798,634h1v1h-1z M799,634h1v1h-1z M800,634h1v1h-1z M801,634h1v1h-1z M802,634h1v1h-1z M791,635h1v1h-1z M792,635h1v1h-1z M793,635h1v1h-1z M799,635h1v1h-1z M800,635h1v1h-1z M801,635h1v1h-1z M802,635h1v1h-1z M800,636h1v1h-1z M801,636h1v1h-1z M802,636h1v1h-1z M803,636h1v1h-1z M804,636h1v1h-1z M805,636h1v1h-1z M800,637h1v1h-1z M801,637h1v1h-1z M802,637h1v1h-1z M803,637h1v1h-1z M804,637h1v1h-1z M805,637h1v1h-1z M796,638h1v1h-1z M800,638h1v1h-1z M801,638h1v1h-1z M802,638h1v1h-1z M803,638h1v1h-1z M804,638h1v1h-1z M805,638h1v1h-1z M796,639h1v1h-1z M797,639h1v1h-1z M800,639h1v1h-1z M801,639h1v1h-1z M802,639h1v1h-1z M803,639h1v1h-1z M804,639h1v1h-1z M805,639h1v1h-1z M794,640h1v1h-1z M795,640h1v1h-1z M796,640h1v1h-1z M797,640h1v1h-1z M798,640h1v1h-1z M799,640h1v1h-1z M800,640h1v1h-1z M801,640h1v1h-1z M802,640h1v1h-1z M803,640h1v1h-1z M804,640h1v1h-1z M805,640h1v1h-1z M794,641h1v1h-1z M795,641h1v1h-1z M796,641h1v1h-1z M797,641h1v1h-1z M798,641h1v1h-1z M799,641h1v1h-1z M800,641h1v1h-1z M801,641h1v1h-1z M802,641h1v1h-1z M803,641h1v1h-1z M804,641h1v1h-1z M805,641h1v1h-1z M793,642h1v1h-1z M794,642h1v1h-1z M795,642h1v1h-1z M796,642h1v1h-1z M797,642h1v1h-1z M798,642h1v1h-1z M799,642h1v1h-1z M800,642h1v1h-1z M801,642h1v1h-1z M802,642h1v1h-1z M803,642h1v1h-1z M804,642h1v1h-1z M805,642h1v1h-1z M793,643h1v1h-1z M794,643h1v1h-1z M795,643h1v1h-1z M798,643h1v1h-1z M799,643h1v1h-1z M803,643h1v1h-1z M804,643h1v1h-1z M805,643h1v1h-1z M794,644h1v1h-1z M804,644h1v1h-1z M805,644h1v1h-1z M804,645h1v1h-1z M805,645h1v1h-1z M804,646h1v1h-1z M805,646h1v1h-1z M798,647h1v1h-1z M799,647h1v1h-1z M800,647h1v1h-1z M801,647h1v1h-1z M802,647h1v1h-1z M804,647h1v1h-1z M805,647h1v1h-1z M798,648h1v1h-1z M799,648h1v1h-1z M800,648h1v1h-1z M801,648h1v1h-1z M802,648h1v1h-1z M805,648h1v1h-1z M798,649h1v1h-1z M799,649h1v1h-1z M800,649h1v1h-1z M801,649h1v1h-1z M802,649h1v1h-1z M799,650h1v1h-1z M800,650h1v1h-1z M801,650h1v1h-1z M802,650h1v1h-1z M805,650h1v1h-1z M800,651h1v1h-1z M801,651h1v1h-1z M805,651h1v1h-1z" fill="#000" shape-rendering="crispEdges"/>
<path d="M249.3,678.4 L253.7,691.7 L252.3,702.0 L243.4,713.9 L225.7,730.0 M228.0,662.0 L236.0,662.0 M242.0,663.6 L249.0,662.0 M258.0,660.7 L266.0,662.0 M275.0,663.0 L282.0,663.6" fill="none" stroke="#000" stroke-width="1.2" stroke-dasharray="6 3"/>
<path d="M15.5,719.4 L25.3,715.9 L33.8,720.0 L39.4,722.2 L33.8,727.8 L29.5,729.2 L21.1,725.0 L15.5,720.8Z" fill="#5d514d" stroke="#000" stroke-width="1"/>
<path d="M372.0,651.0 L374.5,634.0 L377.0,631.4 L380.6,638.8 L388.0,638.8 L396.7,643.7 L389.3,647.4 L377.0,651.0Z M356.0,650.0 L358.0,642.0 L362.0,645.0 L364.0,652.0Z M418.8,646.2 L426.2,638.8 L431.0,641.3 L443.4,641.3 L453.3,641.3 L454.5,647.4 L436.0,647.4Z M474.2,656.0 L478.0,658.5 L487.8,653.6 L497.6,653.6 L492.7,663.4 L502.6,675.8 L507.5,680.7 L497.6,675.8 L482.9,668.4 L474.2,661.0Z" fill="#004466" stroke="#000" stroke-width="1"/>
<path d="M806.0,585.0 L803.0,590.0 L802.0,620.0 L803.0,650.0 L806.0,652.0Z" fill="#004466" stroke="#000" stroke-width="1.3"/>
<path d="M299.3,59.5 L300.8,57.8 L303.3,57.3 L306.2,56.4 L308.0,56.2 L311.0,57.0 L312.0,58.5 L314.8,58.5 L316.2,61.8 L316.8,63.5 L316.6,65.0 L318.6,66.7 L318.5,67.4 L319.3,70.2 L321.0,72.8 L321.0,74.4 L319.7,76.6 L319.5,77.4 L319.0,80.5 L318.4,83.3 L317.7,84.8 L320.3,86.2 L320.1,89.3 L320.7,90.6 L321.7,93.2 L323.7,94.0 L323.2,95.6 L322.5,95.3 L320.1,93.0 L319.8,91.4 L318.4,89.8 L317.4,88.0 L315.4,85.7 L314.2,83.6 L312.8,81.5 L310.8,79.4 L311.2,78.3 L310.5,75.2 L310.6,74.8 L310.5,72.7 L310.1,70.8 L308.9,67.8 L308.8,65.6 L308.6,64.7 L306.7,63.7 L304.8,63.2 L301.7,62.8 L301.2,61.6Z" fill="#2a4a6a" stroke="#16283a" stroke-width="1"/>
<path d="M369.3,260.7 L372.5,259.9 L374.0,260.7 L376.3,261.8 L377.2,260.7 L380.7,261.9 L382.5,262.2 L383.9,264.8 L385.5,266.5 L388.8,265.9 L389.1,268.1 L392.4,269.1 L392.4,270.5 L393.6,271.4 L395.9,273.3 L397.0,274.1 L398.4,275.9 L396.1,275.0 L394.7,276.1 L392.3,274.2 L391.0,274.3 L387.2,272.1 L386.4,271.6 L384.9,269.8 L382.7,269.7 L379.6,268.8 L378.8,268.7 L376.0,267.5 L373.1,266.2 L372.6,265.8 L370.7,264.1 L371.1,262.3Z" fill="#2a4a6a" stroke="#16283a" stroke-width="1"/>
<path d="M614.2,284.9 L614.7,288.4 L617.2,287.4 L618.7,289.9 L615.7,291.8 L615.7,294.3 L621.0,295.0 L620.6,286.4 L623.6,291.3 L627.5,293.3 L623.6,296.3 L623.1,299.7 L619.6,302.7 L615.7,307.6 L615.7,310.5 L610.8,312.0 L607.8,313.5 L604.4,306.6 L609.3,304.6 L612.7,303.6 L615.2,299.7 L612.3,296.7 L612.3,292.8 L612.7,288.4Z" fill="#2a4a6a" stroke="#16283a" stroke-width="1"/>
<path d="M438.5,378.1 L440.0,376.2 L441.8,373.1 L441.8,372.7 L443.5,369.5 L446.5,368.4 L447.7,367.0 L448.8,364.8 L450.3,364.7 L451.0,366.5 L452.3,367.1 L451.3,369.8 L449.2,370.3 L449.1,372.7 L447.6,375.2 L446.4,376.8 L444.1,377.9 L442.6,379.5 L441.8,379.2Z" fill="#2a4a6a" stroke="#16283a" stroke-width="1"/>
<path d="M423.5,412.2 L426.8,413.3 L426.6,415.8 L428.8,418.6 L429.0,419.4 L429.1,421.6 L429.3,423.2 L430.4,426.9 L432.7,428.6 L432.9,429.4 L432.3,432.3 L433.5,434.7 L431.8,432.7 L429.2,433.3 L428.3,430.1 L427.4,427.7 L427.6,427.0 L426.1,423.6 L425.8,422.1 L424.8,420.7 L423.0,417.8 L423.7,415.4Z" fill="#2a4a6a" stroke="#16283a" stroke-width="1"/>
<path d="M526.2,501.5 L528.6,503.9 L530.5,505.8 L529.7,506.9 L532.1,509.3 L532.6,510.2 L532.3,512.5 L533.1,515.1 L532.3,516.6 L533.1,520.1 L534.4,520.7 L534.7,522.8 L534.7,525.0 L533.7,528.6 L534.4,529.4 L535.8,532.9 L534.2,535.3 L534.6,536.9 L533.7,539.5 L534.5,541.8 L534.8,542.6 L531.7,540.8 L529.3,539.1 L529.3,538.1 L528.4,536.1 L528.8,533.2 L529.5,531.4 L528.2,529.2 L528.7,526.3 L529.0,524.0 L528.1,523.5 L526.2,521.3 L526.4,518.7 L525.3,515.5 L525.2,515.2 L524.8,512.7 L525.9,510.9 L524.9,507.5 L525.5,506.1 L525.0,503.7Z" fill="#2a4a6a" stroke="#16283a" stroke-width="1"/>
<path d="M541.6,604.6 L543.3,603.2 L544.7,603.7 L547.9,603.5 L549.0,605.3 L550.0,607.1 L552.2,608.1 L553.1,610.4 L554.1,609.1 L557.1,607.5 L558.9,607.4 L560.7,605.7 L559.9,608.6 L561.9,609.9 L561.2,611.4 L560.8,613.1 L559.9,615.2 L556.9,616.8 L555.7,618.9 L554.8,618.2 L552.3,618.8 L550.6,619.6 L547.1,618.5 L546.2,618.6 L544.9,616.4 L544.3,615.6 L541.5,614.1 L540.6,611.4 L541.0,609.3 L540.4,608.7 L541.4,605.0Z" fill="#2a4a6a" stroke="#16283a" stroke-width="1"/>
<path d="M120.6,654.3 L123.1,653.1 L124.6,652.7 L125.4,652.0 L127.1,650.9 L129.1,650.7 L131.8,652.7 L133.2,651.9 L136.3,653.9 L136.7,654.8 L138.0,656.1 L138.2,658.6 L137.3,660.2 L136.1,663.4 L134.4,664.7 L133.8,666.0 L132.1,667.1 L129.1,667.2 L128.4,667.4 L125.6,667.4 L123.9,666.6 L123.3,665.7 L120.8,663.8 L120.1,662.8 L120.8,659.2 L121.6,656.6Z" fill="#2a4a6a" stroke="#16283a" stroke-width="1"/>
<path d="M41.5,681.9 L43.3,681.1 L45.2,679.8 L49.0,679.4 L49.6,681.9 L50.6,684.0 L51.4,686.7 L50.2,687.5 L49.0,689.5 L47.8,690.1 L45.8,687.9 L43.5,689.0 L42.5,685.9 L42.4,683.7Z" fill="#2a4a6a" stroke="#16283a" stroke-width="1"/>
<path d="M56.9,684.7 L57.3,687.5 L58.0,688.5 L60.8,689.4 L61.1,692.2 L60.8,693.8 L62.9,695.9 L63.7,697.3 L63.5,699.2 L66.0,702.2 L68.2,703.2 L69.8,704.5 L71.2,703.8 L74.3,704.9 L75.8,703.8 L77.5,704.2 L79.6,705.6 L81.4,707.3 L84.8,707.1 L81.8,709.0 L79.0,709.8 L78.8,708.9 L76.2,708.6 L74.2,709.8 L71.4,707.7 L69.2,708.4 L67.0,707.2 L66.4,707.6 L64.6,705.4 L63.5,703.6 L61.8,702.5 L60.2,702.9 L58.6,700.1 L59.2,697.3 L58.0,697.0 L59.0,693.2 L58.2,692.7 L57.0,689.7 L56.3,687.0Z" fill="#2a4a6a" stroke="#16283a" stroke-width="1"/>
<path d="M142.1,697.9 L144.2,696.4 L146.6,696.6 L148.3,694.3 L150.0,696.3 L151.5,699.2 L155.0,699.1 L154.2,702.2 L152.8,703.6 L152.8,705.9 L152.4,708.3 L149.8,710.0 L150.0,711.9 L147.7,711.6 L145.0,713.3 L145.2,712.3 L142.4,712.1 L140.6,710.1 L141.0,707.1 L141.5,706.7 L140.8,703.4 L141.5,701.1 L141.8,700.6Z" fill="#2a4a6a" stroke="#16283a" stroke-width="1"/>
<path d="M783.5,730.1 L785.7,731.9 L786.2,734.2 L786.8,736.0 L789.0,738.6 L789.2,739.6 L790.6,742.2 L793.2,742.3 L795.2,745.7 L795.9,746.6 L796.3,747.0 L796.4,749.5 L795.0,752.2 L794.1,754.9 L792.5,755.0 L790.4,753.9 L788.0,753.3 L787.1,750.4 L787.4,749.6 L786.3,746.8 L784.4,743.7 L783.6,741.1 L784.5,739.8 L784.6,737.8 L784.7,736.7 L782.7,733.4 L784.5,731.9Z" fill="#2a4a6a" stroke="#16283a" stroke-width="1"/>
<path d="M786.0,654.6 L783.6,664.5 L787.3,676.8 L792.2,686.7 L793.4,701.4 L791.0,710.0 L789.7,718.7 L784.8,730.0" fill="none" stroke="#000" stroke-width="4"/>
<path d="M786.0,654.6 L783.6,664.5 L787.3,676.8 L792.2,686.7 L793.4,701.4 L791.0,710.0 L789.7,718.7 L784.8,730.0" fill="none" stroke="#004466" stroke-width="2"/>
<path d="M193.0,6.0 L199.3,32.0 L201.0,64.0 L199.3,96.0 L189.7,112.0 L176.9,147.0 L167.3,179.0 L154.5,198.6 L148.0,211.4 L151.2,224.2 L165.7,230.6 L167.3,260.0 L172.4,305.4 L175.0,344.8 L172.4,400.0 L157.6,439.4 L147.8,474.0 L138.0,498.5 L130.5,533.0 L126.0,599.0 L126.0,634.6 L130.0,640.5 L136.0,654.3 L132.0,676.0 M228.0,6.4 L234.5,9.6 L241.0,8.0 L257.0,25.6 L263.0,48.0 L266.6,57.7 L292.0,57.7 L300.0,52.8 L312.8,59.2 L332.0,70.4 L357.6,88.0 L380.0,108.9 L396.0,120.0 L404.0,134.5 L418.5,150.5 L437.7,169.7 L447.3,189.0 L472.9,217.7 L485.7,233.7 L505.0,240.0 M505.0,240.0 L524.0,237.0 L543.4,221.0 L560.0,198.5 L576.0,179.3 L592.0,160.0 L614.4,147.2 L640.0,148.8 L662.4,140.8 L688.0,124.8 L720.0,105.6 L752.0,89.6 L784.0,80.0 L806.5,72.0 M614.4,147.2 L598.4,128.0 L590.4,110.4 L604.8,96.0 L601.6,80.0 L604.8,51.2 L595.2,38.4 L585.6,22.4 L588.8,6.4 M473.0,9.6 L469.7,35.2 L457.0,54.4 L434.5,60.8 L428.0,80.0 L418.5,102.5 L408.9,118.5 L404.0,134.5 L399.3,173.0 L396.0,208.0 L397.7,260.0 L400.0,300.0 L403.6,366.4 L406.0,389.8 L420.0,427.3 L434.0,464.7 L438.8,474.0 M5.0,256.0 L49.3,251.0 L98.5,241.4 L132.0,230.6 L164.0,229.0 L196.0,211.4 L234.5,189.0 L266.6,176.0 L298.6,169.8 L330.6,163.4 L364.0,147.3 L389.7,137.7 L404.0,134.5 L444.0,131.3 L492.0,137.7 L517.7,137.7 L543.4,153.7 L560.0,157.0 L592.0,160.0 M659.0,141.0 L672.0,153.7 L681.6,169.7 L688.0,185.7 L700.8,190.5 L736.0,182.5 L768.0,177.7 L810.0,172.9 M717.0,189.0 L726.5,205.0 L739.0,217.7 L755.0,230.5 L765.0,249.7 M765.0,230.5 L784.0,224.0 L810.0,221.0 M505.0,240.0 L523.0,256.0 L548.0,295.7 L577.4,340.0 L582.0,348.0 M582.0,347.0 L626.5,317.5 L682.0,284.3 L733.6,256.6 L759.4,241.8 L804.0,221.8 M406.0,371.0 L443.4,364.0 L456.0,362.8 L523.0,354.9 L577.4,350.0 L595.0,350.8 L670.8,367.4 L752.0,371.0 L806.0,339.0 M410.7,361.7 L457.5,324.3 L499.6,268.0 L505.0,240.0 M5.0,464.0 L49.3,469.0 L98.5,474.0 L147.8,476.4 L200.0,476.4 L256.0,474.0 L284.3,464.7 L317.0,427.3 L354.5,401.5 L396.6,380.4 L406.0,371.0 M256.0,474.0 L237.5,511.5 L214.0,567.7 L207.0,597.0 L192.0,631.5 L182.3,656.0 M6.0,661.0 L15.8,660.2 L39.4,652.3 L69.0,643.4 L86.7,646.4 L92.6,656.3 L104.4,668.0 L118.2,672.0 L134.0,676.0 L147.8,681.9 L159.6,685.8 L173.4,674.0 L185.2,658.2 L195.0,634.6 L200.0,618.8 M200.0,654.3 L207.0,656.0 L246.3,646.3 L285.7,641.4 L315.3,626.6 L344.8,631.5 L400.0,626.6 L459.0,626.6 L523.0,631.5 L582.3,636.5 L646.4,636.5 L705.5,646.3 L744.8,661.0 L778.4,652.3 L799.0,651.0 M325.0,636.5 L331.0,620.0 L340.4,595.8 L377.9,567.7 L401.3,549.0 L424.7,506.9 L438.8,474.0 M584.0,352.4 L565.0,380.4 L531.0,420.0 L510.0,440.0 L481.0,460.0 L460.0,471.7 L438.8,474.0 M586.0,358.0 L609.0,400.0 L628.0,421.7 L633.4,432.5 L630.6,454.2 L630.6,503.0 L638.8,530.0 L649.6,551.8 L655.0,584.3 L658.3,592.3 L665.7,610.8 L681.7,639.0 L699.0,654.0 L711.3,663.7 L718.3,684.2 L720.8,696.5 L725.7,706.4 L733.0,718.7 L740.5,729.6 L745.4,743.0 L747.9,759.0 L752.8,776.4 L755.3,791.7 L756.0,806.0 M633.4,427.0 L647.0,440.7 L671.3,454.2 L703.8,465.0 L750.0,471.8 L806.0,480.0 M803.5,549.0 L799.0,575.5 L787.3,608.0 L784.3,637.5 L781.4,652.3 L799.0,670.0 L805.0,693.7 M737.0,254.8 L766.8,277.0 L803.7,306.5 M761.0,240.0 L770.5,280.6 M582.0,347.0 L582.0,295.0 L575.0,270.0 M86.7,646.4 L98.5,641.5 L130.0,640.5 L149.8,641.5 L171.4,652.3 L185.2,656.3 L200.0,654.3 M6.0,614.9 L11.8,622.8 L13.8,646.4 L15.8,660.2" fill="none" stroke="#84741c" stroke-width="1" stroke-linejoin="round" shape-rendering="crispEdges"/>
<ellipse cx="783" cy="655" rx="5" ry="10" fill="none" stroke="#84741c" stroke-width="1"/>
<ellipse cx="585" cy="348" rx="10" ry="14" fill="none" stroke="#84741c" stroke-width="1"/>
<ellipse cx="401.6" cy="132.8" rx="36" ry="33.7" fill="none" stroke="#84741c" stroke-width="1.1"/>
<path d="M200.3,6.5 L200.9,7.4 L203.4,7.9 L205.2,8.5 L205.2,9.6 L204.0,10.9 L202.9,12.3 L202.6,13.4 L203.0,14.4 L203.8,15.2 L204.7,16.1 L205.5,16.9 L206.2,17.8 L206.7,19.2 L206.5,20.3 L206.3,21.3 L205.9,22.2 L205.3,23.2 L204.7,24.1 L204.0,24.9 L203.3,25.8 L202.8,26.8 L202.7,27.8 L203.0,28.9 L203.4,30.1 L203.7,31.2 L203.4,31.5 L203.5,32.7 L203.4,33.9 L203.2,35.2 L203.3,36.3 L203.6,37.3 L204.1,38.3 L204.8,39.1 L205.4,39.9 L206.1,40.8 L206.7,41.7 L207.3,42.5 L207.9,43.4 L208.5,44.3 L209.2,45.1 L210.1,45.9 L211.1,46.5 L212.1,46.9 L213.2,47.3 L214.1,48.0 L214.2,49.2 L213.4,51.1 L212.1,53.3 L211.5,55.0 L212.9,55.3 L215.9,54.4 L218.7,53.7 L219.2,54.6 L217.5,57.2 L215.6,59.8 L220.1,62.4 L220.3,60.4 L220.1,57.4 L220.1,54.9 L220.7,53.7 L221.9,53.9 L223.5,54.9 L225.3,56.2 L227.0,57.4 L228.5,58.0 L224.6,55.6 L225.9,56.3 L228.3,56.7 L230.9,57.1 L232.5,57.7 L231.9,59.1 L229.5,61.0 L227.7,62.7 L228.5,63.6 L231.3,64.1 L233.1,65.5 L232.7,66.5 L230.4,67.0 L228.3,67.6 L227.7,68.5 L228.4,69.7 L229.4,71.0 L230.2,72.2 L230.5,73.4 L230.4,74.4 L230.0,75.4 L229.5,76.3 L229.0,76.5 L229.3,77.6 L229.6,78.7 L230.0,79.8 L230.3,80.8 L230.6,81.9 L230.9,83.0 L230.2,83.9 L229.6,84.8 L229.0,85.7 L228.6,86.8 L228.5,87.9 L228.7,89.1 L229.0,90.4 L229.0,91.5 L228.3,92.9 L227.1,93.2 L225.9,93.4 L224.7,93.7 L223.7,94.2 L223.0,95.0 L222.5,95.9 L222.1,97.0 L221.7,98.1 L220.9,99.4 L219.8,99.7 L218.6,99.9 L217.5,100.1 L216.5,100.1 L215.5,99.9 L214.5,99.3 L213.8,98.1 L213.1,96.4 L210.0,95.4 L209.0,96.1 L209.9,98.1 L211.9,100.7 L212.1,102.2 L209.0,101.5 L205.6,100.6 L209.4,101.5 L206.1,103.3 L203.6,104.4 L203.6,102.9 L205.2,99.8 L206.3,97.2 L201.8,95.9 L201.7,98.6 L201.7,101.6 L201.3,103.6 L202.1,99.3 L202.2,100.3 L201.9,101.7 L201.2,103.1 L200.3,104.7 L199.3,105.1 L197.9,105.8 L197.2,106.6 L197.4,107.7 L198.6,109.1 L200.4,110.6 L201.9,112.1 L202.1,113.2 L200.8,113.9 L198.5,114.5 L197.0,115.9 L196.7,117.0 L197.6,117.8 L199.2,118.5 L200.6,119.2 L201.7,120.0 L202.3,120.9 L202.6,121.8 L201.4,125.0 L200.4,125.0 L199.3,125.1 L198.3,125.2 L197.3,125.3 L196.2,125.5 L195.2,125.6 L194.2,125.7 L193.1,125.8 L192.3,125.6 L191.4,126.6 L190.5,127.5 L189.7,128.5 L189.3,130.6 L190.3,131.1 L191.6,131.5 L192.7,131.9 L193.4,132.7 L193.5,134.0 L193.5,135.4 L193.8,136.5 L194.8,136.3 L195.1,137.7 L195.4,139.0 L195.2,140.1 L194.5,140.9 L193.3,141.5 L192.0,142.0 L191.0,142.2 L189.9,142.6 L189.1,143.3 L188.7,144.4 L188.7,145.8 L188.9,147.5 L189.8,147.7 L190.2,148.8 L188.9,149.9 L186.3,151.0 L184.6,152.1 L185.8,153.2 L188.5,153.4 L190.7,152.7 L190.3,154.6 L188.6,157.8 L188.0,159.8 L189.8,159.5 L193.2,159.6 L194.4,161.7 L193.5,162.5 L191.4,162.5 L189.0,162.3 L187.1,162.3 L185.7,162.7 L186.0,162.2 L184.9,162.6 L183.9,163.0 L183.0,163.6 L182.1,164.4 L181.4,165.3 L180.7,166.4 L180.2,167.9 L179.9,169.6 L179.3,171.4 L178.6,172.8 L177.8,173.5 L176.6,173.2 L175.2,172.0 L173.7,170.6 L172.3,169.6 L169.7,171.0 L170.2,172.5 L171.1,174.3 L171.7,175.9 L171.3,175.3 L172.1,175.9 L172.7,176.8 L173.3,177.7 L173.8,178.6 L174.2,179.6 L174.8,181.2 L173.8,182.2 L172.9,183.1 L171.9,184.0 L171.0,185.1 L170.7,186.2 L170.7,187.4 L171.2,188.8 L171.5,190.1 L171.1,191.1 L170.0,192.0 L168.8,191.5 L167.8,191.9 L167.1,193.1 L166.4,194.3 L165.4,194.4 L164.1,193.8 L162.2,194.0 L161.8,194.9 L162.1,196.1 L162.8,197.3 L163.2,198.5 L163.2,199.6 L162.6,200.5 L161.4,201.5 L159.9,201.4 L158.4,201.2 L157.0,201.2 L156.0,201.6 L155.3,202.6 L155.0,204.3 L155.3,205.7 L156.3,207.2 L156.4,208.3 L155.1,208.9 L152.7,209.0 L150.3,209.2 L149.3,210.0 L150.5,213.0 L153.2,212.4 L155.6,212.0 L156.7,212.5 L156.4,213.9 L155.6,215.7 L154.7,217.6 L154.1,219.2 L153.7,220.2 L153.9,221.4 L154.3,222.6 L154.8,223.7 L156.1,220.4 L155.4,221.2 L154.7,221.9 L154.0,222.7 L153.4,223.6 L153.0,224.6 L152.8,225.9 L152.8,227.4 L153.2,229.3 L153.6,231.2 L153.6,232.7 L152.7,233.2 L150.7,232.7 L148.3,231.8 L146.6,231.5 L146.1,232.6 L146.6,234.6 L147.2,236.6 L147.7,236.9 L147.2,237.9 L145.9,238.6 L144.4,239.3 L143.3,240.1 L142.6,240.9 L142.4,241.9 L142.5,243.0 L142.8,244.1 L143.2,245.2 L142.7,246.2 L142.2,247.2 L141.4,247.9 L140.5,248.4 L139.4,248.4 L138.1,248.3 L136.9,248.4 L136.6,248.9 L135.5,249.7 L134.4,250.6 L133.3,250.4 L132.2,249.4 L131.1,248.7 L129.5,249.6 L130.2,250.8 L130.6,252.0 L130.0,252.9 L129.0,253.7 L127.9,254.4 L127.2,255.3 L126.9,256.3 L126.9,257.3 L127.2,258.3 L127.1,259.6 L127.1,260.8 L127.1,262.0 L127.0,263.2 L126.9,264.4 L126.8,265.5 L126.5,266.6 L125.9,267.6 L125.1,267.5 L123.9,268.5 L122.4,269.5 L120.9,270.5 L120.1,271.5 L120.5,272.5 L122.1,273.6 L124.3,274.7 L126.0,275.7 L126.7,276.7 L126.1,277.7 L124.9,278.7 L123.3,279.7 L121.9,280.7 L120.8,281.7 L120.1,282.7 L119.6,283.8 L119.4,284.8 L119.3,285.8 L119.3,286.8 L119.4,287.8 L121.2,286.0 L120.5,287.1 L120.2,288.6 L120.2,290.6 L120.3,292.8 L120.2,294.7 L119.2,295.2 L117.4,293.9 L114.5,293.2 L112.8,293.2 L113.3,294.8 L115.1,297.3 L116.0,299.0 L114.6,299.3 L111.9,298.7 L110.9,297.8 L110.3,299.0 L110.2,301.3 L109.9,303.1 L109.0,303.7 L107.6,303.5 L106.2,303.0 L104.8,302.6 L103.6,302.7 L102.2,303.4 L101.6,304.3 L101.3,305.4 L101.0,306.6 L100.7,307.8 L100.3,308.8 L99.7,308.5 L99.4,309.8 L99.0,311.2 L99.0,312.4 L99.8,313.4 L101.1,314.2 L101.7,316.1 L100.8,316.7 L99.5,316.9 L98.2,317.1 L97.2,317.6 L96.6,318.5 L96.1,319.5 L95.7,320.6 L95.3,321.6 L94.8,322.6 L94.3,323.5 L93.7,324.4 L93.1,325.3 L92.4,326.1 L91.8,326.9 L91.4,327.5 L91.0,328.5 L90.6,329.4 L90.2,330.4 L89.7,331.2 L88.8,331.9 L87.6,332.2 L85.9,332.3 L83.8,334.3 L83.5,335.9 L84.7,336.5 L87.2,336.1 L90.0,335.6 L91.5,336.0 L91.1,337.6 L89.7,339.7 L87.2,339.7 L85.6,340.1 L85.2,341.2 L85.7,342.7 L86.6,344.4 L87.6,346.1 L88.4,347.7 L88.9,349.2 L88.1,351.4 L87.1,351.9 L85.5,351.8 L83.4,351.1 L81.0,350.2 L79.3,349.9 L79.0,351.1 L80.3,353.8 L81.6,356.6 L80.9,357.4 L78.0,356.0 L75.3,354.9 L74.8,357.0 L77.7,359.2 L78.4,360.6 L76.1,361.1 L73.5,361.4 L72.6,362.4 L73.3,364.8 L75.0,365.1 L76.4,365.7 L77.4,366.4 L77.9,367.4 L78.2,368.5 L78.4,369.6 L78.5,370.8 L78.6,372.0 L78.7,373.1 L79.0,374.2 L79.2,375.2 L79.6,376.2 L80.1,377.0 L80.9,377.7 L81.8,378.3 L82.9,378.8 L84.0,380.1 L83.7,381.2 L82.9,382.2 L81.9,383.0 L81.0,383.9 L80.3,385.0 L80.1,386.7 L80.8,387.7 L81.5,388.7 L82.2,389.7 L82.9,390.7 L83.5,391.7 L84.0,393.4 L83.8,394.4 L83.5,395.4 L83.3,396.4 L83.1,397.4 L82.9,398.4 L82.6,399.4 L82.0,400.2 L81.0,400.8 L79.3,401.2 L77.3,402.4 L76.4,403.6 L77.0,404.5 L79.3,405.0 L82.1,405.3 L83.0,406.1 L81.3,407.6 L78.5,409.3 L77.4,410.7 L79.5,410.0 L81.9,412.5 L83.2,414.4 L82.3,415.1 L79.7,415.1 L77.0,415.0 L75.0,415.2 L74.2,416.0 L74.4,417.4 L75.4,420.6 L77.5,420.3 L79.6,420.0 L81.2,420.0 L81.9,420.7 L81.5,422.3 L80.2,424.5 L78.8,426.8 L78.6,428.2 L80.3,428.2 L83.2,427.3 L86.1,429.1 L85.6,430.0 L82.9,430.5 L80.3,431.0 L79.6,431.9 L80.8,433.2 L82.5,434.6 L83.7,435.9 L83.9,437.0 L83.4,437.9 L82.6,438.8 L81.8,439.7 L81.0,440.3 L81.3,441.4 L81.6,442.3 L82.0,443.3 L82.4,444.2 L82.9,445.1 L83.3,446.1 L83.7,447.0 L84.1,448.0 L84.5,448.9 L85.0,449.8 L85.6,450.7 L86.3,450.7 L86.4,451.9 L86.5,453.0 L86.6,454.1 L86.4,455.1 L85.7,456.0 L84.7,456.7 L83.8,457.4 L83.0,458.2 L82.6,459.1 L82.6,460.2 L82.8,461.5 L83.9,461.4 L85.1,461.5 L86.2,461.6 L87.2,462.0 L88.1,462.4 L88.9,463.0 L89.7,463.9 L90.3,464.9 L90.7,466.0 L90.8,467.5 L91.1,468.7 L92.1,469.3 L93.9,469.0 L96.3,468.2 L97.7,468.3 L97.2,470.4 L95.3,471.8 L94.5,472.9 L97.1,473.9 L100.2,475.0 L100.1,476.0 L96.9,477.1 L95.5,475.5 L94.8,476.3 L95.4,479.0 L96.2,481.8 L96.2,483.5 L95.3,484.0 L93.7,483.7 L91.9,483.0 L90.1,482.4 L88.5,482.0 L87.6,481.5 L86.4,481.5 L85.5,482.0 L84.8,483.0 L84.4,484.5 L84.3,486.5 L84.2,488.7 L84.0,490.5 L83.2,491.2 L82.7,488.1 L80.7,489.7 L78.9,491.3 L78.5,492.5 L79.7,493.3 L81.8,493.9 L83.7,494.5 L84.9,495.4 L84.5,495.2 L85.1,496.4 L85.5,497.6 L86.0,498.8 L86.6,499.9 L87.2,501.3 L86.3,502.0 L85.5,502.7 L84.6,503.4 L83.6,504.0 L82.7,504.7 L81.7,505.2 L80.7,505.9 L79.9,506.6 L79.3,507.6 L79.0,508.8 L78.7,510.2 L78.2,511.2 L77.2,511.8 L75.8,511.9 L74.5,512.3 L73.9,513.2 L73.7,514.6 L73.5,515.9 L72.7,516.8 L71.5,517.1 L70.1,517.2 L68.8,517.6 L68.0,518.3 L67.1,519.8 L67.5,521.0 L68.1,522.2 L68.6,523.4 L68.8,524.6 L68.5,525.6 L67.5,526.5 L65.8,527.2 L64.4,527.3 L63.4,527.9 L63.8,529.4 L65.3,531.4 L66.2,533.2 L65.1,533.7 L62.3,533.2 L59.8,532.9 L59.7,534.0 L61.5,536.3 L63.1,538.5 L63.1,539.6 L61.2,539.9 L58.7,539.3 L56.5,539.0 L55.1,539.3 L54.2,539.9 L53.7,540.9 L53.4,542.0 L53.1,543.0 L52.8,544.1 L52.6,545.2 L52.0,546.8 L52.3,548.0 L52.8,549.2 L53.4,550.5 L54.2,551.8 L54.9,553.1 L55.3,554.3 L54.9,555.3 L53.4,556.0 L51.2,556.6 L48.9,557.1 L47.6,557.9 L47.8,559.1 L49.2,560.5 L50.7,562.0 L51.7,563.4 L51.6,565.1 L50.9,565.9 L49.8,566.5 L48.6,567.1 L47.5,567.7 L46.5,568.3 L45.6,569.1 L44.9,569.9 L44.2,570.7 L43.5,572.3 L43.6,573.3 L43.9,574.4 L44.5,575.4 L45.3,576.5 L46.0,577.5 L46.2,578.5 L45.7,579.6 L44.8,580.6 L44.1,581.7 L44.5,582.7 L45.5,583.8 L46.1,584.8 L45.5,585.8 L44.5,586.9 L44.1,588.0 L44.7,589.0 L45.6,590.0 L46.2,591.1 L46.1,592.2 L45.1,593.2 M6.0,105.0 L154.5,105.0 L161.0,112.0 L161.0,122.0 L148.0,134.5 L138.4,149.0 L190.0,149.0 M209.0,104.0 L311.0,104.0 L310.0,90.0 L324.0,93.0 L420.0,90.6 L560.0,95.4 L636.8,96.0 L787.0,95.0 L810.0,97.6 M234.5,40.3 L235.5,40.1 L236.6,39.8 L237.6,39.9 L238.7,40.2 L239.7,40.2 L240.8,40.0 L241.8,39.8 L242.8,39.8 L243.9,39.9 L244.9,40.1 L246.0,40.3 L246.9,40.2 L247.9,40.5 L248.9,40.7 L249.9,40.9 L250.9,41.2 L251.8,41.6 L252.6,42.2 L253.4,42.9 L254.3,43.5 L255.3,43.7 L256.4,43.7 L257.5,43.7 L258.3,44.2 L259.1,45.1 L259.8,45.9 L260.8,46.1 L262.0,46.0 L263.1,45.9 L264.0,46.2 L264.8,47.0 L265.6,47.8 L266.3,48.6 L267.2,49.2 L268.2,49.6 L269.2,49.8 L270.3,50.0 L271.4,50.2 L272.5,50.3 L273.6,50.6 L274.5,51.0 L275.4,51.7 L275.8,52.6 L276.9,52.2 L278.0,51.8 L278.6,50.9 L278.7,49.6 L278.7,48.3 L279.3,47.5 L280.8,47.3 L282.0,47.0 L282.2,45.8 L281.9,45.0 L281.6,44.0 L282.3,42.8 L282.6,41.6 L281.8,40.8 L280.7,40.0 L280.2,39.1 L280.4,38.0 L280.8,36.8 L280.8,35.7 L280.3,34.8 L279.5,34.0 L278.8,33.1 L278.5,31.8 L279.2,30.9 L280.2,30.1 L280.8,29.2 L281.0,28.1 L281.0,26.9 L281.4,25.8 L282.2,25.0 L282.7,24.4 L283.6,23.8 L284.5,23.1 L285.5,22.9 L286.7,23.0 L287.7,22.7 L288.6,22.2 L289.5,21.7 L290.6,21.4 L291.6,21.4 L292.7,21.2 L293.7,20.9 L294.6,20.5 L295.6,20.0 L296.5,19.6 L297.5,19.3 L298.5,19.0 L299.6,18.7 L300.7,18.4 L301.8,18.2 L302.9,18.0 L303.9,17.8 L305.0,17.4 L306.0,16.8 L306.9,16.1 L307.6,15.9 L308.0,14.9 L308.7,14.0 L309.4,13.1 L309.6,12.1 L309.4,11.0 L309.2,9.8 L309.6,8.8 L310.4,8.0 L311.2,7.2 L311.0,6.0 M636.9,96.3 L637.7,95.6 L638.5,94.8 L639.5,94.4 L640.6,94.3 L641.5,93.9 L642.3,93.2 L643.0,92.4 L643.9,91.8 L644.9,91.5 L646.0,91.4 L647.1,91.2 L648.0,90.8 L648.8,90.1 L649.6,89.3 L650.3,88.5 L651.1,87.8 L652.1,87.4 L653.2,87.4 L654.4,87.4 L655.4,87.2 L656.1,86.4 L656.9,85.4 L657.7,84.7 L658.8,84.7 L660.0,85.3 L661.1,85.6 L662.0,85.0 L662.8,84.0 L663.6,83.1 L664.5,82.8 L665.7,83.1 L666.8,83.5 L667.9,83.7 L668.9,83.5 L669.9,83.2 L670.7,82.6 L671.6,82.0 L672.5,81.4 L673.4,80.8 L674.3,80.3 L675.2,79.9 L676.2,79.8 L677.3,79.8 L678.4,80.1 L679.6,79.9 L680.5,79.5 L681.1,78.7 L681.6,77.5 L682.2,76.6 L683.2,76.3 L684.5,76.4 L685.4,76.0 L685.9,74.9 L686.4,73.9 L687.4,73.5 L688.6,73.5 L689.5,73.1 L690.1,72.2 L690.7,71.2 L691.5,70.6 L692.5,70.3 L693.6,70.0 L694.5,69.6 L695.2,68.9 L695.9,68.1 L696.6,67.4 L697.4,66.8 L698.1,66.1 L698.9,65.3 L699.6,64.6 L700.1,63.6 L700.4,62.6 L700.9,61.7 L701.7,60.9 L702.5,60.2 L703.0,59.3 L703.3,58.3 L703.9,57.4 L704.7,56.7 L705.5,55.9 L705.9,55.0 L706.2,53.9 L706.7,53.0 L707.6,52.3 L708.4,51.6 L709.1,50.8 L709.5,49.9 L709.9,48.8 L710.4,47.7 L711.2,47.2 L712.1,46.7 L713.1,46.3 L714.0,46.0 L715.1,45.8 L716.1,45.7 L717.1,45.5 L718.1,45.3 L719.0,44.8 L719.8,44.1 L720.5,43.1 L721.2,42.3 L722.2,41.9 L723.3,42.1 L724.6,42.3 L725.6,42.1 L726.2,41.1 L726.8,39.9 L727.6,39.2 L728.7,39.2 L730.0,39.5 L731.1,39.6 L732.0,39.1 L732.7,38.3 L733.4,37.2 L734.1,36.4 L734.9,35.8 L735.9,35.6 L737.0,35.5 L738.2,35.6 L739.5,35.5 L740.4,35.0 L740.9,34.1 L741.2,32.9 L741.5,31.7 L742.3,31.0 L743.6,30.9 L744.8,30.7 L745.3,29.8 L745.5,28.4 L746.2,27.7 L747.5,27.7 L748.5,27.2 L748.8,26.0 L749.2,25.0 L750.3,24.6 L751.4,24.4 L752.1,23.6 L752.5,22.5 L753.1,21.6 L754.0,21.1 L755.0,20.7 L755.9,20.2 L756.6,19.4 L757.2,18.6 L757.8,17.7 L758.5,16.9 L759.3,16.3 L760.1,15.7 L761.0,15.2 L761.8,14.6 L762.9,14.0 L763.9,13.2 L764.9,13.0 L764.0,12.5 L763.2,11.9 L762.3,11.4 L761.3,11.1 L760.2,10.9 L759.2,10.7 L758.4,10.1 L757.5,9.5 L756.7,8.9 L755.7,8.6 L754.7,8.3 L753.6,8.2 L752.6,7.9 L751.7,7.6 L750.7,7.2 L749.8,6.7 L749.0,6.0 M761.3,14.8 L762.2,15.3 L763.4,15.6 L764.0,16.4 L764.0,17.7 L764.3,18.7 L765.3,19.2 L766.5,19.5 L767.4,20.1 L767.8,21.1 L768.0,22.3 L768.2,23.4 L768.7,24.3 L769.5,24.9 L770.5,25.4 L771.6,25.8 L772.6,26.3 L773.2,27.0 L773.5,28.1 L773.6,29.4 L773.8,30.5 L774.4,31.3 L775.6,31.6 L776.9,31.8 L777.7,32.5 L777.8,33.7 L777.7,35.0 L778.2,35.9 L779.3,36.3 L780.6,36.6 L781.5,37.2 L781.9,38.1 L782.1,39.2 L782.4,40.4 L782.8,41.3 L784.2,42.3 L785.1,41.9 L786.1,41.4 L787.0,40.8 L787.9,40.3 L788.9,39.9 L789.9,39.6 L790.9,39.3 L791.9,39.3 L793.0,39.3 L794.1,39.4 L795.1,39.3 L796.1,39.0 L797.0,38.4 L797.8,37.6 L798.7,37.3 L799.8,37.2 L800.9,36.9 L801.7,36.2 L802.5,35.4 L803.4,35.0 L804.5,34.9 L805.5,34.5 L806.3,33.9 L807.1,33.2 L808.0,32.7 L809.1,32.4 L810.0,32.0 M786.2,94.6 L786.4,95.8 L786.9,97.2 L786.4,98.0 L785.0,98.5 L784.1,99.2 L784.3,100.4 L784.8,101.7 L784.7,102.7 L783.9,103.5 L782.9,104.1 L781.9,104.8 L781.3,105.7 L781.1,106.7 L781.2,107.8 L781.4,108.8 L781.8,109.9 L781.8,110.9 L781.3,112.0 L780.6,113.1 L780.2,114.1 L780.5,115.2 L781.3,116.3 L781.7,117.3 L781.3,118.7 L780.1,118.9 L779.0,119.2 L778.4,120.1 L778.0,121.2 L777.5,122.1 L776.7,122.7 L775.7,123.2 L774.7,123.5 L773.8,124.1 L773.0,124.7 L772.2,125.4 L771.6,126.2 L770.9,127.0 L770.2,127.7 L769.5,128.5 L768.8,129.2 L768.0,129.9 L767.2,130.5 L766.3,131.1 L765.4,131.6 L764.6,132.1 L763.8,132.8 L763.1,133.6 L762.5,134.4 L761.8,135.1 L760.9,135.6 L759.9,136.1 L759.2,136.8 L758.5,137.7 L757.5,137.9 L756.4,137.6 L755.4,137.3 L754.4,137.4 L753.4,137.7 L752.3,138.0 L751.3,137.9 L750.3,137.5 L749.3,137.2 L748.2,137.2 L747.2,137.5 L746.2,137.9 L745.2,138.1 L744.1,138.0 L743.1,137.6 L742.1,137.1 L741.1,137.0 L740.0,137.6 L739.3,138.1 L738.5,138.6 L737.1,138.5 L736.0,138.6 L735.5,139.8 L735.1,141.1 L734.1,141.4 L732.6,141.0 L731.7,141.4 L731.3,142.8 L730.9,144.0 L729.8,144.3 L728.5,144.1 L727.3,144.2 L726.4,144.8 L725.8,145.8 L725.3,146.8 L724.7,147.8 L724.0,148.5 L723.1,149.1 L722.1,149.5 L721.1,149.8 L720.0,150.0 L719.4,149.1 L718.7,148.3 L717.9,147.6 L716.9,147.3 L715.7,147.2 L714.5,147.2 L713.5,146.8 L712.9,146.0 L712.4,144.9 L711.7,144.0 L710.2,143.6 L709.8,144.8 L709.3,145.7 L708.4,146.3 L707.3,146.5 L706.2,146.9 L705.4,147.5 L704.7,148.3 L704.1,149.1 L703.4,150.0 L702.7,150.7 L701.9,151.3 L700.9,151.8 L700.0,152.3 L699.1,152.8 L698.2,153.4 L697.5,154.1 L696.8,154.9 L696.1,155.7 L695.4,156.3 L694.4,156.8 L693.8,157.6 L693.3,158.6 L693.1,159.6 L692.8,160.6 L692.1,161.4 L691.4,162.2 L691.2,163.2 L691.0,164.3 L690.4,165.1 L689.6,165.9 L689.2,166.8 L689.0,167.9 L688.8,168.9 L688.0,169.9 L686.9,169.5 L685.9,169.3 L684.8,169.3 L683.7,169.6 L682.7,170.0 L681.6,170.2 L680.5,170.2 L679.5,169.8 L678.2,169.4 L677.2,169.7 L676.4,170.3 L675.9,171.4 L675.3,172.4 L674.5,172.9 L673.3,172.9 L672.0,172.8 L671.2,173.4 L670.8,174.6 L670.3,175.7 L669.4,176.2 L668.1,176.1 L666.9,176.0 L666.0,176.4 L665.3,177.3 L664.8,178.3 L664.2,179.3 L663.5,180.1 L662.7,180.6 L661.7,181.0 L660.7,181.3 L659.7,181.6 L658.7,181.8 L657.6,182.1 L656.6,182.4 L655.7,182.8 L654.9,183.4 L654.3,184.3 L653.8,185.4 L652.9,186.4 L651.9,186.6 L650.8,186.2 L649.7,185.7 L648.7,185.8 L647.8,186.7 L646.9,187.5 L645.9,187.5 L644.7,187.0 L643.7,186.9 L642.8,187.6 L641.9,188.3 L640.9,188.6 L639.8,188.4 L638.7,188.2 L637.7,188.3 L636.7,188.7 L635.9,189.5 L635.1,190.1 L634.2,190.6 L633.2,190.8 L632.1,191.1 L631.1,191.4 L630.3,191.9 L629.5,192.6 L628.6,193.2 L627.7,193.6 L626.6,193.8 L625.6,194.2 L624.8,194.9 L624.0,195.5 L623.0,195.8 L622.0,196.0 L621.1,196.5 L620.3,197.3 L619.4,197.8 L618.4,198.0 L617.3,198.2 L616.4,198.7 L615.6,199.4 L614.8,200.1 L613.9,200.7 L613.0,201.0 L611.9,201.3 L610.8,201.6 L610.3,202.6 L610.0,203.6 L609.7,204.6 L609.6,205.7 L609.6,206.8 L609.7,207.9 L609.7,209.0 L609.4,210.0 L608.7,210.9 L607.9,211.8 L607.8,212.2 L606.9,212.7 L606.1,213.7 L605.2,214.6 L604.2,214.7 L602.9,214.2 L601.8,213.9 L600.8,214.2 L600.0,215.2 L599.2,216.1 L598.3,216.8 L597.2,217.0 L596.1,216.9 L595.0,216.6 L593.8,216.5 L592.7,216.5 L591.1,217.6 L591.2,218.6 L591.6,219.7 L592.0,220.7 L592.2,221.8 L592.0,222.8 L591.3,223.7 L590.3,224.5 L590.0,225.5 L590.5,226.6 L591.2,227.7 L590.9,228.7 L589.8,229.5 L589.3,230.5 L590.0,231.6 L590.4,232.7 L589.7,233.6 L588.8,234.5 L588.9,235.5 L589.4,236.6 L589.5,237.6 L588.8,238.5 M148.0,238.6 L298.6,238.6 L493.6,238.6 L588.8,238.5 L678.4,238.5 M678.4,238.5 L739.0,220.9 L810.0,222.5 M678.1,238.3 L677.7,239.2 L677.4,240.2 L676.7,241.0 L675.8,241.6 L675.1,242.3 L674.6,243.1 L674.2,244.1 L673.6,244.9 L672.9,245.6 L672.1,246.3 L671.4,247.0 L670.7,247.7 L670.1,248.6 L669.6,249.4 L669.1,250.3 L668.6,251.2 L668.0,252.0 L667.3,252.7 L666.5,253.3 L665.7,254.0 L665.1,254.7 L664.6,255.7 L664.3,256.7 L663.8,257.6 L662.9,258.2 L661.9,258.7 L661.2,259.3 L660.8,260.3 L660.5,261.4 L660.1,261.5 L660.8,262.2 L661.3,263.2 L661.8,264.1 L662.4,265.0 L663.2,265.7 L664.0,266.2 L665.0,266.6 L665.9,267.0 L666.9,267.4 L667.9,267.8 L668.8,268.2 L669.7,268.8 L670.4,269.5 L670.9,270.4 L671.3,271.5 L671.8,272.5 L672.5,273.3 L673.6,273.5 L674.9,273.4 L676.0,273.7 L676.4,274.8 L676.5,276.2 L677.2,276.9 L678.7,276.8 L679.9,276.8 L680.3,277.8 L680.5,279.3 L681.2,280.1 L682.4,280.0 L683.7,280.1 L684.5,280.7 L684.9,281.8 L685.5,283.1 L686.5,283.4 L687.5,283.3 L688.6,282.8 L689.7,282.5 L690.7,282.7 L691.6,283.3 L692.5,284.0 L693.5,284.4 L694.5,284.3 L695.6,283.9 L697.1,284.1 L697.1,285.2 L697.1,286.4 L697.5,287.3 L698.4,288.0 L699.0,288.9 L699.0,290.0 L699.2,291.1 L699.8,292.0 L700.5,292.8 L701.0,293.7 L701.2,294.8 L701.4,295.8 L701.7,296.8 L702.2,297.7 L702.8,298.6 L703.3,299.5 L703.8,300.4 L704.2,301.3 L704.6,302.3 L705.0,303.3 L705.3,304.3 L705.6,305.3 L705.9,306.3 L706.2,307.3 L706.6,308.2 L707.2,309.1 L707.8,309.9 L708.7,310.5 L709.3,311.2 L709.8,312.1 L710.3,313.1 L710.9,313.9 L711.9,314.3 L712.9,314.7 L713.8,315.3 L714.3,316.2 L714.6,317.3 L715.1,318.2 L715.8,318.9 L716.7,319.4 L717.8,319.8 L718.8,320.2 L719.6,320.8 L720.2,321.6 L720.7,322.6 L721.0,323.6 L721.4,324.7 L722.0,325.5 L722.8,326.1 L724.0,326.3 L725.2,326.5 L726.0,327.2 L726.2,328.4 L726.2,329.8 L727.0,330.4 L728.5,330.3 L729.6,330.7 L729.6,332.1 L729.7,333.4 L730.9,333.6 L732.4,333.5 L732.9,334.5 L732.8,336.0 L733.3,336.9 L734.7,337.0 L735.9,337.1 L736.5,337.9 L736.7,339.2 L737.0,340.3 L737.6,341.1 L738.6,341.6 L739.7,341.9 L740.7,342.3 L741.6,343.0 L742.0,344.0 L742.2,345.1 L742.4,346.2 L742.9,347.1 L743.7,347.7 L744.7,348.3 L745.6,348.9 L746.0,349.9 L746.2,351.0 L746.6,352.0 L747.3,352.7 L748.3,353.3 L749.0,354.0 L749.5,355.0 L749.8,356.0 L750.3,356.9 L750.9,357.7 L751.6,358.4 L752.4,359.2 L753.0,359.9 L753.7,360.7 L754.2,361.6 L754.8,362.4 L755.3,363.3 L755.8,364.2 L756.3,365.1 L756.9,366.0 L757.4,366.9 L758.0,367.7 L758.7,368.5 L759.4,369.2 L760.2,369.9 L760.8,370.7 L761.2,371.7 L761.5,372.7 L761.9,373.7 L762.7,374.4 L763.7,375.0 L764.3,375.8 L764.4,376.9 L764.7,378.0 L765.4,378.7 L766.5,379.3 L767.3,380.0 L767.5,381.1 L767.5,382.3 L767.8,383.3 L768.5,384.1 L769.5,384.7 L770.5,385.3 L771.2,386.1 L771.4,387.1 L771.3,388.4 L771.4,389.5 L772.0,390.4 L773.2,390.9 L774.4,391.3 L774.8,392.3 L774.5,393.7 L774.4,394.9 L775.6,395.4 L777.1,395.7 L777.3,396.8 L776.8,398.3 L777.4,399.4 L778.9,399.1 L780.1,399.3 L780.5,400.5 L780.7,401.9 L781.5,402.5 L782.7,402.6 L784.0,402.6 L785.0,403.0 L785.6,403.8 L786.2,404.8 L786.7,405.8 L787.4,406.7 L788.1,407.4 L788.9,408.0 L789.9,408.4 L790.9,408.8 L791.9,409.1 L793.0,409.6 L793.6,410.5 L794.0,411.5 L794.2,412.5 L794.4,413.6 L794.9,414.5 L795.6,415.2 L796.5,415.9 L797.2,416.7 L797.5,417.7 L797.8,418.7 L798.1,419.7 L798.7,420.5 L799.5,421.3 L800.2,422.1 L800.8,422.9 L801.2,423.8 L801.7,424.8 L802.1,425.7 L802.5,426.6 L803.0,427.5 L803.5,428.3 L803.8,429.3 L804.1,430.3 L804.5,431.3 L804.8,432.3 L805.0,433.3 L804.9,434.4 L804.9,435.4 L805.1,436.4 L805.7,437.4 L806.1,438.3 L806.0,439.4 M6.0,415.0 L81.0,415.0 M298.6,238.6 L305.0,246.6 L293.0,400.0 L281.0,498.5 L283.0,597.0 L285.0,651.0 M46.8,592.0 L184.7,594.6 L182.0,612.0 L187.0,641.0 L194.6,666.0 M493.6,238.6 L498.5,276.0 L508.0,320.0 L518.0,394.0 L523.0,424.6 L528.0,449.0 L543.0,478.8 L533.0,498.5 L530.5,547.8 L531.0,580.0 L538.0,597.0 L548.0,617.0 M345.0,594.5 L538.0,594.5 M345.0,594.5 L350.0,610.0 L360.0,631.0 M545.5,619.4 L630.8,625.9 L742.0,632.3 L745.4,641.0 L746.6,651.0 L759.0,649.7 L759.0,640.0 L757.5,615.5 L765.3,610.3 L775.6,613.0 L786.0,636.0 L780.8,646.5" fill="none" stroke="#000" stroke-width="1" stroke-linejoin="round" shape-rendering="crispEdges"/>
<circle cx="406.5" cy="406.8" r="519.6" fill="none" stroke="#d4d4d4" stroke-width="1" shape-rendering="crispEdges"/>
<path d="M418.00,247.41 A159.8,159.8 0 1,1 395.00,247.41" fill="none" stroke="#d4d4d4" stroke-width="1" shape-rendering="crispEdges"/>
<path d="M418.00,127.24 A279.8,279.8 0 1,1 395.00,127.24" fill="none" stroke="#d4d4d4" stroke-width="1" shape-rendering="crispEdges"/>
<path d="M418.00,7.47 A399.5,399.5 0 1,1 395.00,7.47" fill="none" stroke="#d4d4d4" stroke-width="1" shape-rendering="crispEdges"/>
<circle cx="406.5" cy="406.8" r="39.5" fill="none" stroke="#ff0000" stroke-width="1.4"/>
<path d="M685.5,612.5a4,4 0 1,0 8,0a4,4 0 1,0 -8,0M687.0,612.5h5 M671.5,740.5a4,4 0 1,0 8,0a4,4 0 1,0 -8,0M673.0,740.5h5M675.5,738.0v5 M652.5,751.5a4,4 0 1,0 8,0a4,4 0 1,0 -8,0M654.0,751.5h5M656.5,749.0v5 M651.5,760.5a4,4 0 1,0 8,0a4,4 0 1,0 -8,0M653.0,760.5h5M655.5,758.0v5 M794.5,662.5a4,4 0 1,0 8,0a4,4 0 1,0 -8,0M796.0,662.5h5 M626.5,790.5a4,4 0 1,0 8,0a4,4 0 1,0 -8,0M628.0,790.5h5M630.5,788.0v5" fill="none" stroke="#ff6600" stroke-width="1.05"/>
<path d="M697.5,619.5a4,4 0 1,0 8,0a4,4 0 1,0 -8,0M699.0,619.5h5 M693.5,623.5a4,4 0 1,0 8,0a4,4 0 1,0 -8,0M695.0,623.5h5M697.5,621.0v5 M692.5,647.5a4,4 0 1,0 8,0a4,4 0 1,0 -8,0M694.0,647.5h5M696.5,645.0v5 M675.5,663.5a4,4 0 1,0 8,0a4,4 0 1,0 -8,0M677.0,663.5h5M679.5,661.0v5 M685.5,668.5a4,4 0 1,0 8,0a4,4 0 1,0 -8,0M687.0,668.5h5 M691.5,667.5a4,4 0 1,0 8,0a4,4 0 1,0 -8,0M693.0,667.5h5 M668.5,672.5a4,4 0 1,0 8,0a4,4 0 1,0 -8,0M670.0,672.5h5M672.5,670.0v5 M674.5,682.5a4,4 0 1,0 8,0a4,4 0 1,0 -8,0M676.0,682.5h5M678.5,680.0v5 M638.5,688.5a4,4 0 1,0 8,0a4,4 0 1,0 -8,0M640.0,688.5h5M642.5,686.0v5 M642.5,692.5a4,4 0 1,0 8,0a4,4 0 1,0 -8,0M644.0,692.5h5M646.5,690.0v5 M646.5,694.5a4,4 0 1,0 8,0a4,4 0 1,0 -8,0M648.0,694.5h5M650.5,692.0v5 M648.5,690.5a4,4 0 1,0 8,0a4,4 0 1,0 -8,0M650.0,690.5h5M652.5,688.0v5 M699.5,694.5a4,4 0 1,0 8,0a4,4 0 1,0 -8,0M701.0,694.5h5 M696.5,726.5a4,4 0 1,0 8,0a4,4 0 1,0 -8,0M698.0,726.5h5M700.5,724.0v5 M700.5,730.5a4,4 0 1,0 8,0a4,4 0 1,0 -8,0M702.0,730.5h5M704.5,728.0v5 M666.5,730.5a4,4 0 1,0 8,0a4,4 0 1,0 -8,0M668.0,730.5h5M670.5,728.0v5 M648.5,742.5a4,4 0 1,0 8,0a4,4 0 1,0 -8,0M650.0,742.5h5 M699.5,742.5a4,4 0 1,0 8,0a4,4 0 1,0 -8,0M701.0,742.5h5M703.5,740.0v5 M702.5,758.5a4,4 0 1,0 8,0a4,4 0 1,0 -8,0M704.0,758.5h5M706.5,756.0v5 M692.5,773.5a4,4 0 1,0 8,0a4,4 0 1,0 -8,0M694.0,773.5h5M696.5,771.0v5 M724.5,738.5a4,4 0 1,0 8,0a4,4 0 1,0 -8,0M726.0,738.5h5M728.5,736.0v5 M741.5,611.5a4,4 0 1,0 8,0a4,4 0 1,0 -8,0M743.0,611.5h5M745.5,609.0v5 M787.5,621.5a4,4 0 1,0 8,0a4,4 0 1,0 -8,0M789.0,621.5h5M791.5,619.0v5 M740.5,647.5a4,4 0 1,0 8,0a4,4 0 1,0 -8,0M742.0,647.5h5 M762.5,668.5a4,4 0 1,0 8,0a4,4 0 1,0 -8,0M764.0,668.5h5 M762.5,691.5a4,4 0 1,0 8,0a4,4 0 1,0 -8,0M764.0,691.5h5 M736.5,710.5a4,4 0 1,0 8,0a4,4 0 1,0 -8,0M738.0,710.5h5M740.5,708.0v5" fill="none" stroke="#ff9900" stroke-width="1.05"/>
<path d="M697.5,574.5a4,4 0 1,0 8,0a4,4 0 1,0 -8,0M699.0,574.5h5M701.5,572.0v5 M680.5,630.5a4,4 0 1,0 8,0a4,4 0 1,0 -8,0M682.0,630.5h5 M666.5,655.5a4,4 0 1,0 8,0a4,4 0 1,0 -8,0M668.0,655.5h5M670.5,653.0v5 M653.5,659.5a4,4 0 1,0 8,0a4,4 0 1,0 -8,0M655.0,659.5h5M657.5,657.0v5 M652.5,668.5a4,4 0 1,0 8,0a4,4 0 1,0 -8,0M654.0,668.5h5M656.5,666.0v5 M633.5,678.5a4,4 0 1,0 8,0a4,4 0 1,0 -8,0M635.0,678.5h5M637.5,676.0v5 M640.5,680.5a4,4 0 1,0 8,0a4,4 0 1,0 -8,0M642.0,680.5h5M644.5,678.0v5 M646.5,672.5a4,4 0 1,0 8,0a4,4 0 1,0 -8,0M648.0,672.5h5M650.5,670.0v5 M714.5,700.5a4,4 0 1,0 8,0a4,4 0 1,0 -8,0M716.0,700.5h5 M697.5,707.5a4,4 0 1,0 8,0a4,4 0 1,0 -8,0M699.0,707.5h5 M686.5,725.5a4,4 0 1,0 8,0a4,4 0 1,0 -8,0M688.0,725.5h5M690.5,723.0v5 M655.5,729.5a4,4 0 1,0 8,0a4,4 0 1,0 -8,0M657.0,729.5h5 M669.5,747.5a4,4 0 1,0 8,0a4,4 0 1,0 -8,0M671.0,747.5h5M673.5,745.0v5 M672.5,752.5a4,4 0 1,0 8,0a4,4 0 1,0 -8,0M674.0,752.5h5M676.5,750.0v5 M739.5,654.5a4,4 0 1,0 8,0a4,4 0 1,0 -8,0M741.0,654.5h5 M753.5,651.5a4,4 0 1,0 8,0a4,4 0 1,0 -8,0M755.0,651.5h5 M728.5,658.5a4,4 0 1,0 8,0a4,4 0 1,0 -8,0M730.0,658.5h5M732.5,656.0v5 M748.5,671.5a4,4 0 1,0 8,0a4,4 0 1,0 -8,0M750.0,671.5h5M752.5,669.0v5 M750.5,693.5a4,4 0 1,0 8,0a4,4 0 1,0 -8,0M752.0,693.5h5M754.5,691.0v5 M715.5,701.5a4,4 0 1,0 8,0a4,4 0 1,0 -8,0M717.0,701.5h5 M722.5,707.5a4,4 0 1,0 8,0a4,4 0 1,0 -8,0M724.0,707.5h5 M579.5,716.5a4,4 0 1,0 8,0a4,4 0 1,0 -8,0M581.0,716.5h5M583.5,714.0v5 M611.5,704.5a4,4 0 1,0 8,0a4,4 0 1,0 -8,0M613.0,704.5h5M615.5,702.0v5 M620.5,754.5a4,4 0 1,0 8,0a4,4 0 1,0 -8,0M622.0,754.5h5M624.5,752.0v5 M631.5,762.5a4,4 0 1,0 8,0a4,4 0 1,0 -8,0M633.0,762.5h5 M612.5,774.5a4,4 0 1,0 8,0a4,4 0 1,0 -8,0M614.0,774.5h5M616.5,772.0v5 M625.5,782.5a4,4 0 1,0 8,0a4,4 0 1,0 -8,0M627.0,782.5h5M629.5,780.0v5" fill="none" stroke="#ffcc00" stroke-width="1.05"/>
<path d="M746.5,541.5a4,4 0 1,0 8,0a4,4 0 1,0 -8,0M748.0,541.5h5M750.5,539.0v5 M679.5,596.5a4,4 0 1,0 8,0a4,4 0 1,0 -8,0M681.0,596.5h5M683.5,594.0v5 M704.5,615.5a4,4 0 1,0 8,0a4,4 0 1,0 -8,0M706.0,615.5h5 M699.5,626.5a4,4 0 1,0 8,0a4,4 0 1,0 -8,0M701.0,626.5h5M703.5,624.0v5 M692.5,631.5a4,4 0 1,0 8,0a4,4 0 1,0 -8,0M694.0,631.5h5 M723.5,632.5a4,4 0 1,0 8,0a4,4 0 1,0 -8,0M725.0,632.5h5 M687.5,638.5a4,4 0 1,0 8,0a4,4 0 1,0 -8,0M689.0,638.5h5 M680.5,642.5a4,4 0 1,0 8,0a4,4 0 1,0 -8,0M682.0,642.5h5M684.5,640.0v5 M687.5,645.5a4,4 0 1,0 8,0a4,4 0 1,0 -8,0M689.0,645.5h5M691.5,643.0v5 M695.5,651.5a4,4 0 1,0 8,0a4,4 0 1,0 -8,0M697.0,651.5h5M699.5,649.0v5 M665.5,667.5a4,4 0 1,0 8,0a4,4 0 1,0 -8,0M667.0,667.5h5 M659.5,669.5a4,4 0 1,0 8,0a4,4 0 1,0 -8,0M661.0,669.5h5M663.5,667.0v5 M674.5,674.5a4,4 0 1,0 8,0a4,4 0 1,0 -8,0M676.0,674.5h5M678.5,672.0v5 M648.5,674.5a4,4 0 1,0 8,0a4,4 0 1,0 -8,0M650.0,674.5h5M652.5,672.0v5 M659.5,680.5a4,4 0 1,0 8,0a4,4 0 1,0 -8,0M661.0,680.5h5M663.5,678.0v5 M646.5,680.5a4,4 0 1,0 8,0a4,4 0 1,0 -8,0M648.0,680.5h5M650.5,678.0v5 M650.5,684.5a4,4 0 1,0 8,0a4,4 0 1,0 -8,0M652.0,684.5h5M654.5,682.0v5 M648.5,686.5a4,4 0 1,0 8,0a4,4 0 1,0 -8,0M650.0,686.5h5M652.5,684.0v5 M652.5,678.5a4,4 0 1,0 8,0a4,4 0 1,0 -8,0M654.0,678.5h5M656.5,676.0v5 M644.5,676.5a4,4 0 1,0 8,0a4,4 0 1,0 -8,0M646.0,676.5h5M648.5,674.0v5 M638.5,696.5a4,4 0 1,0 8,0a4,4 0 1,0 -8,0M640.0,696.5h5M642.5,694.0v5 M618.5,704.5a4,4 0 1,0 8,0a4,4 0 1,0 -8,0M620.0,704.5h5M622.5,702.0v5 M632.5,711.5a4,4 0 1,0 8,0a4,4 0 1,0 -8,0M634.0,711.5h5M636.5,709.0v5 M695.5,714.5a4,4 0 1,0 8,0a4,4 0 1,0 -8,0M697.0,714.5h5M699.5,712.0v5 M708.5,716.5a4,4 0 1,0 8,0a4,4 0 1,0 -8,0M710.0,716.5h5M712.5,714.0v5 M712.5,726.5a4,4 0 1,0 8,0a4,4 0 1,0 -8,0M714.0,726.5h5M716.5,724.0v5 M662.5,743.5a4,4 0 1,0 8,0a4,4 0 1,0 -8,0M664.0,743.5h5M666.5,741.0v5 M679.5,748.5a4,4 0 1,0 8,0a4,4 0 1,0 -8,0M681.0,748.5h5M683.5,746.0v5 M688.5,746.5a4,4 0 1,0 8,0a4,4 0 1,0 -8,0M690.0,746.5h5M692.5,744.0v5 M647.5,772.5a4,4 0 1,0 8,0a4,4 0 1,0 -8,0M649.0,772.5h5M651.5,770.0v5 M667.5,760.5a4,4 0 1,0 8,0a4,4 0 1,0 -8,0M669.0,760.5h5M671.5,758.0v5 M664.5,769.5a4,4 0 1,0 8,0a4,4 0 1,0 -8,0M666.0,769.5h5M668.5,767.0v5 M701.5,754.5a4,4 0 1,0 8,0a4,4 0 1,0 -8,0M703.0,754.5h5M705.5,752.0v5 M719.5,739.5a4,4 0 1,0 8,0a4,4 0 1,0 -8,0M721.0,739.5h5 M759.5,661.5a4,4 0 1,0 8,0a4,4 0 1,0 -8,0M761.0,661.5h5M763.5,659.0v5 M744.5,677.5a4,4 0 1,0 8,0a4,4 0 1,0 -8,0M746.0,677.5h5 M751.5,676.5a4,4 0 1,0 8,0a4,4 0 1,0 -8,0M753.0,676.5h5M755.5,674.0v5 M733.5,682.5a4,4 0 1,0 8,0a4,4 0 1,0 -8,0M735.0,682.5h5 M735.5,693.5a4,4 0 1,0 8,0a4,4 0 1,0 -8,0M737.0,693.5h5M739.5,691.0v5 M735.5,703.5a4,4 0 1,0 8,0a4,4 0 1,0 -8,0M737.0,703.5h5M739.5,701.0v5 M795.5,672.5a4,4 0 1,0 8,0a4,4 0 1,0 -8,0M797.0,672.5h5M799.5,670.0v5 M799.5,652.5a4,4 0 1,0 8,0a4,4 0 1,0 -8,0M801.0,652.5h5 M604.5,714.5a4,4 0 1,0 8,0a4,4 0 1,0 -8,0M606.0,714.5h5M608.5,712.0v5 M610.5,706.5a4,4 0 1,0 8,0a4,4 0 1,0 -8,0M612.0,706.5h5M614.5,704.0v5 M618.5,704.5a4,4 0 1,0 8,0a4,4 0 1,0 -8,0M620.0,704.5h5M622.5,702.0v5 M614.5,779.5a4,4 0 1,0 8,0a4,4 0 1,0 -8,0M616.0,779.5h5 M631.5,794.5a4,4 0 1,0 8,0a4,4 0 1,0 -8,0M633.0,794.5h5M635.5,792.0v5" fill="none" stroke="#ffff00" stroke-width="1.05"/>
<text x="406.5" y="11.6" text-anchor="middle" style="font-family:&quot;Liberation Sans&quot;,sans-serif;font-size:10.5px" fill="#ffff99" textLength="20.4" lengthAdjust="spacingAndGlyphs">313</text>
<text x="406.5" y="131.1" text-anchor="middle" style="font-family:&quot;Liberation Sans&quot;,sans-serif;font-size:10.5px" fill="#ffff99" textLength="20.4" lengthAdjust="spacingAndGlyphs">219</text>
<text x="406.5" y="250.9" text-anchor="middle" style="font-family:&quot;Liberation Sans&quot;,sans-serif;font-size:10.5px" fill="#ffff99" textLength="20.4" lengthAdjust="spacingAndGlyphs">125</text>
<text x="406.5" y="371.1" text-anchor="middle" style="font-family:&quot;Liberation Sans&quot;,sans-serif;font-size:10.5px" fill="#ffff99" textLength="13.6" lengthAdjust="spacingAndGlyphs">31</text>
<rect x="9.5" y="759.5" width="242" height="43" fill="#000" stroke="#a0a0a0" stroke-width="1"/>
<path d="M56.5,780.5a4,4 0 1,0 8,0a4,4 0 1,0 -8,0M58,780.5h5 M82,780.5h7 M106.5,780.5a4,4 0 1,0 8,0a4,4 0 1,0 -8,0M108,780.5h5M110.5,778.0v5 M132,780.5h7M135.5,777.0v7" fill="none" stroke="#00ffff" stroke-width="1.15"/>
<path d="M56.5,793.5a4,4 0 1,0 8,0a4,4 0 1,0 -8,0M58,793.5h5 M82,793.5h7 M106.5,793.5a4,4 0 1,0 8,0a4,4 0 1,0 -8,0M108,793.5h5M110.5,791.0v5 M132,793.5h7M135.5,790.0v7" fill="none" stroke="#ffff00" stroke-width="1.15"/>
<rect x="685" y="792" width="121" height="14" fill="#000"/>
</g></svg>
<svg width="1138" height="812" viewBox="0 0 1138 812" style="left:0;top:0">
<path d="M1088.5,542 V778 M822,777.5 H1089 M1084,542.5 H1089 M1084,620.5 H1089 M1084,699 H1089 M1086,581.5 H1089 M1086,659.5 H1089 M1086,738.5 H1089 M822.5,777 v3 M866.5,777 v3 M911.5,777 v3 M955.5,777 v3 M999.5,777 v3 M1044.5,777 v3" fill="none" stroke="#c4c4c4" stroke-width="1" shape-rendering="crispEdges"/>
<path d="M822.4,777.5 L823.0,753.2 L826.7,753.2 L831.0,776.7 L832.8,777.5 L834.7,761.1 L837.8,761.1 L838.6,753.2 L841.4,770.5 L843.0,777.5 L844.5,765.8 L847.0,753.2 L851.9,768.1 L853.7,761.1 L856.8,769.7 L858.7,777.5 L866.4,777.5 L868.1,753.2 L871.6,753.2 L874.7,770.5 L876.5,769.7 L879.0,769.7 L880.8,777.5 L885.1,761.8 L887.0,769.7 L890.0,754.0 L891.9,753.2 L895.0,769.7 L899.9,769.7 L900.9,777.5 L905.4,777.5 L906.6,769.7 L909.5,769.7 L911.0,777.5 L914.0,777.5 L918.3,753.2 L923.2,777.5 L927.0,761.1 L932.5,777.5 L941.7,777.5 L943.5,769.7 L946.0,769.7 L947.8,775.9 L950.3,761.1 L952.8,769.7 L955.0,777.5 L965.4,777.5 L966.6,769.7 L971.5,769.7 L972.8,777.5 L977.0,777.5 L978.3,769.7 L981.4,769.7 L983.2,777.5 L986.3,777.5 L987.5,765.8 L989.4,751.7 L990.6,746.2 L992.4,754.0 L994.3,757.9 L996.7,739.9 L997.4,728.2 L998.6,722.7 L999.2,735.2 L1000.4,746.2 L1001.7,761.8 L1002.9,770.5 L1004.7,754.8 L1007.2,754.8 L1010.3,770.5 L1011.5,769.7 L1014.0,754.0 L1017.0,757.9 L1018.9,754.0 L1021.3,739.9 L1022.6,741.5 L1025.0,738.4 L1026.9,743.8 L1030.0,754.0 L1031.8,777.5 L1033.6,754.0 L1036.1,746.2 L1038.0,761.8 L1041.0,765.8 L1043.5,770.5 L1045.3,754.0 L1048.4,739.9 L1050.2,751.7 L1052.1,746.2 L1053.9,754.0 L1055.8,746.2 L1057.6,757.9 L1059.5,738.4 L1060.7,730.5 L1062.5,738.4 L1064.4,761.8 L1066.2,746.2 L1069.3,746.2 L1071.2,761.8 L1073.0,754.0 L1075.5,741.5 L1077.9,754.0 L1079.8,761.8 L1081.6,746.2 L1082.8,730.5 L1084.7,730.5 L1085.9,754.0 L1087.8,761.8 L1088.4,777.5" fill="none" stroke="#ffffff" stroke-width="1" stroke-linejoin="miter" shape-rendering="crispEdges"/>
<path d="M822.4,777.5 L823.7,765.8 L825.4,765.8 L826.7,777.5 M840.8,777.5 L843.0,769.7 L846.0,769.7 L848.2,777.5 M851.9,777.5 L853.4,769.7 L855.3,769.7 L856.8,777.5 M917.1,777.5 L918.6,769.7 L920.5,769.7 L922.0,777.5 M948.5,777.5 L950.1,769.7 L952.3,769.7 L954.0,777.5 M988.1,777.5 L989.6,761.8 L991.6,761.8 L993.1,777.5 M993.1,777.5 L995.6,761.8 L999.1,761.8 L1001.7,777.5 M1011.5,777.5 L1015.2,761.8 L1020.1,761.8 L1023.8,777.5 M1042.3,777.5 L1045.6,769.7 L1050.0,769.7 L1053.3,777.5 M1053.3,777.5 L1057.0,761.8 L1061.9,761.8 L1065.6,777.5 M1081.6,777.5 L1083.6,754.0 L1086.3,754.0 L1088.4,777.5" fill="none" stroke="#99ccff" stroke-width="1" shape-rendering="crispEdges"/>
<path d="M822.6,777.5 L823.8,757.9 L825.5,757.9 L826.7,777.5 M838.4,777.5 L839.8,765.8 L841.8,765.8 L843.3,777.5 M844.5,777.5 L846.2,757.9 L848.4,757.9 L850.1,777.5 M854.4,777.5 L855.3,769.7 L856.5,769.7 L857.4,777.5 M867.9,777.5 L869.6,761.8 L871.8,761.8 L873.4,777.5 M888.8,777.5 L890.3,761.8 L892.2,761.8 L893.7,777.5 M917.1,777.5 L918.6,761.8 L920.5,761.8 L922.0,777.5 M950.3,777.5 L951.4,769.7 L952.9,769.7 L954.0,777.5 M986.9,777.5 L988.0,761.8 L989.5,761.8 L990.6,777.5 M991.8,777.5 L992.9,761.8 L994.4,761.8 L995.5,777.5 M996.7,777.5 L998.2,746.2 L1000.2,746.2 L1001.7,777.5 M1014.0,777.5 L1015.4,769.7 L1017.4,769.7 L1018.9,777.5 M1020.1,777.5 L1021.6,746.2 L1023.6,746.2 L1025.0,777.5 M1043.5,777.5 L1045.0,757.9 L1046.9,757.9 L1048.4,777.5 M1048.4,777.5 L1049.5,754.0 L1051.0,754.0 L1052.1,777.5 M1058.2,777.5 L1059.7,746.2 L1061.7,746.2 L1063.2,777.5 M1068.1,777.5 L1069.6,761.8 L1071.5,761.8 L1073.0,777.5 M1074.2,777.5 L1075.3,754.0 L1076.8,754.0 L1077.9,777.5 M1081.6,777.5 L1083.5,746.2 L1085.9,746.2 L1087.8,777.5" fill="none" stroke="#ff0000" stroke-width="1" shape-rendering="crispEdges"/>
<path d="M867.9,777.5 L869.6,769.7 L871.8,769.7 L873.4,777.5 M1043.5,777.5 L1045.3,769.7 L1047.8,769.7 L1049.6,777.5" fill="none" stroke="#ff77bb" stroke-width="1" shape-rendering="crispEdges"/>
<path d="M888.2,777.5 L890.2,769.7 L892.9,769.7 L895.0,777.5 M1071.8,777.5 L1073.8,769.7 L1076.5,769.7 L1078.5,777.5" fill="none" stroke="#00dd00" stroke-width="1" shape-rendering="crispEdges"/>
</svg>
<div style="position:absolute;left:812px;top:8px;width:320px;height:320px;box-sizing:border-box;border:1px solid #c8c8c8;border-radius:5px;"></div><div style="position:absolute;left:812px;top:333px;width:320px;height:115px;box-sizing:border-box;border:1px solid #c8c8c8;border-radius:5px;"></div><div style="position:absolute;left:812px;top:454px;width:320px;height:349px;box-sizing:border-box;border:1px solid #c8c8c8;border-radius:5px;"></div><div style="position:absolute;left:819px;top:16px;width:58px;height:18px;box-sizing:border-box;background:#5a0000;border:1px solid;border-color:#e8e8e8 #8a8a8a #8a8a8a #e8e8e8;"></div><div style="position:absolute;left:883px;top:16px;width:58px;height:18px;box-sizing:border-box;background:#333;border:1px solid;border-color:#e8e8e8 #8a8a8a #8a8a8a #e8e8e8;"></div><div class="t" style="left:824.70px;top:19.69px;font-size:12px;line-height:12px;font-weight:bold;color:#d8d8d8;transform:scaleX(1.0750);transform-origin:0 0;">STRIKE</div><div class="t" style="left:891.00px;top:19.69px;font-size:12px;line-height:12px;font-weight:bold;color:#c8c8c8;transform:scaleX(1.1351);transform-origin:0 0;">NOISE</div><div style="position:absolute;left:994px;top:16px;width:128px;height:18px;box-sizing:border-box;background:#333;border:1px solid;border-color:#e8e8e8 #8a8a8a #8a8a8a #e8e8e8;"></div><div class="t" style="left:998.60px;top:19.79px;font-size:12px;line-height:12px;font-weight:bold;color:#fff;transform:scaleX(1.1808);transform-origin:0 0;">Bng 124°</div><div class="t" style="left:1076.00px;top:19.79px;font-size:12px;line-height:12px;font-weight:bold;color:#00ff00;transform:scaleX(1.2059);transform-origin:0 0;">287mi</div><div style="position:absolute;left:821px;top:64px;width:82px;height:16px;box-sizing:border-box;background:#606060;border:1px solid;border-color:#e8e8e8 #8a8a8a #8a8a8a #e8e8e8;"></div><div class="t" style="left:829.60px;top:66.29px;font-size:12px;line-height:12px;font-weight:normal;color:#e8e8e8;transform:scaleX(1.1034);transform-origin:0 0;">Strikes/min</div><div style="position:absolute;left:931px;top:64px;width:82px;height:16px;box-sizing:border-box;background:#606060;border:1px solid;border-color:#e8e8e8 #8a8a8a #8a8a8a #e8e8e8;"></div><div class="t" style="left:943.50px;top:66.29px;font-size:12px;line-height:12px;font-weight:normal;color:#e8e8e8;transform:scaleX(1.0830);transform-origin:0 0;">Close/min</div><div style="position:absolute;left:1041px;top:64px;width:82px;height:16px;box-sizing:border-box;background:#606060;border:1px solid;border-color:#e8e8e8 #8a8a8a #8a8a8a #e8e8e8;"></div><div class="t" style="left:1050.60px;top:66.29px;font-size:12px;line-height:12px;font-weight:normal;color:#e8e8e8;transform:scaleX(1.0559);transform-origin:0 0;">Noises/min</div><div class="t" style="left:884.60px;top:87.89px;font-size:29px;line-height:29px;font-weight:bold;color:#fff;transform:scaleX(1.1000);transform-origin:0 0;">0</div><div class="t" style="left:994.80px;top:87.89px;font-size:29px;line-height:29px;font-weight:bold;color:#fff;transform:scaleX(1.1000);transform-origin:0 0;">0</div><div class="t" style="left:1104.60px;top:87.89px;font-size:29px;line-height:29px;font-weight:bold;color:#c0c0c0;transform:scaleX(1.1000);transform-origin:0 0;">0</div><div class="t" style="left:826.70px;top:132.17px;font-size:13px;line-height:13px;font-weight:normal;color:#fff;transform:scaleX(1.0662);transform-origin:0 0;">Total Strikes</div><div class="t" style="left:944.60px;top:132.17px;font-size:13px;line-height:13px;font-weight:normal;color:#fff;transform:scaleX(1.0609);transform-origin:0 0;">Total Close</div><div class="t" style="left:1048.60px;top:132.17px;font-size:13px;line-height:13px;font-weight:normal;color:#c0c0c0;transform:scaleX(1.0394);transform-origin:0 0;">Total Noises</div><div class="t" style="left:879.80px;top:150.97px;font-size:13px;line-height:13px;font-weight:normal;color:#fff;transform:scaleX(1.0273);transform-origin:0 0;">260</div><div class="t" style="left:1005.60px;top:150.97px;font-size:13px;line-height:13px;font-weight:normal;color:#fff;transform:scaleX(0.9714);transform-origin:0 0;">0</div><div class="t" style="left:1107.50px;top:150.97px;font-size:13px;line-height:13px;font-weight:normal;color:#fff;transform:scaleX(1.0643);transform-origin:0 0;">62</div><div class="t" style="left:821.20px;top:204.77px;font-size:13px;line-height:13px;font-weight:normal;color:#c0c0c0;transform:scaleX(1.1156);transform-origin:0 0;">Lightning type distribution</div><div style="position:absolute;left:821px;top:217px;width:303px;height:1px;box-sizing:border-box;background:#a0a0a0;"></div><div class="t" style="left:821.00px;top:225.77px;font-size:13px;line-height:13px;font-weight:bold;color:#fff;transform:scaleX(0.9767);transform-origin:0 0;">Cloud-ground</div><div class="t" style="left:821.00px;top:279.87px;font-size:13px;line-height:13px;font-weight:bold;color:#fff;transform:scaleX(1.0063);transform-origin:0 0;">Intracloud</div><div class="t" style="left:821.00px;top:250.47px;font-size:13px;line-height:13px;font-weight:bold;color:#c0c0c0;transform:scaleX(1.0079);transform-origin:0 0;">Count</div><div class="t" style="left:821.00px;top:304.37px;font-size:13px;line-height:13px;font-weight:bold;color:#c0c0c0;transform:scaleX(1.0079);transform-origin:0 0;">Count</div><div class="t" style="left:912.70px;top:227.27px;font-size:13px;line-height:13px;font-weight:bold;color:#fff;transform:scaleX(1.0375);transform-origin:0 0;">+</div><div style="position:absolute;left:1016px;top:231px;width:7px;height:2px;box-sizing:border-box;background:#fff;"></div><div style="position:absolute;left:925px;top:227px;width:51px;height:11px;box-sizing:border-box;border:1px solid #909090;border-radius:2px;"></div><div style="position:absolute;left:926px;top:228px;width:29px;height:9px;box-sizing:border-box;background:#ff0000;border-radius:1px 0 0 1px;"></div><div class="t" style="left:979.20px;top:225.77px;font-size:13px;line-height:13px;font-weight:bold;color:#fff;transform:scaleX(1.1269);transform-origin:0 0;">59%</div><div style="position:absolute;left:1028px;top:227px;width:51px;height:11px;box-sizing:border-box;border:1px solid #909090;border-radius:2px;"></div><div style="position:absolute;left:1029px;top:228px;width:17px;height:9px;box-sizing:border-box;background:#99ccff;border-radius:1px 0 0 1px;"></div><div class="t" style="left:1082.00px;top:225.77px;font-size:13px;line-height:13px;font-weight:bold;color:#fff;transform:scaleX(1.1346);transform-origin:0 0;">35%</div><div class="t" style="left:925.40px;top:250.47px;font-size:13px;line-height:13px;font-weight:bold;color:#fff;transform:scaleX(1.0591);transform-origin:0 0;">154</div><div class="t" style="left:1028.00px;top:250.47px;font-size:13px;line-height:13px;font-weight:bold;color:#fff;transform:scaleX(1.1071);transform-origin:0 0;">91</div><div class="t" style="left:912.70px;top:281.37px;font-size:13px;line-height:13px;font-weight:bold;color:#fff;transform:scaleX(1.0375);transform-origin:0 0;">+</div><div style="position:absolute;left:1016px;top:285px;width:7px;height:2px;box-sizing:border-box;background:#fff;"></div><div style="position:absolute;left:925px;top:281px;width:51px;height:11px;box-sizing:border-box;border:1px solid #909090;border-radius:2px;"></div><div style="position:absolute;left:926px;top:282px;width:2px;height:9px;box-sizing:border-box;background:#ff66aa;border-radius:1px 0 0 1px;"></div><div class="t" style="left:979.20px;top:279.87px;font-size:13px;line-height:13px;font-weight:bold;color:#fff;transform:scaleX(1.1158);transform-origin:0 0;">3%</div><div style="position:absolute;left:1028px;top:281px;width:51px;height:11px;box-sizing:border-box;border:1px solid #909090;border-radius:2px;"></div><div style="position:absolute;left:1029px;top:282px;width:2px;height:9px;box-sizing:border-box;background:#00dd00;border-radius:1px 0 0 1px;"></div><div class="t" style="left:1082.00px;top:279.87px;font-size:13px;line-height:13px;font-weight:bold;color:#fff;transform:scaleX(1.1368);transform-origin:0 0;">3%</div><div class="t" style="left:925.40px;top:304.57px;font-size:13px;line-height:13px;font-weight:bold;color:#fff;transform:scaleX(1.0857);transform-origin:0 0;">8</div><div class="t" style="left:1028.00px;top:304.57px;font-size:13px;line-height:13px;font-weight:bold;color:#fff;transform:scaleX(1.1143);transform-origin:0 0;">7</div><div class="t" style="left:13.30px;top:763.23px;font-size:10px;line-height:10px;font-weight:normal;color:#d8d8d8;transform:scaleX(0.9079);transform-origin:0 0;">Symbols</div><div class="t" style="left:53.00px;top:763.23px;font-size:10px;line-height:10px;font-weight:normal;color:#d8d8d8;transform:scaleX(0.9211);transform-origin:0 0;">-CG</div><div class="t" style="left:77.70px;top:763.23px;font-size:10px;line-height:10px;font-weight:normal;color:#d8d8d8;transform:scaleX(1.0000);transform-origin:0 0;">-IC</div><div class="t" style="left:98.70px;top:763.23px;font-size:10px;line-height:10px;font-weight:normal;color:#d8d8d8;transform:scaleX(0.9286);transform-origin:0 0;">+CG</div><div class="t" style="left:123.60px;top:763.23px;font-size:10px;line-height:10px;font-weight:normal;color:#d8d8d8;transform:scaleX(0.9375);transform-origin:0 0;">+IC</div><div class="t" style="left:153.10px;top:763.23px;font-size:10px;line-height:10px;font-weight:normal;color:#d8d8d8;transform:scaleX(0.9091);transform-origin:0 0;">Strike age color codes</div><div class="t" style="left:13.30px;top:776.12px;font-size:10px;line-height:10px;font-weight:normal;color:#d8d8d8;transform:scaleX(0.8750);transform-origin:0 0;">Recent</div><div class="t" style="left:13.30px;top:788.62px;font-size:10px;line-height:10px;font-weight:normal;color:#d8d8d8;transform:scaleX(0.9375);transform-origin:0 0;">Old</div><div class="t" style="left:153.60px;top:776.33px;font-size:10px;line-height:10px;font-weight:normal;color:#ffff00;transform:scaleX(0.9235);transform-origin:0 0;">15+</div><div class="t" style="left:187.80px;top:776.33px;font-size:10px;line-height:10px;font-weight:normal;color:#ffcc00;transform:scaleX(0.9235);transform-origin:0 0;">30+</div><div class="t" style="left:222.00px;top:776.33px;font-size:10px;line-height:10px;font-weight:normal;color:#ffaa00;transform:scaleX(0.9235);transform-origin:0 0;">45+</div><div class="t" style="left:153.60px;top:788.83px;font-size:10px;line-height:10px;font-weight:normal;color:#ff8800;transform:scaleX(0.9235);transform-origin:0 0;">60+</div><div class="t" style="left:187.80px;top:788.83px;font-size:10px;line-height:10px;font-weight:normal;color:#ff6600;transform:scaleX(0.9235);transform-origin:0 0;">75+</div><div class="t" style="left:222.00px;top:788.83px;font-size:10px;line-height:10px;font-weight:normal;color:#ff4400;transform:scaleX(0.9235);transform-origin:0 0;">90+</div><div class="t" style="left:688.70px;top:793.83px;font-size:10px;line-height:10px;font-weight:normal;color:#f0f0f0;transform:scaleX(0.9467);transform-origin:0 0;">&#169;2005 Astrogenic Systems</div><div class="t" style="left:821.70px;top:339.26px;font-size:16.5px;line-height:16.5px;font-weight:bold;color:#00ff00;transform:scaleX(1.2243);transform-origin:0 0;">3/14/2026 10:50:11 AM</div><div style="position:absolute;left:821px;top:358px;width:302px;height:1px;box-sizing:border-box;background:#a0a0a0;"></div><div class="t" style="left:821.20px;top:376.77px;font-size:13px;line-height:13px;font-weight:normal;color:#fff;transform:scaleX(1.0340);transform-origin:0 0;">Squelch</div><div class="t" style="left:909.50px;top:376.77px;font-size:13px;line-height:13px;font-weight:normal;color:#fff;transform:scaleX(0.9714);transform-origin:0 0;">0</div><div class="t" style="left:981.40px;top:376.77px;font-size:13px;line-height:13px;font-weight:normal;color:#fff;transform:scaleX(1.0610);transform-origin:0 0;">Upload</div><div class="t" style="left:1061.40px;top:376.77px;font-size:13px;line-height:13px;font-weight:normal;color:#c0c0c0;transform:scaleX(1.0490);transform-origin:0 0;">Disabled</div><div class="t" style="left:821.20px;top:396.87px;font-size:13px;line-height:13px;font-weight:normal;color:#fff;transform:scaleX(1.0662);transform-origin:0 0;">Persistence</div><div class="t" style="left:909.50px;top:396.87px;font-size:13px;line-height:13px;font-weight:normal;color:#fff;transform:scaleX(1.0590);transform-origin:0 0;">90 min</div><div class="t" style="left:981.40px;top:396.87px;font-size:13px;line-height:13px;font-weight:normal;color:#fff;transform:scaleX(1.0913);transform-origin:0 0;">Capture</div><div class="t" style="left:1061.40px;top:396.87px;font-size:13px;line-height:13px;font-weight:normal;color:#00ee00;transform:scaleX(1.0371);transform-origin:0 0;">Active</div><div class="t" style="left:821.20px;top:416.97px;font-size:13px;line-height:13px;font-weight:normal;color:#fff;transform:scaleX(1.0421);transform-origin:0 0;">Range</div><div class="t" style="left:909.50px;top:416.97px;font-size:13px;line-height:13px;font-weight:normal;color:#fff;transform:scaleX(1.0590);transform-origin:0 0;">313 mi</div><div class="t" style="left:981.40px;top:416.97px;font-size:13px;line-height:13px;font-weight:normal;color:#fff;transform:scaleX(1.0019);transform-origin:0 0;">Receiver</div><div class="t" style="left:1061.40px;top:416.97px;font-size:13px;line-height:13px;font-weight:normal;color:#00ee00;transform:scaleX(1.0417);transform-origin:0 0;">Enabled</div><div class="t" style="left:821.20px;top:464.67px;font-size:13px;line-height:13px;font-weight:normal;color:#c0c0c0;transform:scaleX(1.0561);transform-origin:0 0;">Uptime</div><div class="t" style="left:910.40px;top:464.67px;font-size:13px;line-height:13px;font-weight:normal;color:#fff;transform:scaleX(1.0894);transform-origin:0 0;">1462:35</div><div class="t" style="left:981.50px;top:464.67px;font-size:13px;line-height:13px;font-weight:normal;color:#c0c0c0;transform:scaleX(1.0483);transform-origin:0 0;">Peak time</div><div class="t" style="left:1061.40px;top:464.67px;font-size:13px;line-height:13px;font-weight:normal;color:#c0c0c0;transform:scaleX(1.0043);transform-origin:0 0;">Plot</div><div class="t" style="left:821.20px;top:487.07px;font-size:13px;line-height:13px;font-weight:normal;color:#c0c0c0;transform:scaleX(1.0804);transform-origin:0 0;">Peak rate</div><div class="t" style="left:909.80px;top:487.07px;font-size:13px;line-height:13px;font-weight:normal;color:#fff;transform:scaleX(1.0594);transform-origin:0 0;">7/min</div><div class="t" style="left:982.30px;top:487.07px;font-size:13px;line-height:13px;font-weight:normal;color:#fff;transform:scaleX(1.0436);transform-origin:0 0;">10:30 AM</div><div class="t" style="left:1061.40px;top:487.07px;font-size:13px;line-height:13px;font-weight:normal;color:#fff;transform:scaleX(1.0727);transform-origin:0 0;">Strike</div><div class="t" style="left:822.70px;top:516.97px;font-size:13px;line-height:13px;font-weight:normal;color:#c0c0c0;transform:scaleX(1.0814);transform-origin:0 0;">Trend graph</div><div class="t" style="left:908.60px;top:516.97px;font-size:13px;line-height:13px;font-weight:normal;color:#fff;transform:scaleX(1.0538);transform-origin:0 0;">60 min</div><div class="t" style="left:1092.20px;top:537.31px;font-size:11px;line-height:11px;font-weight:normal;color:#c0c0c0;transform:scaleX(1.0750);transform-origin:0 0;">30</div><div class="t" style="left:1092.20px;top:615.11px;font-size:11px;line-height:11px;font-weight:normal;color:#c0c0c0;transform:scaleX(1.0750);transform-origin:0 0;">20</div><div class="t" style="left:1092.20px;top:693.71px;font-size:11px;line-height:11px;font-weight:normal;color:#c0c0c0;transform:scaleX(1.0750);transform-origin:0 0;">10</div><div class="t" style="left:820.00px;top:783.31px;font-size:11px;line-height:11px;font-weight:normal;color:#c0c0c0;transform:scaleX(1.1000);transform-origin:0 0;">60</div><div class="t" style="left:864.20px;top:783.31px;font-size:11px;line-height:11px;font-weight:normal;color:#c0c0c0;transform:scaleX(1.1000);transform-origin:0 0;">50</div><div class="t" style="left:909.00px;top:783.31px;font-size:11px;line-height:11px;font-weight:normal;color:#c0c0c0;transform:scaleX(1.1000);transform-origin:0 0;">40</div><div class="t" style="left:953.60px;top:783.31px;font-size:11px;line-height:11px;font-weight:normal;color:#c0c0c0;transform:scaleX(1.1000);transform-origin:0 0;">30</div><div class="t" style="left:998.00px;top:783.31px;font-size:11px;line-height:11px;font-weight:normal;color:#c0c0c0;transform:scaleX(1.1000);transform-origin:0 0;">20</div><div class="t" style="left:1042.50px;top:783.31px;font-size:11px;line-height:11px;font-weight:normal;color:#c0c0c0;transform:scaleX(1.1000);transform-origin:0 0;">10</div><div class="t" style="left:1087.30px;top:783.31px;font-size:11px;line-height:11px;font-weight:normal;color:#c0c0c0;transform:scaleX(1.0667);transform-origin:0 0;">0</div><div class="t" style="left:1101.00px;top:783.31px;font-size:11px;line-height:11px;font-weight:normal;color:#c0c0c0;transform:scaleX(0.9444);transform-origin:0 0;">min</div>
</body></html>
